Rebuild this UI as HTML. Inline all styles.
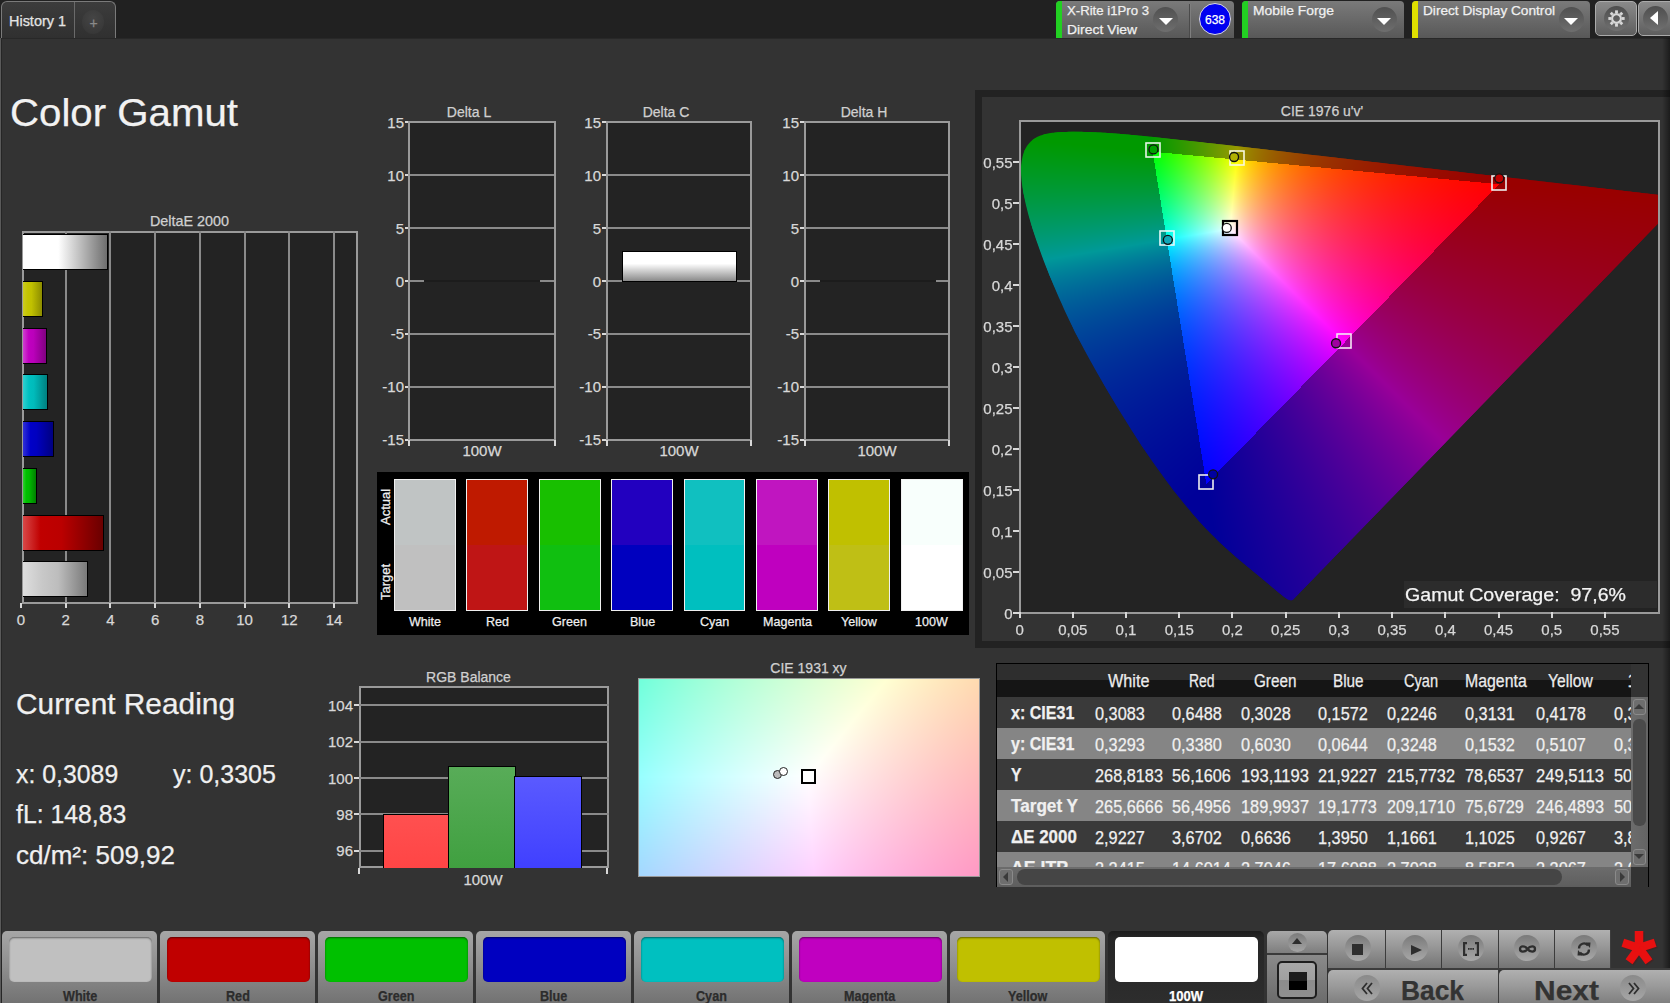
<!DOCTYPE html>
<html><head><meta charset="utf-8"><title>Color Gamut</title>
<style>
html,body{margin:0;padding:0;}
body{width:1670px;height:1003px;overflow:hidden;position:relative;background:#333;font-family:"Liberation Sans",sans-serif;}
.a{position:absolute;}
.fb rect{width:10px;height:10px;}
.t{position:absolute;white-space:nowrap;line-height:1;transform-origin:0 0;-webkit-text-stroke:0.25px currentColor;}
</style></head><body>
<div class="a" style="left:0px;top:0px;width:1670px;height:38px;background:#212121;"></div>
<div class="a" style="left:0px;top:38px;width:1670px;height:965px;background:#333;"></div>
<div class="a" style="left:0px;top:38px;width:1670px;height:1px;background:#282828;"></div>
<div class="a" style="left:0px;top:38px;width:1px;height:965px;background:#5a5a5a;"></div>
<div class="a" style="left:1px;top:38px;width:1px;height:965px;background:#262626;"></div>
<div class="a" style="left:1px;top:1px;width:115px;height:37px;border:1px solid #7a7a7a;border-bottom:none;border-radius:6px 6px 0 0;background:linear-gradient(#3c3c3c,#303030);box-sizing:border-box;"></div>
<div class="a" style="left:74px;top:2px;width:1px;height:36px;background:#6a6a6a;"></div>
<div class="a" style="left:82px;top:10px;width:22px;height:24px;border-radius:50%;background:radial-gradient(circle at 50% 35%,#454545,#343434);"></div>
<div class="t" style="left:89.41px;top:16.15px;font-size:14.00px;color:#8a8a8a;">+</div>
<div class="t" style="left:9.00px;top:14.15px;font-size:14.00px;color:#e4e4e4;transform:scaleX(1.0319);">History 1</div>
<div class="a" style="left:1056px;top:1px;width:178px;height:37px;border-radius:4px 4px 0 0;background:linear-gradient(#7a7a7a,#585858);"></div><div class="a" style="left:1056px;top:1px;width:6px;height:37px;border-radius:4px 0 0 0;background:#22d022;"></div>
<div class="a" style="left:1189px;top:4px;width:1px;height:34px;background:#4a4a4a;"></div>
<div class="a" style="left:1190px;top:4px;width:1px;height:34px;background:#7e7e7e;"></div>
<div class="a" style="left:1153px;top:7px;width:25px;height:25px;border-radius:50%;background:linear-gradient(#505050,#6e6e6e);"></div><div class="a" style="left:1158.5px;top:17.5px;width:0;height:0;border-left:7px solid transparent;border-right:7px solid transparent;border-top:7px solid #fff;"></div>
<div class="t" style="left:1067.00px;top:4.00px;font-size:13.00px;color:#f0f0f0;transform:scaleX(1.0133);">X-Rite i1Pro 3</div>
<div class="t" style="left:1067.00px;top:23.00px;font-size:13.00px;color:#f0f0f0;transform:scaleX(1.0686);">Direct View</div>
<div class="a" style="left:1199px;top:3px;width:32px;height:32px;border-radius:50%;background:#0000f0;box-sizing:border-box;border:1px solid #ddd;"></div>
<div class="t" style="left:1205.00px;top:13.84px;font-size:12.00px;color:#fff;">638</div>
<div class="a" style="left:1242px;top:1px;width:162px;height:37px;border-radius:4px 4px 0 0;background:linear-gradient(#7a7a7a,#585858);"></div><div class="a" style="left:1242px;top:1px;width:6px;height:37px;border-radius:4px 0 0 0;background:#22d022;"></div>
<div class="a" style="left:1371.5px;top:7px;width:25px;height:25px;border-radius:50%;background:linear-gradient(#505050,#6e6e6e);"></div><div class="a" style="left:1377px;top:17.5px;width:0;height:0;border-left:7px solid transparent;border-right:7px solid transparent;border-top:7px solid #fff;"></div>
<div class="t" style="left:1253.00px;top:4.00px;font-size:13.00px;color:#f0f0f0;transform:scaleX(1.0676);">Mobile Forge</div>
<div class="a" style="left:1412px;top:1px;width:178px;height:37px;border-radius:4px 4px 0 0;background:linear-gradient(#7a7a7a,#585858);"></div><div class="a" style="left:1412px;top:1px;width:6px;height:37px;border-radius:4px 0 0 0;background:#e0e000;"></div>
<div class="a" style="left:1558.5px;top:7px;width:25px;height:25px;border-radius:50%;background:linear-gradient(#505050,#6e6e6e);"></div><div class="a" style="left:1564px;top:17.5px;width:0;height:0;border-left:7px solid transparent;border-right:7px solid transparent;border-top:7px solid #fff;"></div>
<div class="t" style="left:1423.00px;top:4.00px;font-size:13.00px;color:#f0f0f0;transform:scaleX(1.0501);">Direct Display Control</div>
<div class="a" style="left:1595px;top:1px;width:42px;height:35px;border-radius:5px;border:1px solid #aaa;box-sizing:border-box;background:linear-gradient(#8a8a8a,#5e5e5e);"></div>
<div class="a" style="left:1604px;top:6px;width:25px;height:25px;border-radius:50%;background:linear-gradient(#4e4e4e,#707070);"></div>
<svg class="a" style="left:1605px;top:7px;" width="23" height="23" viewBox="-12 -12 24 24"><g fill="none" stroke="#d8d8d8" stroke-width="2.2"><circle r="4.6"/></g><g stroke="#d8d8d8" stroke-width="3"><line x1="0" y1="-5.5" x2="0" y2="-8.5" transform="rotate(0)"/><line x1="0" y1="-5.5" x2="0" y2="-8.5" transform="rotate(45)"/><line x1="0" y1="-5.5" x2="0" y2="-8.5" transform="rotate(90)"/><line x1="0" y1="-5.5" x2="0" y2="-8.5" transform="rotate(135)"/><line x1="0" y1="-5.5" x2="0" y2="-8.5" transform="rotate(180)"/><line x1="0" y1="-5.5" x2="0" y2="-8.5" transform="rotate(225)"/><line x1="0" y1="-5.5" x2="0" y2="-8.5" transform="rotate(270)"/><line x1="0" y1="-5.5" x2="0" y2="-8.5" transform="rotate(315)"/></g></svg>
<div class="a" style="left:1638px;top:1px;width:40px;height:35px;border-radius:5px;border:1px solid #aaa;box-sizing:border-box;background:linear-gradient(#8a8a8a,#5e5e5e);"></div>
<div class="a" style="left:1643px;top:6px;width:25px;height:25px;border-radius:50%;background:linear-gradient(#4e4e4e,#707070);"></div>
<div class="a" style="left:1650px;top:11px;width:0;height:0;border-top:7px solid transparent;border-bottom:7px solid transparent;border-right:8px solid #fff;"></div>
<div class="t" style="left:10.00px;top:92.56px;font-size:39.50px;color:#f2f2f2;transform:scaleX(1.0183);">Color Gamut</div>
<div class="t" style="left:149.50px;top:214.15px;font-size:14.00px;color:#d0d0d0;transform:scaleX(1.0252);">DeltaE 2000</div>
<div class="a" style="left:21.5px;top:231px;width:336px;height:372.5px;background:#232323;box-sizing:border-box;border:2px solid #9a9a9a;"></div>
<div class="a" style="left:65px;top:231px;width:2px;height:372.5px;background:#8a8a8a;"></div>
<div class="a" style="left:109px;top:231px;width:2px;height:372.5px;background:#8a8a8a;"></div>
<div class="a" style="left:154px;top:231px;width:2px;height:372.5px;background:#8a8a8a;"></div>
<div class="a" style="left:199px;top:231px;width:2px;height:372.5px;background:#8a8a8a;"></div>
<div class="a" style="left:244px;top:231px;width:2px;height:372.5px;background:#8a8a8a;"></div>
<div class="a" style="left:288px;top:231px;width:2px;height:372.5px;background:#8a8a8a;"></div>
<div class="a" style="left:333px;top:231px;width:2px;height:372.5px;background:#8a8a8a;"></div>
<div class="a" style="left:20px;top:603px;width:2px;height:5px;background:#d8d8d8;"></div>
<div class="t" style="left:16.63px;top:612.10px;font-size:15.00px;color:#d8d8d8;">0</div>
<div class="a" style="left:65px;top:603px;width:2px;height:5px;background:#d8d8d8;"></div>
<div class="t" style="left:61.39px;top:612.10px;font-size:15.00px;color:#d8d8d8;">2</div>
<div class="a" style="left:109px;top:603px;width:2px;height:5px;background:#d8d8d8;"></div>
<div class="t" style="left:106.15px;top:612.10px;font-size:15.00px;color:#d8d8d8;">4</div>
<div class="a" style="left:154px;top:603px;width:2px;height:5px;background:#d8d8d8;"></div>
<div class="t" style="left:150.91px;top:612.10px;font-size:15.00px;color:#d8d8d8;">6</div>
<div class="a" style="left:199px;top:603px;width:2px;height:5px;background:#d8d8d8;"></div>
<div class="t" style="left:195.67px;top:612.10px;font-size:15.00px;color:#d8d8d8;">8</div>
<div class="a" style="left:244px;top:603px;width:2px;height:5px;background:#d8d8d8;"></div>
<div class="t" style="left:236.26px;top:612.10px;font-size:15.00px;color:#d8d8d8;">10</div>
<div class="a" style="left:288px;top:603px;width:2px;height:5px;background:#d8d8d8;"></div>
<div class="t" style="left:281.02px;top:612.10px;font-size:15.00px;color:#d8d8d8;">12</div>
<div class="a" style="left:333px;top:603px;width:2px;height:5px;background:#d8d8d8;"></div>
<div class="t" style="left:325.78px;top:612.10px;font-size:15.00px;color:#d8d8d8;">14</div>
<div class="a" style="left:22.6px;top:234.3px;width:85.64px;height:36px;box-sizing:border-box;border:1.5px solid #000;border-left:none;background:linear-gradient(to right,#ffffff 0%,#ffffff 42%,#6e6e6e 100%);"></div>
<div class="a" style="left:22.6px;top:281px;width:20.44px;height:36px;box-sizing:border-box;border:1.5px solid #000;border-left:none;background:linear-gradient(to right,#cccc20 0%,#c4c400 25%,#c0c000 45%,#8c8c00 100%);"></div>
<div class="a" style="left:22.6px;top:327.7px;width:24.37px;height:36px;box-sizing:border-box;border:1.5px solid #000;border-left:none;background:linear-gradient(to right,#d040d0 0%,#c000c0 25%,#bb00bb 45%,#800080 100%);"></div>
<div class="a" style="left:22.6px;top:374.4px;width:25.8px;height:36px;box-sizing:border-box;border:1.5px solid #000;border-left:none;background:linear-gradient(to right,#30d0d0 0%,#00c0c0 25%,#00bbbb 45%,#008080 100%);"></div>
<div class="a" style="left:22.6px;top:421.1px;width:30.92px;height:36px;box-sizing:border-box;border:1.5px solid #000;border-left:none;background:linear-gradient(to right,#3030d8 0%,#0000c8 25%,#0000c0 45%,#000080 100%);"></div>
<div class="a" style="left:22.6px;top:467.8px;width:14.55px;height:36px;box-sizing:border-box;border:1.5px solid #000;border-left:none;background:linear-gradient(to right,#30d030 0%,#00c000 25%,#00bb00 45%,#008000 100%);"></div>
<div class="a" style="left:22.6px;top:514.5px;width:81.84px;height:36px;box-sizing:border-box;border:1.5px solid #000;border-left:none;background:linear-gradient(to right,#d84848 0%,#c00000 22%,#bb0000 48%,#6a0000 100%);"></div>
<div class="a" style="left:22.6px;top:561.2px;width:65.11px;height:36px;box-sizing:border-box;border:1.5px solid #000;border-left:none;background:linear-gradient(to right,#dedede 0%,#c8c8c8 30%,#bdbdbd 55%,#7a7a7a 100%);"></div>
<div class="t" style="left:446.82px;top:105.15px;font-size:14.00px;color:#d0d0d0;">Delta L</div><div class="a" style="left:409.5px;top:122.4px;width:145px;height:317.2px;background:#232323;"></div><div class="a" style="left:409.5px;top:121px;width:145px;height:2px;background:#9a9a9a;"></div><div class="a" style="left:404.5px;top:121px;width:5px;height:2px;background:#d8d8d8;"></div><div class="t" style="left:387.31px;top:115.00px;font-size:15.00px;color:#d8d8d8;">15</div><div class="a" style="left:409.5px;top:174px;width:145px;height:2px;background:#8a8a8a;"></div><div class="a" style="left:404.5px;top:174px;width:5px;height:2px;background:#d8d8d8;"></div><div class="t" style="left:387.31px;top:167.87px;font-size:15.00px;color:#d8d8d8;">10</div><div class="a" style="left:409.5px;top:227px;width:145px;height:2px;background:#8a8a8a;"></div><div class="a" style="left:404.5px;top:227px;width:5px;height:2px;background:#d8d8d8;"></div><div class="t" style="left:395.66px;top:220.74px;font-size:15.00px;color:#d8d8d8;">5</div><div class="a" style="left:409.5px;top:280px;width:145px;height:2px;background:#8a8a8a;"></div><div class="a" style="left:404.5px;top:280px;width:5px;height:2px;background:#d8d8d8;"></div><div class="t" style="left:395.66px;top:273.60px;font-size:15.00px;color:#d8d8d8;">0</div><div class="a" style="left:409.5px;top:333px;width:145px;height:2px;background:#8a8a8a;"></div><div class="a" style="left:404.5px;top:333px;width:5px;height:2px;background:#d8d8d8;"></div><div class="t" style="left:390.66px;top:326.47px;font-size:15.00px;color:#d8d8d8;">-5</div><div class="a" style="left:409.5px;top:386px;width:145px;height:2px;background:#8a8a8a;"></div><div class="a" style="left:404.5px;top:386px;width:5px;height:2px;background:#d8d8d8;"></div><div class="t" style="left:382.32px;top:379.34px;font-size:15.00px;color:#d8d8d8;">-10</div><div class="a" style="left:409.5px;top:439px;width:145px;height:2px;background:#9a9a9a;"></div><div class="a" style="left:404.5px;top:439px;width:5px;height:2px;background:#d8d8d8;"></div><div class="t" style="left:382.32px;top:432.20px;font-size:15.00px;color:#d8d8d8;">-15</div><div class="a" style="left:408px;top:121.4px;width:2px;height:319.2px;background:#9a9a9a;"></div><div class="a" style="left:554px;top:121.4px;width:2px;height:319.2px;background:#9a9a9a;"></div><div class="a" style="left:408px;top:439.6px;width:2px;height:6px;background:#d8d8d8;"></div><div class="a" style="left:554px;top:439.6px;width:2px;height:6px;background:#d8d8d8;"></div><div class="t" style="left:462.41px;top:442.80px;font-size:15.00px;color:#d8d8d8;">100W</div>
<div class="a" style="left:423.5px;top:280.3px;width:116px;height:2px;background:#1c1c1c;"></div>
<div class="t" style="left:642.66px;top:105.15px;font-size:14.00px;color:#d0d0d0;">Delta C</div><div class="a" style="left:606.5px;top:122.4px;width:145px;height:317.2px;background:#232323;"></div><div class="a" style="left:606.5px;top:121px;width:145px;height:2px;background:#9a9a9a;"></div><div class="a" style="left:601.5px;top:121px;width:5px;height:2px;background:#d8d8d8;"></div><div class="t" style="left:584.31px;top:115.00px;font-size:15.00px;color:#d8d8d8;">15</div><div class="a" style="left:606.5px;top:174px;width:145px;height:2px;background:#8a8a8a;"></div><div class="a" style="left:601.5px;top:174px;width:5px;height:2px;background:#d8d8d8;"></div><div class="t" style="left:584.31px;top:167.87px;font-size:15.00px;color:#d8d8d8;">10</div><div class="a" style="left:606.5px;top:227px;width:145px;height:2px;background:#8a8a8a;"></div><div class="a" style="left:601.5px;top:227px;width:5px;height:2px;background:#d8d8d8;"></div><div class="t" style="left:592.66px;top:220.74px;font-size:15.00px;color:#d8d8d8;">5</div><div class="a" style="left:606.5px;top:280px;width:145px;height:2px;background:#8a8a8a;"></div><div class="a" style="left:601.5px;top:280px;width:5px;height:2px;background:#d8d8d8;"></div><div class="t" style="left:592.66px;top:273.60px;font-size:15.00px;color:#d8d8d8;">0</div><div class="a" style="left:606.5px;top:333px;width:145px;height:2px;background:#8a8a8a;"></div><div class="a" style="left:601.5px;top:333px;width:5px;height:2px;background:#d8d8d8;"></div><div class="t" style="left:587.66px;top:326.47px;font-size:15.00px;color:#d8d8d8;">-5</div><div class="a" style="left:606.5px;top:386px;width:145px;height:2px;background:#8a8a8a;"></div><div class="a" style="left:601.5px;top:386px;width:5px;height:2px;background:#d8d8d8;"></div><div class="t" style="left:579.32px;top:379.34px;font-size:15.00px;color:#d8d8d8;">-10</div><div class="a" style="left:606.5px;top:439px;width:145px;height:2px;background:#9a9a9a;"></div><div class="a" style="left:601.5px;top:439px;width:5px;height:2px;background:#d8d8d8;"></div><div class="t" style="left:579.32px;top:432.20px;font-size:15.00px;color:#d8d8d8;">-15</div><div class="a" style="left:606px;top:121.4px;width:2px;height:319.2px;background:#9a9a9a;"></div><div class="a" style="left:750px;top:121.4px;width:2px;height:319.2px;background:#9a9a9a;"></div><div class="a" style="left:606px;top:439.6px;width:2px;height:6px;background:#d8d8d8;"></div><div class="a" style="left:750px;top:439.6px;width:2px;height:6px;background:#d8d8d8;"></div><div class="t" style="left:659.41px;top:442.80px;font-size:15.00px;color:#d8d8d8;">100W</div>
<div class="a" style="left:621.5px;top:250.5px;width:115px;height:31.5px;box-sizing:border-box;border:1.5px solid #000;background:linear-gradient(#ffffff 0%,#ffffff 40%,#8a8a8a 100%);"></div>
<div class="t" style="left:840.66px;top:105.15px;font-size:14.00px;color:#d0d0d0;">Delta H</div><div class="a" style="left:804.5px;top:122.4px;width:145px;height:317.2px;background:#232323;"></div><div class="a" style="left:804.5px;top:121px;width:145px;height:2px;background:#9a9a9a;"></div><div class="a" style="left:799.5px;top:121px;width:5px;height:2px;background:#d8d8d8;"></div><div class="t" style="left:782.31px;top:115.00px;font-size:15.00px;color:#d8d8d8;">15</div><div class="a" style="left:804.5px;top:174px;width:145px;height:2px;background:#8a8a8a;"></div><div class="a" style="left:799.5px;top:174px;width:5px;height:2px;background:#d8d8d8;"></div><div class="t" style="left:782.31px;top:167.87px;font-size:15.00px;color:#d8d8d8;">10</div><div class="a" style="left:804.5px;top:227px;width:145px;height:2px;background:#8a8a8a;"></div><div class="a" style="left:799.5px;top:227px;width:5px;height:2px;background:#d8d8d8;"></div><div class="t" style="left:790.66px;top:220.74px;font-size:15.00px;color:#d8d8d8;">5</div><div class="a" style="left:804.5px;top:280px;width:145px;height:2px;background:#8a8a8a;"></div><div class="a" style="left:799.5px;top:280px;width:5px;height:2px;background:#d8d8d8;"></div><div class="t" style="left:790.66px;top:273.60px;font-size:15.00px;color:#d8d8d8;">0</div><div class="a" style="left:804.5px;top:333px;width:145px;height:2px;background:#8a8a8a;"></div><div class="a" style="left:799.5px;top:333px;width:5px;height:2px;background:#d8d8d8;"></div><div class="t" style="left:785.66px;top:326.47px;font-size:15.00px;color:#d8d8d8;">-5</div><div class="a" style="left:804.5px;top:386px;width:145px;height:2px;background:#8a8a8a;"></div><div class="a" style="left:799.5px;top:386px;width:5px;height:2px;background:#d8d8d8;"></div><div class="t" style="left:777.32px;top:379.34px;font-size:15.00px;color:#d8d8d8;">-10</div><div class="a" style="left:804.5px;top:439px;width:145px;height:2px;background:#9a9a9a;"></div><div class="a" style="left:799.5px;top:439px;width:5px;height:2px;background:#d8d8d8;"></div><div class="t" style="left:777.32px;top:432.20px;font-size:15.00px;color:#d8d8d8;">-15</div><div class="a" style="left:804px;top:121.4px;width:2px;height:319.2px;background:#9a9a9a;"></div><div class="a" style="left:948px;top:121.4px;width:2px;height:319.2px;background:#9a9a9a;"></div><div class="a" style="left:804px;top:439.6px;width:2px;height:6px;background:#d8d8d8;"></div><div class="a" style="left:948px;top:439.6px;width:2px;height:6px;background:#d8d8d8;"></div><div class="t" style="left:857.41px;top:442.80px;font-size:15.00px;color:#d8d8d8;">100W</div>
<div class="a" style="left:819.5px;top:280.3px;width:116px;height:2px;background:#1c1c1c;"></div>
<div class="a" style="left:377px;top:471.5px;width:592px;height:163px;background:#000;"></div>
<div class="a" style="left:394px;top:479px;width:61.8px;height:132px;box-sizing:border-box;border:1.5px solid #f0f0f0;background:linear-gradient(#c0c4c4 0%,#c0c4c4 50%,#c0c0c0 50%,#c0c0c0 100%);"></div>
<div class="t" style="left:408.95px;top:614.57px;font-size:13.50px;color:#f0f0f0;transform:scaleX(0.9300);">White</div>
<div class="a" style="left:466.4px;top:479px;width:61.8px;height:132px;box-sizing:border-box;border:1.5px solid #f0f0f0;background:linear-gradient(#bf1a00 0%,#bf1a00 50%,#bf1515 50%,#bf1515 100%);"></div>
<div class="t" style="left:485.88px;top:614.57px;font-size:13.50px;color:#f0f0f0;transform:scaleX(0.9300);">Red</div>
<div class="a" style="left:538.8px;top:479px;width:61.8px;height:132px;box-sizing:border-box;border:1.5px solid #f0f0f0;background:linear-gradient(#18bf00 0%,#18bf00 50%,#10bf10 50%,#10bf10 100%);"></div>
<div class="t" style="left:552.35px;top:614.57px;font-size:13.50px;color:#f0f0f0;transform:scaleX(0.9300);">Green</div>
<div class="a" style="left:611.2px;top:479px;width:61.8px;height:132px;box-sizing:border-box;border:1.5px solid #f0f0f0;background:linear-gradient(#2200bf 0%,#2200bf 50%,#0000bf 50%,#0000bf 100%);"></div>
<div class="t" style="left:629.64px;top:614.57px;font-size:13.50px;color:#f0f0f0;transform:scaleX(0.9300);">Blue</div>
<div class="a" style="left:683.6px;top:479px;width:61.8px;height:132px;box-sizing:border-box;border:1.5px solid #f0f0f0;background:linear-gradient(#10c0c0 0%,#10c0c0 50%,#00bfbf 50%,#00bfbf 100%);"></div>
<div class="t" style="left:699.94px;top:614.57px;font-size:13.50px;color:#f0f0f0;transform:scaleX(0.9300);">Cyan</div>
<div class="a" style="left:756px;top:479px;width:61.8px;height:132px;box-sizing:border-box;border:1.5px solid #f0f0f0;background:linear-gradient(#c015c0 0%,#c015c0 50%,#bf00bf 50%,#bf00bf 100%);"></div>
<div class="t" style="left:762.57px;top:614.57px;font-size:13.50px;color:#f0f0f0;transform:scaleX(0.9300);">Magenta</div>
<div class="a" style="left:828.4px;top:479px;width:61.8px;height:132px;box-sizing:border-box;border:1.5px solid #f0f0f0;background:linear-gradient(#c0c000 0%,#c0c000 50%,#bfbf15 50%,#bfbf15 100%);"></div>
<div class="t" style="left:841.48px;top:614.57px;font-size:13.50px;color:#f0f0f0;transform:scaleX(0.9300);">Yellow</div>
<div class="a" style="left:900.8px;top:479px;width:61.8px;height:132px;box-sizing:border-box;border:1.5px solid #f0f0f0;background:linear-gradient(#f8fffc 0%,#f8fffc 50%,#ffffff 50%,#ffffff 100%);"></div>
<div class="t" style="left:915.40px;top:614.57px;font-size:13.50px;color:#f0f0f0;transform:scaleX(0.9300);">100W</div>
<div class="t" style="left:378.5px;top:525.0px;font-size:13px;color:#f0f0f0;transform:rotate(-90deg);transform-origin:0 0;">Actual</div>
<div class="t" style="left:378.5px;top:600.0px;font-size:13px;color:#f0f0f0;transform:rotate(-90deg);transform-origin:0 0;">Target</div>
<div class="a" style="left:975px;top:90px;width:695px;height:558px;background:#222;"></div>
<div class="a" style="left:982px;top:97px;width:688px;height:544px;background:#333;"></div>
<div class="t" style="left:1280.80px;top:104.15px;font-size:14.00px;color:#d0d0d0;">CIE 1976 u'v'</div>
<div class="a" style="left:1019px;top:120px;width:640.5px;height:493.5px;background:#232323;"></div>
<svg class="a fb" style="left:1019px;top:120px;" width="641" height="495"><defs><clipPath id="hs"><path d="M273.9 479.8 L273.5 480.0 L272.7 480.3 L271.5 480.3 L269.0 479.5 L266.3 477.7 L262.5 474.8 L257.2 470.5 L250.4 464.7 L241.8 457.5 L230.6 448.3 L217.0 436.9 L200.4 421.9 L180.4 401.5 L153.9 369.5 L122.7 325.7 L88.7 271.1 L56.1 212.1 L30.6 155.5 L13.3 107.8 L4.3 72.3 L2.1 47.6 L5.5 30.6 L13.7 19.9 L25.2 14.4 L38.9 12.3 L53.9 11.8 L69.1 12.0 L84.9 12.8 L102.0 14.0 L120.5 15.7 L140.9 17.7 L163.5 20.2 L188.5 23.0 L216.2 26.1 L246.6 29.6 L279.8 33.4 L315.6 37.5 L353.4 41.9 L392.3 46.4 L430.0 50.7 L466.7 55.0 L499.9 58.8 L529.3 62.2 L554.3 65.1 L575.2 67.4 L592.9 69.5 L608.2 71.3 L621.1 72.8 L631.6 73.9 L639.7 74.9 L650.8 76.2 L664.1 77.7Z"/></clipPath><clipPath id="tr"><path d="M480.3 64.2 L133.6 31.7 L187.3 363.8Z"/></clipPath></defs><g clip-path="url(#hs)" shape-rendering="crispEdges"><rect x="10" y="10" fill="#009900"/><rect x="20" y="10" fill="#009900"/><rect x="30" y="10" fill="#009900"/><rect x="40" y="10" fill="#009900"/><rect x="50" y="10" fill="#009900"/><rect x="60" y="10" fill="#009900"/><rect x="70" y="10" fill="#009900"/><rect x="80" y="10" fill="#009900"/><rect x="90" y="10" fill="#009900"/><rect x="100" y="10" fill="#009900"/><rect x="110" y="10" fill="#009900"/><rect x="120" y="10" fill="#009900"/><rect x="130" y="10" fill="#059900"/><rect x="140" y="10" fill="#139900"/><rect x="150" y="10" fill="#229900"/><rect x="160" y="10" fill="#319900"/><rect x="0" y="20" fill="#009905"/><rect x="10" y="20" fill="#009904"/><rect x="20" y="20" fill="#009903"/><rect x="30" y="20" fill="#009902"/><rect x="40" y="20" fill="#009901"/><rect x="50" y="20" fill="#009900"/><rect x="60" y="20" fill="#009900"/><rect x="70" y="20" fill="#009900"/><rect x="80" y="20" fill="#009900"/><rect x="90" y="20" fill="#009900"/><rect x="100" y="20" fill="#009900"/><rect x="110" y="20" fill="#009900"/><rect x="120" y="20" fill="#009900"/><rect x="130" y="20" fill="#039900"/><rect x="140" y="20" fill="#119900"/><rect x="150" y="20" fill="#209900"/><rect x="160" y="20" fill="#309900"/><rect x="170" y="20" fill="#419900"/><rect x="180" y="20" fill="#539900"/><rect x="190" y="20" fill="#669900"/><rect x="200" y="20" fill="#7a9900"/><rect x="210" y="20" fill="#8f9900"/><rect x="220" y="20" fill="#998c00"/><rect x="230" y="20" fill="#997a00"/><rect x="240" y="20" fill="#996b00"/><rect x="250" y="20" fill="#995f00"/><rect x="0" y="30" fill="#00990e"/><rect x="10" y="30" fill="#00990e"/><rect x="20" y="30" fill="#00990d"/><rect x="30" y="30" fill="#00990d"/><rect x="40" y="30" fill="#00990c"/><rect x="50" y="30" fill="#00990b"/><rect x="60" y="30" fill="#00990a"/><rect x="70" y="30" fill="#009909"/><rect x="80" y="30" fill="#009909"/><rect x="90" y="30" fill="#009908"/><rect x="100" y="30" fill="#009907"/><rect x="110" y="30" fill="#009906"/><rect x="120" y="30" fill="#009905"/><rect x="130" y="30" fill="#019904"/><rect x="140" y="30" fill="#0f9902"/><rect x="150" y="30" fill="#1f9901"/><rect x="160" y="30" fill="#2f9900"/><rect x="170" y="30" fill="#409900"/><rect x="180" y="30" fill="#539900"/><rect x="190" y="30" fill="#669900"/><rect x="200" y="30" fill="#7b9900"/><rect x="210" y="30" fill="#919900"/><rect x="220" y="30" fill="#998900"/><rect x="230" y="30" fill="#997700"/><rect x="240" y="30" fill="#996900"/><rect x="250" y="30" fill="#995c00"/><rect x="260" y="30" fill="#995200"/><rect x="270" y="30" fill="#994900"/><rect x="280" y="30" fill="#994100"/><rect x="290" y="30" fill="#993a00"/><rect x="300" y="30" fill="#993400"/><rect x="310" y="30" fill="#992f00"/><rect x="320" y="30" fill="#992a00"/><rect x="330" y="30" fill="#992600"/><rect x="0" y="40" fill="#009919"/><rect x="10" y="40" fill="#009918"/><rect x="20" y="40" fill="#009918"/><rect x="30" y="40" fill="#009917"/><rect x="40" y="40" fill="#009917"/><rect x="50" y="40" fill="#009916"/><rect x="60" y="40" fill="#009916"/><rect x="70" y="40" fill="#009915"/><rect x="80" y="40" fill="#009915"/><rect x="90" y="40" fill="#009914"/><rect x="100" y="40" fill="#009913"/><rect x="110" y="40" fill="#009913"/><rect x="120" y="40" fill="#009912"/><rect x="130" y="40" fill="#009911"/><rect x="140" y="40" fill="#0d9910"/><rect x="150" y="40" fill="#1d9910"/><rect x="160" y="40" fill="#2e990f"/><rect x="170" y="40" fill="#40990e"/><rect x="180" y="40" fill="#53990d"/><rect x="190" y="40" fill="#67990c"/><rect x="200" y="40" fill="#7c990b"/><rect x="210" y="40" fill="#939909"/><rect x="220" y="40" fill="#998707"/><rect x="230" y="40" fill="#997505"/><rect x="240" y="40" fill="#996603"/><rect x="250" y="40" fill="#995a02"/><rect x="260" y="40" fill="#995001"/><rect x="270" y="40" fill="#994700"/><rect x="280" y="40" fill="#993f00"/><rect x="290" y="40" fill="#993800"/><rect x="300" y="40" fill="#993200"/><rect x="310" y="40" fill="#992d00"/><rect x="320" y="40" fill="#992800"/><rect x="330" y="40" fill="#992400"/><rect x="340" y="40" fill="#992000"/><rect x="350" y="40" fill="#991d00"/><rect x="360" y="40" fill="#991900"/><rect x="370" y="40" fill="#991600"/><rect x="380" y="40" fill="#991400"/><rect x="390" y="40" fill="#991100"/><rect x="400" y="40" fill="#990f00"/><rect x="410" y="40" fill="#990d00"/><rect x="420" y="40" fill="#990b00"/><rect x="0" y="50" fill="#009923"/><rect x="10" y="50" fill="#009923"/><rect x="20" y="50" fill="#009923"/><rect x="30" y="50" fill="#009923"/><rect x="40" y="50" fill="#009923"/><rect x="50" y="50" fill="#009922"/><rect x="60" y="50" fill="#009922"/><rect x="70" y="50" fill="#009922"/><rect x="80" y="50" fill="#009921"/><rect x="90" y="50" fill="#009921"/><rect x="100" y="50" fill="#009921"/><rect x="110" y="50" fill="#009920"/><rect x="120" y="50" fill="#009920"/><rect x="130" y="50" fill="#009920"/><rect x="140" y="50" fill="#0b991f"/><rect x="150" y="50" fill="#1b991f"/><rect x="160" y="50" fill="#2d991e"/><rect x="170" y="50" fill="#3f991e"/><rect x="180" y="50" fill="#52991d"/><rect x="190" y="50" fill="#67991d"/><rect x="200" y="50" fill="#7e991c"/><rect x="210" y="50" fill="#95991c"/><rect x="220" y="50" fill="#998517"/><rect x="230" y="50" fill="#997314"/><rect x="240" y="50" fill="#996410"/><rect x="250" y="50" fill="#99570e"/><rect x="260" y="50" fill="#994d0c"/><rect x="270" y="50" fill="#99440a"/><rect x="280" y="50" fill="#993d08"/><rect x="290" y="50" fill="#993607"/><rect x="300" y="50" fill="#993006"/><rect x="310" y="50" fill="#992b05"/><rect x="320" y="50" fill="#992604"/><rect x="330" y="50" fill="#992203"/><rect x="340" y="50" fill="#991e02"/><rect x="350" y="50" fill="#991b01"/><rect x="360" y="50" fill="#991800"/><rect x="370" y="50" fill="#991500"/><rect x="380" y="50" fill="#991200"/><rect x="390" y="50" fill="#991000"/><rect x="400" y="50" fill="#990d00"/><rect x="410" y="50" fill="#990b00"/><rect x="420" y="50" fill="#990900"/><rect x="430" y="50" fill="#990800"/><rect x="440" y="50" fill="#990600"/><rect x="450" y="50" fill="#990400"/><rect x="460" y="50" fill="#990300"/><rect x="470" y="50" fill="#990100"/><rect x="480" y="50" fill="#990000"/><rect x="490" y="50" fill="#990000"/><rect x="500" y="50" fill="#990000"/><rect x="510" y="50" fill="#990000"/><rect x="0" y="60" fill="#00992f"/><rect x="10" y="60" fill="#00992f"/><rect x="20" y="60" fill="#00992f"/><rect x="30" y="60" fill="#00992f"/><rect x="40" y="60" fill="#00992f"/><rect x="50" y="60" fill="#00992f"/><rect x="60" y="60" fill="#00992f"/><rect x="70" y="60" fill="#00992f"/><rect x="80" y="60" fill="#00992f"/><rect x="90" y="60" fill="#00992f"/><rect x="100" y="60" fill="#00992f"/><rect x="110" y="60" fill="#00992f"/><rect x="120" y="60" fill="#00992f"/><rect x="130" y="60" fill="#00992f"/><rect x="140" y="60" fill="#09992f"/><rect x="150" y="60" fill="#1a992f"/><rect x="160" y="60" fill="#2b992f"/><rect x="170" y="60" fill="#3e992f"/><rect x="180" y="60" fill="#52992f"/><rect x="190" y="60" fill="#68992f"/><rect x="200" y="60" fill="#7f992f"/><rect x="210" y="60" fill="#98992f"/><rect x="220" y="60" fill="#998228"/><rect x="230" y="60" fill="#997023"/><rect x="240" y="60" fill="#99611e"/><rect x="250" y="60" fill="#99551a"/><rect x="260" y="60" fill="#994b17"/><rect x="270" y="60" fill="#994214"/><rect x="280" y="60" fill="#993a12"/><rect x="290" y="60" fill="#993410"/><rect x="300" y="60" fill="#992e0e"/><rect x="310" y="60" fill="#99290d"/><rect x="320" y="60" fill="#99240b"/><rect x="330" y="60" fill="#99200a"/><rect x="340" y="60" fill="#991c09"/><rect x="350" y="60" fill="#991908"/><rect x="360" y="60" fill="#991607"/><rect x="370" y="60" fill="#991306"/><rect x="380" y="60" fill="#991005"/><rect x="390" y="60" fill="#990e04"/><rect x="400" y="60" fill="#990c04"/><rect x="410" y="60" fill="#990a03"/><rect x="420" y="60" fill="#990802"/><rect x="430" y="60" fill="#990602"/><rect x="440" y="60" fill="#990501"/><rect x="450" y="60" fill="#990301"/><rect x="460" y="60" fill="#990100"/><rect x="470" y="60" fill="#990000"/><rect x="480" y="60" fill="#990000"/><rect x="490" y="60" fill="#990000"/><rect x="500" y="60" fill="#990000"/><rect x="510" y="60" fill="#990000"/><rect x="520" y="60" fill="#990000"/><rect x="530" y="60" fill="#990000"/><rect x="540" y="60" fill="#990000"/><rect x="550" y="60" fill="#990000"/><rect x="560" y="60" fill="#990000"/><rect x="570" y="60" fill="#990000"/><rect x="580" y="60" fill="#990000"/><rect x="590" y="60" fill="#990000"/><rect x="0" y="70" fill="#00993a"/><rect x="10" y="70" fill="#00993a"/><rect x="20" y="70" fill="#00993b"/><rect x="30" y="70" fill="#00993b"/><rect x="40" y="70" fill="#00993b"/><rect x="50" y="70" fill="#00993c"/><rect x="60" y="70" fill="#00993c"/><rect x="70" y="70" fill="#00993c"/><rect x="80" y="70" fill="#00993d"/><rect x="90" y="70" fill="#00993d"/><rect x="100" y="70" fill="#00993e"/><rect x="110" y="70" fill="#00993e"/><rect x="120" y="70" fill="#00993e"/><rect x="130" y="70" fill="#00993f"/><rect x="140" y="70" fill="#07993f"/><rect x="150" y="70" fill="#189940"/><rect x="160" y="70" fill="#2a9941"/><rect x="170" y="70" fill="#3d9941"/><rect x="180" y="70" fill="#529942"/><rect x="190" y="70" fill="#689943"/><rect x="200" y="70" fill="#809944"/><rect x="210" y="70" fill="#999744"/><rect x="220" y="70" fill="#99803a"/><rect x="230" y="70" fill="#996d32"/><rect x="240" y="70" fill="#995f2c"/><rect x="250" y="70" fill="#995227"/><rect x="260" y="70" fill="#994823"/><rect x="270" y="70" fill="#99401f"/><rect x="280" y="70" fill="#99381c"/><rect x="290" y="70" fill="#993219"/><rect x="300" y="70" fill="#992c17"/><rect x="310" y="70" fill="#992715"/><rect x="320" y="70" fill="#992213"/><rect x="330" y="70" fill="#991e11"/><rect x="340" y="70" fill="#991a10"/><rect x="350" y="70" fill="#99170e"/><rect x="360" y="70" fill="#99140d"/><rect x="370" y="70" fill="#99110c"/><rect x="380" y="70" fill="#990f0b"/><rect x="390" y="70" fill="#990c0a"/><rect x="400" y="70" fill="#990a09"/><rect x="410" y="70" fill="#990808"/><rect x="420" y="70" fill="#990607"/><rect x="430" y="70" fill="#990507"/><rect x="440" y="70" fill="#990306"/><rect x="450" y="70" fill="#990205"/><rect x="460" y="70" fill="#990005"/><rect x="470" y="70" fill="#990004"/><rect x="480" y="70" fill="#990004"/><rect x="490" y="70" fill="#990003"/><rect x="500" y="70" fill="#990003"/><rect x="510" y="70" fill="#990002"/><rect x="520" y="70" fill="#990002"/><rect x="530" y="70" fill="#990002"/><rect x="540" y="70" fill="#990001"/><rect x="550" y="70" fill="#990001"/><rect x="560" y="70" fill="#990000"/><rect x="570" y="70" fill="#990000"/><rect x="580" y="70" fill="#990000"/><rect x="590" y="70" fill="#990000"/><rect x="600" y="70" fill="#990000"/><rect x="610" y="70" fill="#990000"/><rect x="620" y="70" fill="#990000"/><rect x="630" y="70" fill="#990000"/><rect x="640" y="70" fill="#990000"/><rect x="0" y="80" fill="#009946"/><rect x="10" y="80" fill="#009947"/><rect x="20" y="80" fill="#009947"/><rect x="30" y="80" fill="#009948"/><rect x="40" y="80" fill="#009949"/><rect x="50" y="80" fill="#009949"/><rect x="60" y="80" fill="#00994a"/><rect x="70" y="80" fill="#00994b"/><rect x="80" y="80" fill="#00994b"/><rect x="90" y="80" fill="#00994c"/><rect x="100" y="80" fill="#00994d"/><rect x="110" y="80" fill="#00994e"/><rect x="120" y="80" fill="#00994f"/><rect x="130" y="80" fill="#009950"/><rect x="140" y="80" fill="#049951"/><rect x="150" y="80" fill="#169952"/><rect x="160" y="80" fill="#289954"/><rect x="170" y="80" fill="#3c9955"/><rect x="180" y="80" fill="#529956"/><rect x="190" y="80" fill="#699958"/><rect x="200" y="80" fill="#829959"/><rect x="210" y="80" fill="#999459"/><rect x="220" y="80" fill="#997d4c"/><rect x="230" y="80" fill="#996b43"/><rect x="240" y="80" fill="#995c3b"/><rect x="250" y="80" fill="#995034"/><rect x="260" y="80" fill="#99462f"/><rect x="270" y="80" fill="#993d2a"/><rect x="280" y="80" fill="#993626"/><rect x="290" y="80" fill="#992f23"/><rect x="300" y="80" fill="#992a20"/><rect x="310" y="80" fill="#99251d"/><rect x="320" y="80" fill="#99201b"/><rect x="330" y="80" fill="#991c19"/><rect x="340" y="80" fill="#991917"/><rect x="350" y="80" fill="#991515"/><rect x="360" y="80" fill="#991214"/><rect x="370" y="80" fill="#991012"/><rect x="380" y="80" fill="#990d11"/><rect x="390" y="80" fill="#990b10"/><rect x="400" y="80" fill="#99090f"/><rect x="410" y="80" fill="#99070e"/><rect x="420" y="80" fill="#99050d"/><rect x="430" y="80" fill="#99030c"/><rect x="440" y="80" fill="#99020b"/><rect x="450" y="80" fill="#99000a"/><rect x="460" y="80" fill="#990009"/><rect x="470" y="80" fill="#990009"/><rect x="480" y="80" fill="#990008"/><rect x="490" y="80" fill="#990007"/><rect x="500" y="80" fill="#990007"/><rect x="510" y="80" fill="#990006"/><rect x="520" y="80" fill="#990006"/><rect x="530" y="80" fill="#990005"/><rect x="540" y="80" fill="#990005"/><rect x="550" y="80" fill="#990004"/><rect x="560" y="80" fill="#990004"/><rect x="570" y="80" fill="#990003"/><rect x="580" y="80" fill="#990003"/><rect x="590" y="80" fill="#990003"/><rect x="600" y="80" fill="#990002"/><rect x="610" y="80" fill="#990002"/><rect x="620" y="80" fill="#990002"/><rect x="630" y="80" fill="#990001"/><rect x="640" y="80" fill="#990001"/><rect x="0" y="90" fill="#009953"/><rect x="10" y="90" fill="#009954"/><rect x="20" y="90" fill="#009955"/><rect x="30" y="90" fill="#009956"/><rect x="40" y="90" fill="#009956"/><rect x="50" y="90" fill="#009958"/><rect x="60" y="90" fill="#009959"/><rect x="70" y="90" fill="#00995a"/><rect x="80" y="90" fill="#00995b"/><rect x="90" y="90" fill="#00995c"/><rect x="100" y="90" fill="#00995e"/><rect x="110" y="90" fill="#00995f"/><rect x="120" y="90" fill="#009961"/><rect x="130" y="90" fill="#009962"/><rect x="140" y="90" fill="#019964"/><rect x="150" y="90" fill="#139966"/><rect x="160" y="90" fill="#279968"/><rect x="170" y="90" fill="#3b996a"/><rect x="180" y="90" fill="#52996c"/><rect x="190" y="90" fill="#6a996e"/><rect x="200" y="90" fill="#849971"/><rect x="210" y="90" fill="#99926f"/><rect x="220" y="90" fill="#997a5f"/><rect x="230" y="90" fill="#996853"/><rect x="240" y="90" fill="#99594a"/><rect x="250" y="90" fill="#994d42"/><rect x="260" y="90" fill="#99433b"/><rect x="270" y="90" fill="#993b36"/><rect x="280" y="90" fill="#993331"/><rect x="290" y="90" fill="#992d2d"/><rect x="300" y="90" fill="#992729"/><rect x="310" y="90" fill="#992226"/><rect x="320" y="90" fill="#991e23"/><rect x="330" y="90" fill="#991a20"/><rect x="340" y="90" fill="#99171e"/><rect x="350" y="90" fill="#99131c"/><rect x="360" y="90" fill="#99111a"/><rect x="370" y="90" fill="#990e18"/><rect x="380" y="90" fill="#990b17"/><rect x="390" y="90" fill="#990915"/><rect x="400" y="90" fill="#990714"/><rect x="410" y="90" fill="#990513"/><rect x="420" y="90" fill="#990312"/><rect x="430" y="90" fill="#990211"/><rect x="440" y="90" fill="#990010"/><rect x="450" y="90" fill="#99000f"/><rect x="460" y="90" fill="#99000e"/><rect x="470" y="90" fill="#99000d"/><rect x="480" y="90" fill="#99000c"/><rect x="490" y="90" fill="#99000b"/><rect x="500" y="90" fill="#99000b"/><rect x="510" y="90" fill="#99000a"/><rect x="520" y="90" fill="#990009"/><rect x="530" y="90" fill="#990009"/><rect x="540" y="90" fill="#990008"/><rect x="550" y="90" fill="#990008"/><rect x="560" y="90" fill="#990007"/><rect x="570" y="90" fill="#990007"/><rect x="580" y="90" fill="#990006"/><rect x="590" y="90" fill="#990006"/><rect x="600" y="90" fill="#990005"/><rect x="610" y="90" fill="#990005"/><rect x="620" y="90" fill="#990005"/><rect x="630" y="90" fill="#990004"/><rect x="640" y="90" fill="#990004"/><rect x="10" y="100" fill="#009961"/><rect x="20" y="100" fill="#009962"/><rect x="30" y="100" fill="#009964"/><rect x="40" y="100" fill="#009965"/><rect x="50" y="100" fill="#009967"/><rect x="60" y="100" fill="#009968"/><rect x="70" y="100" fill="#00996a"/><rect x="80" y="100" fill="#00996b"/><rect x="90" y="100" fill="#00996d"/><rect x="100" y="100" fill="#00996f"/><rect x="110" y="100" fill="#009971"/><rect x="120" y="100" fill="#009973"/><rect x="130" y="100" fill="#009975"/><rect x="140" y="100" fill="#009978"/><rect x="150" y="100" fill="#11997a"/><rect x="160" y="100" fill="#25997d"/><rect x="170" y="100" fill="#3a9980"/><rect x="180" y="100" fill="#529983"/><rect x="190" y="100" fill="#6a9987"/><rect x="200" y="100" fill="#86998b"/><rect x="210" y="100" fill="#998f86"/><rect x="220" y="100" fill="#997773"/><rect x="230" y="100" fill="#996565"/><rect x="240" y="100" fill="#995659"/><rect x="250" y="100" fill="#994a50"/><rect x="260" y="100" fill="#994048"/><rect x="270" y="100" fill="#993841"/><rect x="280" y="100" fill="#99313c"/><rect x="290" y="100" fill="#992a37"/><rect x="300" y="100" fill="#992532"/><rect x="310" y="100" fill="#99202f"/><rect x="320" y="100" fill="#991c2b"/><rect x="330" y="100" fill="#991828"/><rect x="340" y="100" fill="#991526"/><rect x="350" y="100" fill="#991223"/><rect x="360" y="100" fill="#990f21"/><rect x="370" y="100" fill="#990c1f"/><rect x="380" y="100" fill="#990a1d"/><rect x="390" y="100" fill="#99081b"/><rect x="400" y="100" fill="#99061a"/><rect x="410" y="100" fill="#990418"/><rect x="420" y="100" fill="#990217"/><rect x="430" y="100" fill="#990016"/><rect x="440" y="100" fill="#990014"/><rect x="450" y="100" fill="#990013"/><rect x="460" y="100" fill="#990012"/><rect x="470" y="100" fill="#990011"/><rect x="480" y="100" fill="#990010"/><rect x="490" y="100" fill="#990010"/><rect x="500" y="100" fill="#99000f"/><rect x="510" y="100" fill="#99000e"/><rect x="520" y="100" fill="#99000d"/><rect x="530" y="100" fill="#99000c"/><rect x="540" y="100" fill="#99000c"/><rect x="550" y="100" fill="#99000b"/><rect x="560" y="100" fill="#99000b"/><rect x="570" y="100" fill="#99000a"/><rect x="580" y="100" fill="#99000a"/><rect x="590" y="100" fill="#990009"/><rect x="600" y="100" fill="#990008"/><rect x="610" y="100" fill="#990008"/><rect x="620" y="100" fill="#990008"/><rect x="630" y="100" fill="#990007"/><rect x="640" y="100" fill="#990007"/><rect x="10" y="110" fill="#00996f"/><rect x="20" y="110" fill="#009971"/><rect x="30" y="110" fill="#009973"/><rect x="40" y="110" fill="#009974"/><rect x="50" y="110" fill="#009976"/><rect x="60" y="110" fill="#009978"/><rect x="70" y="110" fill="#00997a"/><rect x="80" y="110" fill="#00997d"/><rect x="90" y="110" fill="#00997f"/><rect x="100" y="110" fill="#009981"/><rect x="110" y="110" fill="#009984"/><rect x="120" y="110" fill="#009987"/><rect x="130" y="110" fill="#00998a"/><rect x="140" y="110" fill="#00998d"/><rect x="150" y="110" fill="#0f9991"/><rect x="160" y="110" fill="#239994"/><rect x="170" y="110" fill="#399998"/><rect x="180" y="110" fill="#4f9499"/><rect x="190" y="110" fill="#659099"/><rect x="200" y="110" fill="#7c8c99"/><rect x="210" y="110" fill="#938799"/><rect x="220" y="110" fill="#997488"/><rect x="230" y="110" fill="#996277"/><rect x="240" y="110" fill="#995369"/><rect x="250" y="110" fill="#99475e"/><rect x="260" y="110" fill="#993e55"/><rect x="270" y="110" fill="#99354d"/><rect x="280" y="110" fill="#992e47"/><rect x="290" y="110" fill="#992841"/><rect x="300" y="110" fill="#99233c"/><rect x="310" y="110" fill="#991e38"/><rect x="320" y="110" fill="#991a34"/><rect x="330" y="110" fill="#991630"/><rect x="340" y="110" fill="#99132d"/><rect x="350" y="110" fill="#99102a"/><rect x="360" y="110" fill="#990d28"/><rect x="370" y="110" fill="#990a25"/><rect x="380" y="110" fill="#990823"/><rect x="390" y="110" fill="#990621"/><rect x="400" y="110" fill="#99041f"/><rect x="410" y="110" fill="#99021e"/><rect x="420" y="110" fill="#99001c"/><rect x="430" y="110" fill="#99001b"/><rect x="440" y="110" fill="#990019"/><rect x="450" y="110" fill="#990018"/><rect x="460" y="110" fill="#990017"/><rect x="470" y="110" fill="#990016"/><rect x="480" y="110" fill="#990015"/><rect x="490" y="110" fill="#990014"/><rect x="500" y="110" fill="#990013"/><rect x="510" y="110" fill="#990012"/><rect x="520" y="110" fill="#990011"/><rect x="530" y="110" fill="#990010"/><rect x="540" y="110" fill="#99000f"/><rect x="550" y="110" fill="#99000f"/><rect x="560" y="110" fill="#99000e"/><rect x="570" y="110" fill="#99000d"/><rect x="580" y="110" fill="#99000d"/><rect x="590" y="110" fill="#99000c"/><rect x="600" y="110" fill="#99000c"/><rect x="610" y="110" fill="#99000b"/><rect x="620" y="110" fill="#99000b"/><rect x="630" y="110" fill="#99000a"/><rect x="10" y="120" fill="#00997e"/><rect x="20" y="120" fill="#009980"/><rect x="30" y="120" fill="#009982"/><rect x="40" y="120" fill="#009985"/><rect x="50" y="120" fill="#009987"/><rect x="60" y="120" fill="#009989"/><rect x="70" y="120" fill="#00998c"/><rect x="80" y="120" fill="#00998f"/><rect x="90" y="120" fill="#009992"/><rect x="100" y="120" fill="#009995"/><rect x="110" y="120" fill="#009998"/><rect x="120" y="120" fill="#009599"/><rect x="130" y="120" fill="#009199"/><rect x="140" y="120" fill="#008e99"/><rect x="150" y="120" fill="#0b8a99"/><rect x="160" y="120" fill="#1d8699"/><rect x="170" y="120" fill="#308299"/><rect x="180" y="120" fill="#437e99"/><rect x="190" y="120" fill="#577a99"/><rect x="200" y="120" fill="#6b7699"/><rect x="210" y="120" fill="#7f7299"/><rect x="220" y="120" fill="#946d99"/><rect x="230" y="120" fill="#995f89"/><rect x="240" y="120" fill="#99507a"/><rect x="250" y="120" fill="#99446d"/><rect x="260" y="120" fill="#993b62"/><rect x="270" y="120" fill="#99335a"/><rect x="280" y="120" fill="#992c52"/><rect x="290" y="120" fill="#99264b"/><rect x="300" y="120" fill="#992046"/><rect x="310" y="120" fill="#991c41"/><rect x="320" y="120" fill="#99183c"/><rect x="330" y="120" fill="#991438"/><rect x="340" y="120" fill="#991135"/><rect x="350" y="120" fill="#990e31"/><rect x="360" y="120" fill="#990b2f"/><rect x="370" y="120" fill="#99082c"/><rect x="380" y="120" fill="#990629"/><rect x="390" y="120" fill="#990427"/><rect x="400" y="120" fill="#990225"/><rect x="410" y="120" fill="#990023"/><rect x="420" y="120" fill="#990021"/><rect x="430" y="120" fill="#990020"/><rect x="440" y="120" fill="#99001e"/><rect x="450" y="120" fill="#99001d"/><rect x="460" y="120" fill="#99001b"/><rect x="470" y="120" fill="#99001a"/><rect x="480" y="120" fill="#990019"/><rect x="490" y="120" fill="#990018"/><rect x="500" y="120" fill="#990017"/><rect x="510" y="120" fill="#990016"/><rect x="520" y="120" fill="#990015"/><rect x="530" y="120" fill="#990014"/><rect x="540" y="120" fill="#990013"/><rect x="550" y="120" fill="#990012"/><rect x="560" y="120" fill="#990012"/><rect x="570" y="120" fill="#990011"/><rect x="580" y="120" fill="#990010"/><rect x="590" y="120" fill="#99000f"/><rect x="600" y="120" fill="#99000f"/><rect x="610" y="120" fill="#99000e"/><rect x="620" y="120" fill="#99000e"/><rect x="20" y="130" fill="#009990"/><rect x="30" y="130" fill="#009993"/><rect x="40" y="130" fill="#009996"/><rect x="50" y="130" fill="#009998"/><rect x="60" y="130" fill="#009599"/><rect x="70" y="130" fill="#009299"/><rect x="80" y="130" fill="#008f99"/><rect x="90" y="130" fill="#008c99"/><rect x="100" y="130" fill="#008999"/><rect x="110" y="130" fill="#008699"/><rect x="120" y="130" fill="#008299"/><rect x="130" y="130" fill="#007f99"/><rect x="140" y="130" fill="#007b99"/><rect x="150" y="130" fill="#077899"/><rect x="160" y="130" fill="#187499"/><rect x="170" y="130" fill="#287099"/><rect x="180" y="130" fill="#3a6d99"/><rect x="190" y="130" fill="#4b6999"/><rect x="200" y="130" fill="#5d6599"/><rect x="210" y="130" fill="#6f6199"/><rect x="220" y="130" fill="#815d99"/><rect x="230" y="130" fill="#945999"/><rect x="240" y="130" fill="#994d8b"/><rect x="250" y="130" fill="#99417c"/><rect x="260" y="130" fill="#993870"/><rect x="270" y="130" fill="#993066"/><rect x="280" y="130" fill="#99295d"/><rect x="290" y="130" fill="#992356"/><rect x="300" y="130" fill="#991e50"/><rect x="310" y="130" fill="#99194a"/><rect x="320" y="130" fill="#991545"/><rect x="330" y="130" fill="#991240"/><rect x="340" y="130" fill="#990f3c"/><rect x="350" y="130" fill="#990c39"/><rect x="360" y="130" fill="#990935"/><rect x="370" y="130" fill="#990732"/><rect x="380" y="130" fill="#990430"/><rect x="390" y="130" fill="#99022d"/><rect x="400" y="130" fill="#99012b"/><rect x="410" y="130" fill="#990029"/><rect x="420" y="130" fill="#990027"/><rect x="430" y="130" fill="#990025"/><rect x="440" y="130" fill="#990023"/><rect x="450" y="130" fill="#990022"/><rect x="460" y="130" fill="#990020"/><rect x="470" y="130" fill="#99001f"/><rect x="480" y="130" fill="#99001d"/><rect x="490" y="130" fill="#99001c"/><rect x="500" y="130" fill="#99001b"/><rect x="510" y="130" fill="#99001a"/><rect x="520" y="130" fill="#990019"/><rect x="530" y="130" fill="#990018"/><rect x="540" y="130" fill="#990017"/><rect x="550" y="130" fill="#990016"/><rect x="560" y="130" fill="#990015"/><rect x="570" y="130" fill="#990014"/><rect x="580" y="130" fill="#990013"/><rect x="590" y="130" fill="#990013"/><rect x="600" y="130" fill="#990012"/><rect x="610" y="130" fill="#990011"/><rect x="20" y="140" fill="#009099"/><rect x="30" y="140" fill="#008e99"/><rect x="40" y="140" fill="#008b99"/><rect x="50" y="140" fill="#008899"/><rect x="60" y="140" fill="#008599"/><rect x="70" y="140" fill="#008299"/><rect x="80" y="140" fill="#007f99"/><rect x="90" y="140" fill="#007c99"/><rect x="100" y="140" fill="#007999"/><rect x="110" y="140" fill="#007699"/><rect x="120" y="140" fill="#007399"/><rect x="130" y="140" fill="#006f99"/><rect x="140" y="140" fill="#006c99"/><rect x="150" y="140" fill="#046999"/><rect x="160" y="140" fill="#136599"/><rect x="170" y="140" fill="#226299"/><rect x="180" y="140" fill="#325e99"/><rect x="190" y="140" fill="#415b99"/><rect x="200" y="140" fill="#525799"/><rect x="210" y="140" fill="#625399"/><rect x="220" y="140" fill="#725099"/><rect x="230" y="140" fill="#834c99"/><rect x="240" y="140" fill="#954899"/><rect x="250" y="140" fill="#993e8c"/><rect x="260" y="140" fill="#99357e"/><rect x="270" y="140" fill="#992d73"/><rect x="280" y="140" fill="#992669"/><rect x="290" y="140" fill="#992061"/><rect x="300" y="140" fill="#991b5a"/><rect x="310" y="140" fill="#991753"/><rect x="320" y="140" fill="#99134e"/><rect x="330" y="140" fill="#991049"/><rect x="340" y="140" fill="#990c44"/><rect x="350" y="140" fill="#990a40"/><rect x="360" y="140" fill="#99073d"/><rect x="370" y="140" fill="#990539"/><rect x="380" y="140" fill="#990336"/><rect x="390" y="140" fill="#990133"/><rect x="400" y="140" fill="#990031"/><rect x="410" y="140" fill="#99002e"/><rect x="420" y="140" fill="#99002c"/><rect x="430" y="140" fill="#99002a"/><rect x="440" y="140" fill="#990028"/><rect x="450" y="140" fill="#990026"/><rect x="460" y="140" fill="#990025"/><rect x="470" y="140" fill="#990023"/><rect x="480" y="140" fill="#990022"/><rect x="490" y="140" fill="#990020"/><rect x="500" y="140" fill="#99001f"/><rect x="510" y="140" fill="#99001e"/><rect x="520" y="140" fill="#99001d"/><rect x="530" y="140" fill="#99001c"/><rect x="540" y="140" fill="#99001b"/><rect x="550" y="140" fill="#99001a"/><rect x="560" y="140" fill="#990019"/><rect x="570" y="140" fill="#990018"/><rect x="580" y="140" fill="#990017"/><rect x="590" y="140" fill="#990016"/><rect x="600" y="140" fill="#990015"/><rect x="20" y="150" fill="#008299"/><rect x="30" y="150" fill="#007f99"/><rect x="40" y="150" fill="#007d99"/><rect x="50" y="150" fill="#007a99"/><rect x="60" y="150" fill="#007799"/><rect x="70" y="150" fill="#007499"/><rect x="80" y="150" fill="#007199"/><rect x="90" y="150" fill="#006f99"/><rect x="100" y="150" fill="#006c99"/><rect x="110" y="150" fill="#006999"/><rect x="120" y="150" fill="#006699"/><rect x="130" y="150" fill="#006399"/><rect x="140" y="150" fill="#005f99"/><rect x="150" y="150" fill="#015c99"/><rect x="160" y="150" fill="#0f5999"/><rect x="170" y="150" fill="#1d5699"/><rect x="180" y="150" fill="#2b5299"/><rect x="190" y="150" fill="#3a4f99"/><rect x="200" y="150" fill="#484c99"/><rect x="210" y="150" fill="#574899"/><rect x="220" y="150" fill="#664599"/><rect x="230" y="150" fill="#754199"/><rect x="240" y="150" fill="#853d99"/><rect x="250" y="150" fill="#953a99"/><rect x="260" y="150" fill="#99328d"/><rect x="270" y="150" fill="#992a80"/><rect x="280" y="150" fill="#992375"/><rect x="290" y="150" fill="#991e6c"/><rect x="300" y="150" fill="#991964"/><rect x="310" y="150" fill="#99145d"/><rect x="320" y="150" fill="#991157"/><rect x="330" y="150" fill="#990d51"/><rect x="340" y="150" fill="#990a4c"/><rect x="350" y="150" fill="#990848"/><rect x="360" y="150" fill="#990544"/><rect x="370" y="150" fill="#990340"/><rect x="380" y="150" fill="#99013d"/><rect x="390" y="150" fill="#99003a"/><rect x="400" y="150" fill="#990037"/><rect x="410" y="150" fill="#990034"/><rect x="420" y="150" fill="#990032"/><rect x="430" y="150" fill="#99002f"/><rect x="440" y="150" fill="#99002d"/><rect x="450" y="150" fill="#99002b"/><rect x="460" y="150" fill="#99002a"/><rect x="470" y="150" fill="#990028"/><rect x="480" y="150" fill="#990026"/><rect x="490" y="150" fill="#990025"/><rect x="500" y="150" fill="#990023"/><rect x="510" y="150" fill="#990022"/><rect x="520" y="150" fill="#990021"/><rect x="530" y="150" fill="#99001f"/><rect x="540" y="150" fill="#99001e"/><rect x="550" y="150" fill="#99001d"/><rect x="560" y="150" fill="#99001c"/><rect x="570" y="150" fill="#99001b"/><rect x="580" y="150" fill="#99001a"/><rect x="590" y="150" fill="#990019"/><rect x="30" y="160" fill="#007399"/><rect x="40" y="160" fill="#007199"/><rect x="50" y="160" fill="#006e99"/><rect x="60" y="160" fill="#006b99"/><rect x="70" y="160" fill="#006999"/><rect x="80" y="160" fill="#006699"/><rect x="90" y="160" fill="#006399"/><rect x="100" y="160" fill="#006099"/><rect x="110" y="160" fill="#005d99"/><rect x="120" y="160" fill="#005b99"/><rect x="130" y="160" fill="#005899"/><rect x="140" y="160" fill="#005599"/><rect x="150" y="160" fill="#005299"/><rect x="160" y="160" fill="#0c4f99"/><rect x="170" y="160" fill="#194b99"/><rect x="180" y="160" fill="#264899"/><rect x="190" y="160" fill="#334599"/><rect x="200" y="160" fill="#404299"/><rect x="210" y="160" fill="#4e3f99"/><rect x="220" y="160" fill="#5c3b99"/><rect x="230" y="160" fill="#6a3899"/><rect x="240" y="160" fill="#783499"/><rect x="250" y="160" fill="#863199"/><rect x="260" y="160" fill="#952d99"/><rect x="270" y="160" fill="#99278e"/><rect x="280" y="160" fill="#992082"/><rect x="290" y="160" fill="#991b78"/><rect x="300" y="160" fill="#99166f"/><rect x="310" y="160" fill="#991267"/><rect x="320" y="160" fill="#990e60"/><rect x="330" y="160" fill="#990b5a"/><rect x="340" y="160" fill="#990854"/><rect x="350" y="160" fill="#990550"/><rect x="360" y="160" fill="#99034b"/><rect x="370" y="160" fill="#990147"/><rect x="380" y="160" fill="#990043"/><rect x="390" y="160" fill="#990040"/><rect x="400" y="160" fill="#99003d"/><rect x="410" y="160" fill="#99003a"/><rect x="420" y="160" fill="#990037"/><rect x="430" y="160" fill="#990035"/><rect x="440" y="160" fill="#990033"/><rect x="450" y="160" fill="#990030"/><rect x="460" y="160" fill="#99002e"/><rect x="470" y="160" fill="#99002c"/><rect x="480" y="160" fill="#99002b"/><rect x="490" y="160" fill="#990029"/><rect x="500" y="160" fill="#990027"/><rect x="510" y="160" fill="#990026"/><rect x="520" y="160" fill="#990025"/><rect x="530" y="160" fill="#990023"/><rect x="540" y="160" fill="#990022"/><rect x="550" y="160" fill="#990021"/><rect x="560" y="160" fill="#990020"/><rect x="570" y="160" fill="#99001f"/><rect x="580" y="160" fill="#99001e"/><rect x="30" y="170" fill="#006999"/><rect x="40" y="170" fill="#006699"/><rect x="50" y="170" fill="#006499"/><rect x="60" y="170" fill="#006199"/><rect x="70" y="170" fill="#005e99"/><rect x="80" y="170" fill="#005c99"/><rect x="90" y="170" fill="#005999"/><rect x="100" y="170" fill="#005699"/><rect x="110" y="170" fill="#005499"/><rect x="120" y="170" fill="#005199"/><rect x="130" y="170" fill="#004e99"/><rect x="140" y="170" fill="#004b99"/><rect x="150" y="170" fill="#004999"/><rect x="160" y="170" fill="#094699"/><rect x="170" y="170" fill="#154399"/><rect x="180" y="170" fill="#214099"/><rect x="190" y="170" fill="#2d3d99"/><rect x="200" y="170" fill="#3a3a99"/><rect x="210" y="170" fill="#463799"/><rect x="220" y="170" fill="#533399"/><rect x="230" y="170" fill="#603099"/><rect x="240" y="170" fill="#6d2d99"/><rect x="250" y="170" fill="#7a2a99"/><rect x="260" y="170" fill="#882699"/><rect x="270" y="170" fill="#952399"/><rect x="280" y="170" fill="#991d8f"/><rect x="290" y="170" fill="#991883"/><rect x="300" y="170" fill="#991379"/><rect x="310" y="170" fill="#990f71"/><rect x="320" y="170" fill="#990c69"/><rect x="330" y="170" fill="#990963"/><rect x="340" y="170" fill="#99065d"/><rect x="350" y="170" fill="#990357"/><rect x="360" y="170" fill="#990152"/><rect x="370" y="170" fill="#99004e"/><rect x="380" y="170" fill="#99004a"/><rect x="390" y="170" fill="#990046"/><rect x="400" y="170" fill="#990043"/><rect x="410" y="170" fill="#990040"/><rect x="420" y="170" fill="#99003d"/><rect x="430" y="170" fill="#99003a"/><rect x="440" y="170" fill="#990038"/><rect x="450" y="170" fill="#990035"/><rect x="460" y="170" fill="#990033"/><rect x="470" y="170" fill="#990031"/><rect x="480" y="170" fill="#99002f"/><rect x="490" y="170" fill="#99002d"/><rect x="500" y="170" fill="#99002c"/><rect x="510" y="170" fill="#99002a"/><rect x="520" y="170" fill="#990029"/><rect x="530" y="170" fill="#990027"/><rect x="540" y="170" fill="#990026"/><rect x="550" y="170" fill="#990025"/><rect x="560" y="170" fill="#990023"/><rect x="570" y="170" fill="#990022"/><rect x="40" y="180" fill="#005d99"/><rect x="50" y="180" fill="#005a99"/><rect x="60" y="180" fill="#005899"/><rect x="70" y="180" fill="#005599"/><rect x="80" y="180" fill="#005399"/><rect x="90" y="180" fill="#005099"/><rect x="100" y="180" fill="#004e99"/><rect x="110" y="180" fill="#004b99"/><rect x="120" y="180" fill="#004999"/><rect x="130" y="180" fill="#004699"/><rect x="140" y="180" fill="#004399"/><rect x="150" y="180" fill="#004199"/><rect x="160" y="180" fill="#073e99"/><rect x="170" y="180" fill="#123b99"/><rect x="180" y="180" fill="#1d3899"/><rect x="190" y="180" fill="#283599"/><rect x="200" y="180" fill="#343299"/><rect x="210" y="180" fill="#403099"/><rect x="220" y="180" fill="#4b2d99"/><rect x="230" y="180" fill="#572a99"/><rect x="240" y="180" fill="#632799"/><rect x="250" y="180" fill="#702399"/><rect x="260" y="180" fill="#7c2099"/><rect x="270" y="180" fill="#891d99"/><rect x="280" y="180" fill="#951a99"/><rect x="290" y="180" fill="#99158f"/><rect x="300" y="180" fill="#991184"/><rect x="310" y="180" fill="#990d7b"/><rect x="320" y="180" fill="#990973"/><rect x="330" y="180" fill="#99066c"/><rect x="340" y="180" fill="#990465"/><rect x="350" y="180" fill="#99015f"/><rect x="360" y="180" fill="#99005a"/><rect x="370" y="180" fill="#990055"/><rect x="380" y="180" fill="#990051"/><rect x="390" y="180" fill="#99004d"/><rect x="400" y="180" fill="#990049"/><rect x="410" y="180" fill="#990046"/><rect x="420" y="180" fill="#990043"/><rect x="430" y="180" fill="#990040"/><rect x="440" y="180" fill="#99003d"/><rect x="450" y="180" fill="#99003a"/><rect x="460" y="180" fill="#990038"/><rect x="470" y="180" fill="#990036"/><rect x="480" y="180" fill="#990034"/><rect x="490" y="180" fill="#990032"/><rect x="500" y="180" fill="#990030"/><rect x="510" y="180" fill="#99002e"/><rect x="520" y="180" fill="#99002d"/><rect x="530" y="180" fill="#99002b"/><rect x="540" y="180" fill="#99002a"/><rect x="550" y="180" fill="#990028"/><rect x="560" y="180" fill="#990027"/><rect x="40" y="190" fill="#005599"/><rect x="50" y="190" fill="#005299"/><rect x="60" y="190" fill="#005099"/><rect x="70" y="190" fill="#004e99"/><rect x="80" y="190" fill="#004b99"/><rect x="90" y="190" fill="#004999"/><rect x="100" y="190" fill="#004699"/><rect x="110" y="190" fill="#004499"/><rect x="120" y="190" fill="#004199"/><rect x="130" y="190" fill="#003f99"/><rect x="140" y="190" fill="#003c99"/><rect x="150" y="190" fill="#003a99"/><rect x="160" y="190" fill="#053799"/><rect x="170" y="190" fill="#0f3499"/><rect x="180" y="190" fill="#193299"/><rect x="190" y="190" fill="#242f99"/><rect x="200" y="190" fill="#2f2c99"/><rect x="210" y="190" fill="#3a2999"/><rect x="220" y="190" fill="#452799"/><rect x="230" y="190" fill="#502499"/><rect x="240" y="190" fill="#5b2199"/><rect x="250" y="190" fill="#671e99"/><rect x="260" y="190" fill="#721b99"/><rect x="270" y="190" fill="#7e1899"/><rect x="280" y="190" fill="#8a1599"/><rect x="290" y="190" fill="#961299"/><rect x="300" y="190" fill="#990e90"/><rect x="310" y="190" fill="#990a86"/><rect x="320" y="190" fill="#99077d"/><rect x="330" y="190" fill="#990475"/><rect x="340" y="190" fill="#99016e"/><rect x="350" y="190" fill="#990067"/><rect x="360" y="190" fill="#990062"/><rect x="370" y="190" fill="#99005c"/><rect x="380" y="190" fill="#990058"/><rect x="390" y="190" fill="#990053"/><rect x="400" y="190" fill="#99004f"/><rect x="410" y="190" fill="#99004c"/><rect x="420" y="190" fill="#990048"/><rect x="430" y="190" fill="#990045"/><rect x="440" y="190" fill="#990042"/><rect x="450" y="190" fill="#990040"/><rect x="460" y="190" fill="#99003d"/><rect x="470" y="190" fill="#99003b"/><rect x="480" y="190" fill="#990038"/><rect x="490" y="190" fill="#990036"/><rect x="500" y="190" fill="#990034"/><rect x="510" y="190" fill="#990033"/><rect x="520" y="190" fill="#990031"/><rect x="530" y="190" fill="#99002f"/><rect x="540" y="190" fill="#99002e"/><rect x="550" y="190" fill="#99002c"/><rect x="50" y="200" fill="#004b99"/><rect x="60" y="200" fill="#004999"/><rect x="70" y="200" fill="#004799"/><rect x="80" y="200" fill="#004499"/><rect x="90" y="200" fill="#004299"/><rect x="100" y="200" fill="#004099"/><rect x="110" y="200" fill="#003d99"/><rect x="120" y="200" fill="#003b99"/><rect x="130" y="200" fill="#003999"/><rect x="140" y="200" fill="#003699"/><rect x="150" y="200" fill="#003499"/><rect x="160" y="200" fill="#033199"/><rect x="170" y="200" fill="#0c2f99"/><rect x="180" y="200" fill="#162c99"/><rect x="190" y="200" fill="#202999"/><rect x="200" y="200" fill="#2a2799"/><rect x="210" y="200" fill="#352499"/><rect x="220" y="200" fill="#3f2199"/><rect x="230" y="200" fill="#491f99"/><rect x="240" y="200" fill="#541c99"/><rect x="250" y="200" fill="#5f1999"/><rect x="260" y="200" fill="#691699"/><rect x="270" y="200" fill="#741499"/><rect x="280" y="200" fill="#7f1199"/><rect x="290" y="200" fill="#8a0e99"/><rect x="300" y="200" fill="#960b99"/><rect x="310" y="200" fill="#990790"/><rect x="320" y="200" fill="#990487"/><rect x="330" y="200" fill="#99017e"/><rect x="340" y="200" fill="#990076"/><rect x="350" y="200" fill="#990070"/><rect x="360" y="200" fill="#990069"/><rect x="370" y="200" fill="#990064"/><rect x="380" y="200" fill="#99005f"/><rect x="390" y="200" fill="#99005a"/><rect x="400" y="200" fill="#990056"/><rect x="410" y="200" fill="#990052"/><rect x="420" y="200" fill="#99004e"/><rect x="430" y="200" fill="#99004b"/><rect x="440" y="200" fill="#990048"/><rect x="450" y="200" fill="#990045"/><rect x="460" y="200" fill="#990042"/><rect x="470" y="200" fill="#990040"/><rect x="480" y="200" fill="#99003d"/><rect x="490" y="200" fill="#99003b"/><rect x="500" y="200" fill="#990039"/><rect x="510" y="200" fill="#990037"/><rect x="520" y="200" fill="#990035"/><rect x="530" y="200" fill="#990033"/><rect x="540" y="200" fill="#990031"/><rect x="50" y="210" fill="#004599"/><rect x="60" y="210" fill="#004399"/><rect x="70" y="210" fill="#004099"/><rect x="80" y="210" fill="#003e99"/><rect x="90" y="210" fill="#003c99"/><rect x="100" y="210" fill="#003a99"/><rect x="110" y="210" fill="#003799"/><rect x="120" y="210" fill="#003599"/><rect x="130" y="210" fill="#003399"/><rect x="140" y="210" fill="#003199"/><rect x="150" y="210" fill="#002e99"/><rect x="160" y="210" fill="#012c99"/><rect x="170" y="210" fill="#0a2999"/><rect x="180" y="210" fill="#142799"/><rect x="190" y="210" fill="#1d2499"/><rect x="200" y="210" fill="#262299"/><rect x="210" y="210" fill="#301f99"/><rect x="220" y="210" fill="#3a1d99"/><rect x="230" y="210" fill="#441a99"/><rect x="240" y="210" fill="#4d1899"/><rect x="250" y="210" fill="#571599"/><rect x="260" y="210" fill="#621299"/><rect x="270" y="210" fill="#6c1099"/><rect x="280" y="210" fill="#760d99"/><rect x="290" y="210" fill="#810a99"/><rect x="300" y="210" fill="#8b0799"/><rect x="310" y="210" fill="#960599"/><rect x="320" y="210" fill="#990291"/><rect x="330" y="210" fill="#990088"/><rect x="340" y="210" fill="#99007f"/><rect x="350" y="210" fill="#990078"/><rect x="360" y="210" fill="#990071"/><rect x="370" y="210" fill="#99006b"/><rect x="380" y="210" fill="#990066"/><rect x="390" y="210" fill="#990061"/><rect x="400" y="210" fill="#99005c"/><rect x="410" y="210" fill="#990058"/><rect x="420" y="210" fill="#990054"/><rect x="430" y="210" fill="#990051"/><rect x="440" y="210" fill="#99004d"/><rect x="450" y="210" fill="#99004a"/><rect x="460" y="210" fill="#990047"/><rect x="470" y="210" fill="#990044"/><rect x="480" y="210" fill="#990042"/><rect x="490" y="210" fill="#99003f"/><rect x="500" y="210" fill="#99003d"/><rect x="510" y="210" fill="#99003b"/><rect x="520" y="210" fill="#990039"/><rect x="530" y="210" fill="#990037"/><rect x="60" y="220" fill="#003d99"/><rect x="70" y="220" fill="#003b99"/><rect x="80" y="220" fill="#003999"/><rect x="90" y="220" fill="#003799"/><rect x="100" y="220" fill="#003499"/><rect x="110" y="220" fill="#003299"/><rect x="120" y="220" fill="#003099"/><rect x="130" y="220" fill="#002e99"/><rect x="140" y="220" fill="#002c99"/><rect x="150" y="220" fill="#002999"/><rect x="160" y="220" fill="#002799"/><rect x="170" y="220" fill="#082599"/><rect x="180" y="220" fill="#112299"/><rect x="190" y="220" fill="#1a2099"/><rect x="200" y="220" fill="#231e99"/><rect x="210" y="220" fill="#2c1b99"/><rect x="220" y="220" fill="#351999"/><rect x="230" y="220" fill="#3e1699"/><rect x="240" y="220" fill="#481499"/><rect x="250" y="220" fill="#511199"/><rect x="260" y="220" fill="#5b0f99"/><rect x="270" y="220" fill="#640c99"/><rect x="280" y="220" fill="#6e0a99"/><rect x="290" y="220" fill="#780799"/><rect x="300" y="220" fill="#820499"/><rect x="310" y="220" fill="#8c0299"/><rect x="320" y="220" fill="#960099"/><rect x="330" y="220" fill="#990091"/><rect x="340" y="220" fill="#990088"/><rect x="350" y="220" fill="#990080"/><rect x="360" y="220" fill="#990079"/><rect x="370" y="220" fill="#990073"/><rect x="380" y="220" fill="#99006d"/><rect x="390" y="220" fill="#990068"/><rect x="400" y="220" fill="#990063"/><rect x="410" y="220" fill="#99005e"/><rect x="420" y="220" fill="#99005a"/><rect x="430" y="220" fill="#990056"/><rect x="440" y="220" fill="#990053"/><rect x="450" y="220" fill="#99004f"/><rect x="460" y="220" fill="#99004c"/><rect x="470" y="220" fill="#990049"/><rect x="480" y="220" fill="#990047"/><rect x="490" y="220" fill="#990044"/><rect x="500" y="220" fill="#990042"/><rect x="510" y="220" fill="#99003f"/><rect x="520" y="220" fill="#99003d"/><rect x="60" y="230" fill="#003899"/><rect x="70" y="230" fill="#003699"/><rect x="80" y="230" fill="#003499"/><rect x="90" y="230" fill="#003299"/><rect x="100" y="230" fill="#003099"/><rect x="110" y="230" fill="#002d99"/><rect x="120" y="230" fill="#002b99"/><rect x="130" y="230" fill="#002999"/><rect x="140" y="230" fill="#002799"/><rect x="150" y="230" fill="#002599"/><rect x="160" y="230" fill="#002399"/><rect x="170" y="230" fill="#072099"/><rect x="180" y="230" fill="#0f1e99"/><rect x="190" y="230" fill="#171c99"/><rect x="200" y="230" fill="#201a99"/><rect x="210" y="230" fill="#281799"/><rect x="220" y="230" fill="#311599"/><rect x="230" y="230" fill="#3a1399"/><rect x="240" y="230" fill="#431099"/><rect x="250" y="230" fill="#4b0e99"/><rect x="260" y="230" fill="#540c99"/><rect x="270" y="230" fill="#5e0999"/><rect x="280" y="230" fill="#670799"/><rect x="290" y="230" fill="#700499"/><rect x="300" y="230" fill="#790299"/><rect x="310" y="230" fill="#830099"/><rect x="320" y="230" fill="#8c0099"/><rect x="330" y="230" fill="#960099"/><rect x="340" y="230" fill="#990092"/><rect x="350" y="230" fill="#990089"/><rect x="360" y="230" fill="#990081"/><rect x="370" y="230" fill="#99007b"/><rect x="380" y="230" fill="#990074"/><rect x="390" y="230" fill="#99006f"/><rect x="400" y="230" fill="#990069"/><rect x="410" y="230" fill="#990065"/><rect x="420" y="230" fill="#990060"/><rect x="430" y="230" fill="#99005c"/><rect x="440" y="230" fill="#990058"/><rect x="450" y="230" fill="#990055"/><rect x="460" y="230" fill="#990051"/><rect x="470" y="230" fill="#99004e"/><rect x="480" y="230" fill="#99004b"/><rect x="490" y="230" fill="#990049"/><rect x="500" y="230" fill="#990046"/><rect x="510" y="230" fill="#990044"/><rect x="70" y="240" fill="#003199"/><rect x="80" y="240" fill="#002f99"/><rect x="90" y="240" fill="#002d99"/><rect x="100" y="240" fill="#002b99"/><rect x="110" y="240" fill="#002999"/><rect x="120" y="240" fill="#002799"/><rect x="130" y="240" fill="#002599"/><rect x="140" y="240" fill="#002399"/><rect x="150" y="240" fill="#002199"/><rect x="160" y="240" fill="#001f99"/><rect x="170" y="240" fill="#051d99"/><rect x="180" y="240" fill="#0d1b99"/><rect x="190" y="240" fill="#151899"/><rect x="200" y="240" fill="#1d1699"/><rect x="210" y="240" fill="#251499"/><rect x="220" y="240" fill="#2d1299"/><rect x="230" y="240" fill="#360f99"/><rect x="240" y="240" fill="#3e0d99"/><rect x="250" y="240" fill="#460b99"/><rect x="260" y="240" fill="#4f0999"/><rect x="270" y="240" fill="#580699"/><rect x="280" y="240" fill="#600499"/><rect x="290" y="240" fill="#690299"/><rect x="300" y="240" fill="#720099"/><rect x="310" y="240" fill="#7b0099"/><rect x="320" y="240" fill="#840099"/><rect x="330" y="240" fill="#8d0099"/><rect x="340" y="240" fill="#960099"/><rect x="350" y="240" fill="#990092"/><rect x="360" y="240" fill="#99008a"/><rect x="370" y="240" fill="#990082"/><rect x="380" y="240" fill="#99007c"/><rect x="390" y="240" fill="#990076"/><rect x="400" y="240" fill="#990070"/><rect x="410" y="240" fill="#99006b"/><rect x="420" y="240" fill="#990066"/><rect x="430" y="240" fill="#990062"/><rect x="440" y="240" fill="#99005e"/><rect x="450" y="240" fill="#99005a"/><rect x="460" y="240" fill="#990057"/><rect x="470" y="240" fill="#990053"/><rect x="480" y="240" fill="#990050"/><rect x="490" y="240" fill="#99004d"/><rect x="500" y="240" fill="#99004b"/><rect x="70" y="250" fill="#002d99"/><rect x="80" y="250" fill="#002b99"/><rect x="90" y="250" fill="#002999"/><rect x="100" y="250" fill="#002799"/><rect x="110" y="250" fill="#002599"/><rect x="120" y="250" fill="#002399"/><rect x="130" y="250" fill="#002199"/><rect x="140" y="250" fill="#001f99"/><rect x="150" y="250" fill="#001d99"/><rect x="160" y="250" fill="#001b99"/><rect x="170" y="250" fill="#031999"/><rect x="180" y="250" fill="#0b1799"/><rect x="190" y="250" fill="#131599"/><rect x="200" y="250" fill="#1a1399"/><rect x="210" y="250" fill="#221199"/><rect x="220" y="250" fill="#2a0f99"/><rect x="230" y="250" fill="#320d99"/><rect x="240" y="250" fill="#3a0a99"/><rect x="250" y="250" fill="#420899"/><rect x="260" y="250" fill="#4a0699"/><rect x="270" y="250" fill="#520499"/><rect x="280" y="250" fill="#5a0199"/><rect x="290" y="250" fill="#630099"/><rect x="300" y="250" fill="#6b0099"/><rect x="310" y="250" fill="#740099"/><rect x="320" y="250" fill="#7c0099"/><rect x="330" y="250" fill="#850099"/><rect x="340" y="250" fill="#8d0099"/><rect x="350" y="250" fill="#960099"/><rect x="360" y="250" fill="#990092"/><rect x="370" y="250" fill="#99008a"/><rect x="380" y="250" fill="#990083"/><rect x="390" y="250" fill="#99007d"/><rect x="400" y="250" fill="#990077"/><rect x="410" y="250" fill="#990072"/><rect x="420" y="250" fill="#99006d"/><rect x="430" y="250" fill="#990068"/><rect x="440" y="250" fill="#990064"/><rect x="450" y="250" fill="#990060"/><rect x="460" y="250" fill="#99005c"/><rect x="470" y="250" fill="#990059"/><rect x="480" y="250" fill="#990055"/><rect x="490" y="250" fill="#990052"/><rect x="80" y="260" fill="#002799"/><rect x="90" y="260" fill="#002599"/><rect x="100" y="260" fill="#002499"/><rect x="110" y="260" fill="#002299"/><rect x="120" y="260" fill="#002099"/><rect x="130" y="260" fill="#001e99"/><rect x="140" y="260" fill="#001c99"/><rect x="150" y="260" fill="#001a99"/><rect x="160" y="260" fill="#001899"/><rect x="170" y="260" fill="#021699"/><rect x="180" y="260" fill="#091499"/><rect x="190" y="260" fill="#111299"/><rect x="200" y="260" fill="#181099"/><rect x="210" y="260" fill="#1f0e99"/><rect x="220" y="260" fill="#270c99"/><rect x="230" y="260" fill="#2e0a99"/><rect x="240" y="260" fill="#360899"/><rect x="250" y="260" fill="#3e0699"/><rect x="260" y="260" fill="#450499"/><rect x="270" y="260" fill="#4d0199"/><rect x="280" y="260" fill="#550099"/><rect x="290" y="260" fill="#5d0099"/><rect x="300" y="260" fill="#650099"/><rect x="310" y="260" fill="#6d0099"/><rect x="320" y="260" fill="#750099"/><rect x="330" y="260" fill="#7d0099"/><rect x="340" y="260" fill="#860099"/><rect x="350" y="260" fill="#8e0099"/><rect x="360" y="260" fill="#960099"/><rect x="370" y="260" fill="#990092"/><rect x="380" y="260" fill="#99008b"/><rect x="390" y="260" fill="#990084"/><rect x="400" y="260" fill="#99007e"/><rect x="410" y="260" fill="#990078"/><rect x="420" y="260" fill="#990073"/><rect x="430" y="260" fill="#99006e"/><rect x="440" y="260" fill="#990069"/><rect x="450" y="260" fill="#990065"/><rect x="460" y="260" fill="#990061"/><rect x="470" y="260" fill="#99005e"/><rect x="480" y="260" fill="#99005a"/><rect x="80" y="270" fill="#002499"/><rect x="90" y="270" fill="#002299"/><rect x="100" y="270" fill="#002099"/><rect x="110" y="270" fill="#001e99"/><rect x="120" y="270" fill="#001d99"/><rect x="130" y="270" fill="#001b99"/><rect x="140" y="270" fill="#001999"/><rect x="150" y="270" fill="#001799"/><rect x="160" y="270" fill="#001599"/><rect x="170" y="270" fill="#011399"/><rect x="180" y="270" fill="#081199"/><rect x="190" y="270" fill="#0f0f99"/><rect x="200" y="270" fill="#160d99"/><rect x="210" y="270" fill="#1d0b99"/><rect x="220" y="270" fill="#240999"/><rect x="230" y="270" fill="#2b0799"/><rect x="240" y="270" fill="#320599"/><rect x="250" y="270" fill="#3a0399"/><rect x="260" y="270" fill="#410199"/><rect x="270" y="270" fill="#490099"/><rect x="280" y="270" fill="#500099"/><rect x="290" y="270" fill="#580099"/><rect x="300" y="270" fill="#5f0099"/><rect x="310" y="270" fill="#670099"/><rect x="320" y="270" fill="#6f0099"/><rect x="330" y="270" fill="#760099"/><rect x="340" y="270" fill="#7e0099"/><rect x="350" y="270" fill="#860099"/><rect x="360" y="270" fill="#8e0099"/><rect x="370" y="270" fill="#960099"/><rect x="380" y="270" fill="#990093"/><rect x="390" y="270" fill="#99008b"/><rect x="400" y="270" fill="#990085"/><rect x="410" y="270" fill="#99007f"/><rect x="420" y="270" fill="#990079"/><rect x="430" y="270" fill="#990074"/><rect x="440" y="270" fill="#99006f"/><rect x="450" y="270" fill="#99006b"/><rect x="460" y="270" fill="#990067"/><rect x="470" y="270" fill="#990063"/><rect x="90" y="280" fill="#001f99"/><rect x="100" y="280" fill="#001d99"/><rect x="110" y="280" fill="#001b99"/><rect x="120" y="280" fill="#001a99"/><rect x="130" y="280" fill="#001899"/><rect x="140" y="280" fill="#001699"/><rect x="150" y="280" fill="#001499"/><rect x="160" y="280" fill="#001299"/><rect x="170" y="280" fill="#001199"/><rect x="180" y="280" fill="#060f99"/><rect x="190" y="280" fill="#0d0d99"/><rect x="200" y="280" fill="#140b99"/><rect x="210" y="280" fill="#1b0999"/><rect x="220" y="280" fill="#210799"/><rect x="230" y="280" fill="#280599"/><rect x="240" y="280" fill="#2f0399"/><rect x="250" y="280" fill="#360199"/><rect x="260" y="280" fill="#3d0099"/><rect x="270" y="280" fill="#440099"/><rect x="280" y="280" fill="#4c0099"/><rect x="290" y="280" fill="#530099"/><rect x="300" y="280" fill="#5a0099"/><rect x="310" y="280" fill="#610099"/><rect x="320" y="280" fill="#690099"/><rect x="330" y="280" fill="#700099"/><rect x="340" y="280" fill="#780099"/><rect x="350" y="280" fill="#7f0099"/><rect x="360" y="280" fill="#870099"/><rect x="370" y="280" fill="#8f0099"/><rect x="380" y="280" fill="#960099"/><rect x="390" y="280" fill="#990093"/><rect x="400" y="280" fill="#99008c"/><rect x="410" y="280" fill="#990086"/><rect x="420" y="280" fill="#990080"/><rect x="430" y="280" fill="#99007a"/><rect x="440" y="280" fill="#990075"/><rect x="450" y="280" fill="#990071"/><rect x="460" y="280" fill="#99006c"/><rect x="100" y="290" fill="#001a99"/><rect x="110" y="290" fill="#001999"/><rect x="120" y="290" fill="#001799"/><rect x="130" y="290" fill="#001599"/><rect x="140" y="290" fill="#001399"/><rect x="150" y="290" fill="#001299"/><rect x="160" y="290" fill="#001099"/><rect x="170" y="290" fill="#000e99"/><rect x="180" y="290" fill="#050c99"/><rect x="190" y="290" fill="#0c0b99"/><rect x="200" y="290" fill="#120999"/><rect x="210" y="290" fill="#190799"/><rect x="220" y="290" fill="#1f0599"/><rect x="230" y="290" fill="#260399"/><rect x="240" y="290" fill="#2c0199"/><rect x="250" y="290" fill="#330099"/><rect x="260" y="290" fill="#3a0099"/><rect x="270" y="290" fill="#410099"/><rect x="280" y="290" fill="#470099"/><rect x="290" y="290" fill="#4e0099"/><rect x="300" y="290" fill="#550099"/><rect x="310" y="290" fill="#5c0099"/><rect x="320" y="290" fill="#630099"/><rect x="330" y="290" fill="#6b0099"/><rect x="340" y="290" fill="#720099"/><rect x="350" y="290" fill="#790099"/><rect x="360" y="290" fill="#800099"/><rect x="370" y="290" fill="#880099"/><rect x="380" y="290" fill="#8f0099"/><rect x="390" y="290" fill="#960099"/><rect x="400" y="290" fill="#990093"/><rect x="410" y="290" fill="#99008c"/><rect x="420" y="290" fill="#990086"/><rect x="430" y="290" fill="#990081"/><rect x="440" y="290" fill="#99007b"/><rect x="450" y="290" fill="#990076"/><rect x="100" y="300" fill="#001899"/><rect x="110" y="300" fill="#001699"/><rect x="120" y="300" fill="#001499"/><rect x="130" y="300" fill="#001399"/><rect x="140" y="300" fill="#001199"/><rect x="150" y="300" fill="#000f99"/><rect x="160" y="300" fill="#000e99"/><rect x="170" y="300" fill="#000c99"/><rect x="180" y="300" fill="#040a99"/><rect x="190" y="300" fill="#0a0899"/><rect x="200" y="300" fill="#100799"/><rect x="210" y="300" fill="#170599"/><rect x="220" y="300" fill="#1d0399"/><rect x="230" y="300" fill="#230199"/><rect x="240" y="300" fill="#2a0099"/><rect x="250" y="300" fill="#300099"/><rect x="260" y="300" fill="#370099"/><rect x="270" y="300" fill="#3d0099"/><rect x="280" y="300" fill="#440099"/><rect x="290" y="300" fill="#4a0099"/><rect x="300" y="300" fill="#510099"/><rect x="310" y="300" fill="#580099"/><rect x="320" y="300" fill="#5e0099"/><rect x="330" y="300" fill="#650099"/><rect x="340" y="300" fill="#6c0099"/><rect x="350" y="300" fill="#730099"/><rect x="360" y="300" fill="#7a0099"/><rect x="370" y="300" fill="#810099"/><rect x="380" y="300" fill="#880099"/><rect x="390" y="300" fill="#8f0099"/><rect x="400" y="300" fill="#970099"/><rect x="410" y="300" fill="#990093"/><rect x="420" y="300" fill="#99008d"/><rect x="430" y="300" fill="#990087"/><rect x="440" y="300" fill="#990081"/><rect x="110" y="310" fill="#001499"/><rect x="120" y="310" fill="#001299"/><rect x="130" y="310" fill="#001099"/><rect x="140" y="310" fill="#000f99"/><rect x="150" y="310" fill="#000d99"/><rect x="160" y="310" fill="#000b99"/><rect x="170" y="310" fill="#000a99"/><rect x="180" y="310" fill="#030899"/><rect x="190" y="310" fill="#090699"/><rect x="200" y="310" fill="#0f0599"/><rect x="210" y="310" fill="#150399"/><rect x="220" y="310" fill="#1b0199"/><rect x="230" y="310" fill="#210099"/><rect x="240" y="310" fill="#270099"/><rect x="250" y="310" fill="#2d0099"/><rect x="260" y="310" fill="#340099"/><rect x="270" y="310" fill="#3a0099"/><rect x="280" y="310" fill="#400099"/><rect x="290" y="310" fill="#470099"/><rect x="300" y="310" fill="#4d0099"/><rect x="310" y="310" fill="#530099"/><rect x="320" y="310" fill="#5a0099"/><rect x="330" y="310" fill="#600099"/><rect x="340" y="310" fill="#670099"/><rect x="350" y="310" fill="#6e0099"/><rect x="360" y="310" fill="#740099"/><rect x="370" y="310" fill="#7b0099"/><rect x="380" y="310" fill="#820099"/><rect x="390" y="310" fill="#890099"/><rect x="400" y="310" fill="#900099"/><rect x="410" y="310" fill="#970099"/><rect x="420" y="310" fill="#990094"/><rect x="430" y="310" fill="#99008d"/><rect x="110" y="320" fill="#001199"/><rect x="120" y="320" fill="#001099"/><rect x="130" y="320" fill="#000e99"/><rect x="140" y="320" fill="#000d99"/><rect x="150" y="320" fill="#000b99"/><rect x="160" y="320" fill="#000999"/><rect x="170" y="320" fill="#000899"/><rect x="180" y="320" fill="#020699"/><rect x="190" y="320" fill="#070599"/><rect x="200" y="320" fill="#0d0399"/><rect x="210" y="320" fill="#130199"/><rect x="220" y="320" fill="#190099"/><rect x="230" y="320" fill="#1f0099"/><rect x="240" y="320" fill="#250099"/><rect x="250" y="320" fill="#2b0099"/><rect x="260" y="320" fill="#310099"/><rect x="270" y="320" fill="#370099"/><rect x="280" y="320" fill="#3d0099"/><rect x="290" y="320" fill="#430099"/><rect x="300" y="320" fill="#490099"/><rect x="310" y="320" fill="#4f0099"/><rect x="320" y="320" fill="#560099"/><rect x="330" y="320" fill="#5c0099"/><rect x="340" y="320" fill="#620099"/><rect x="350" y="320" fill="#690099"/><rect x="360" y="320" fill="#6f0099"/><rect x="370" y="320" fill="#760099"/><rect x="380" y="320" fill="#7c0099"/><rect x="390" y="320" fill="#830099"/><rect x="400" y="320" fill="#890099"/><rect x="410" y="320" fill="#900099"/><rect x="420" y="320" fill="#970099"/><rect x="120" y="330" fill="#000e99"/><rect x="130" y="330" fill="#000c99"/><rect x="140" y="330" fill="#000b99"/><rect x="150" y="330" fill="#000999"/><rect x="160" y="330" fill="#000799"/><rect x="170" y="330" fill="#000699"/><rect x="180" y="330" fill="#010499"/><rect x="190" y="330" fill="#060399"/><rect x="200" y="330" fill="#0c0199"/><rect x="210" y="330" fill="#120099"/><rect x="220" y="330" fill="#170099"/><rect x="230" y="330" fill="#1d0099"/><rect x="240" y="330" fill="#230099"/><rect x="250" y="330" fill="#280099"/><rect x="260" y="330" fill="#2e0099"/><rect x="270" y="330" fill="#340099"/><rect x="280" y="330" fill="#3a0099"/><rect x="290" y="330" fill="#400099"/><rect x="300" y="330" fill="#460099"/><rect x="310" y="330" fill="#4c0099"/><rect x="320" y="330" fill="#520099"/><rect x="330" y="330" fill="#580099"/><rect x="340" y="330" fill="#5e0099"/><rect x="350" y="330" fill="#640099"/><rect x="360" y="330" fill="#6a0099"/><rect x="370" y="330" fill="#700099"/><rect x="380" y="330" fill="#770099"/><rect x="390" y="330" fill="#7d0099"/><rect x="400" y="330" fill="#830099"/><rect x="410" y="330" fill="#8a0099"/><rect x="130" y="340" fill="#000a99"/><rect x="140" y="340" fill="#000999"/><rect x="150" y="340" fill="#000799"/><rect x="160" y="340" fill="#000699"/><rect x="170" y="340" fill="#000499"/><rect x="180" y="340" fill="#000399"/><rect x="190" y="340" fill="#050199"/><rect x="200" y="340" fill="#0b0099"/><rect x="210" y="340" fill="#100099"/><rect x="220" y="340" fill="#160099"/><rect x="230" y="340" fill="#1b0099"/><rect x="240" y="340" fill="#210099"/><rect x="250" y="340" fill="#260099"/><rect x="260" y="340" fill="#2c0099"/><rect x="270" y="340" fill="#310099"/><rect x="280" y="340" fill="#370099"/><rect x="290" y="340" fill="#3d0099"/><rect x="300" y="340" fill="#420099"/><rect x="310" y="340" fill="#480099"/><rect x="320" y="340" fill="#4e0099"/><rect x="330" y="340" fill="#540099"/><rect x="340" y="340" fill="#5a0099"/><rect x="350" y="340" fill="#600099"/><rect x="360" y="340" fill="#660099"/><rect x="370" y="340" fill="#6c0099"/><rect x="380" y="340" fill="#720099"/><rect x="390" y="340" fill="#780099"/><rect x="400" y="340" fill="#7e0099"/><rect x="140" y="350" fill="#000799"/><rect x="150" y="350" fill="#000699"/><rect x="160" y="350" fill="#000499"/><rect x="170" y="350" fill="#000399"/><rect x="180" y="350" fill="#000199"/><rect x="190" y="350" fill="#040099"/><rect x="200" y="350" fill="#090099"/><rect x="210" y="350" fill="#0f0099"/><rect x="220" y="350" fill="#140099"/><rect x="230" y="350" fill="#190099"/><rect x="240" y="350" fill="#1f0099"/><rect x="250" y="350" fill="#240099"/><rect x="260" y="350" fill="#290099"/><rect x="270" y="350" fill="#2f0099"/><rect x="280" y="350" fill="#340099"/><rect x="290" y="350" fill="#3a0099"/><rect x="300" y="350" fill="#3f0099"/><rect x="310" y="350" fill="#450099"/><rect x="320" y="350" fill="#4b0099"/><rect x="330" y="350" fill="#500099"/><rect x="340" y="350" fill="#560099"/><rect x="350" y="350" fill="#5c0099"/><rect x="360" y="350" fill="#610099"/><rect x="370" y="350" fill="#670099"/><rect x="380" y="350" fill="#6d0099"/><rect x="390" y="350" fill="#730099"/><rect x="140" y="360" fill="#000599"/><rect x="150" y="360" fill="#000499"/><rect x="160" y="360" fill="#000399"/><rect x="170" y="360" fill="#000199"/><rect x="180" y="360" fill="#000099"/><rect x="190" y="360" fill="#030099"/><rect x="200" y="360" fill="#080099"/><rect x="210" y="360" fill="#0d0099"/><rect x="220" y="360" fill="#130099"/><rect x="230" y="360" fill="#180099"/><rect x="240" y="360" fill="#1d0099"/><rect x="250" y="360" fill="#220099"/><rect x="260" y="360" fill="#270099"/><rect x="270" y="360" fill="#2d0099"/><rect x="280" y="360" fill="#320099"/><rect x="290" y="360" fill="#370099"/><rect x="300" y="360" fill="#3d0099"/><rect x="310" y="360" fill="#420099"/><rect x="320" y="360" fill="#470099"/><rect x="330" y="360" fill="#4d0099"/><rect x="340" y="360" fill="#520099"/><rect x="350" y="360" fill="#580099"/><rect x="360" y="360" fill="#5d0099"/><rect x="370" y="360" fill="#630099"/><rect x="380" y="360" fill="#690099"/><rect x="390" y="360" fill="#6e0099"/><rect x="150" y="370" fill="#000299"/><rect x="160" y="370" fill="#000199"/><rect x="170" y="370" fill="#000099"/><rect x="180" y="370" fill="#000099"/><rect x="190" y="370" fill="#020099"/><rect x="200" y="370" fill="#070099"/><rect x="210" y="370" fill="#0c0099"/><rect x="220" y="370" fill="#110099"/><rect x="230" y="370" fill="#160099"/><rect x="240" y="370" fill="#1b0099"/><rect x="250" y="370" fill="#200099"/><rect x="260" y="370" fill="#250099"/><rect x="270" y="370" fill="#2a0099"/><rect x="280" y="370" fill="#2f0099"/><rect x="290" y="370" fill="#350099"/><rect x="300" y="370" fill="#3a0099"/><rect x="310" y="370" fill="#3f0099"/><rect x="320" y="370" fill="#440099"/><rect x="330" y="370" fill="#4a0099"/><rect x="340" y="370" fill="#4f0099"/><rect x="350" y="370" fill="#540099"/><rect x="360" y="370" fill="#5a0099"/><rect x="370" y="370" fill="#5f0099"/><rect x="380" y="370" fill="#640099"/><rect x="160" y="380" fill="#000099"/><rect x="170" y="380" fill="#000099"/><rect x="180" y="380" fill="#000099"/><rect x="190" y="380" fill="#020099"/><rect x="200" y="380" fill="#060099"/><rect x="210" y="380" fill="#0b0099"/><rect x="220" y="380" fill="#100099"/><rect x="230" y="380" fill="#150099"/><rect x="240" y="380" fill="#1a0099"/><rect x="250" y="380" fill="#1e0099"/><rect x="260" y="380" fill="#230099"/><rect x="270" y="380" fill="#280099"/><rect x="280" y="380" fill="#2d0099"/><rect x="290" y="380" fill="#320099"/><rect x="300" y="380" fill="#370099"/><rect x="310" y="380" fill="#3c0099"/><rect x="320" y="380" fill="#410099"/><rect x="330" y="380" fill="#470099"/><rect x="340" y="380" fill="#4c0099"/><rect x="350" y="380" fill="#510099"/><rect x="360" y="380" fill="#560099"/><rect x="370" y="380" fill="#5b0099"/><rect x="170" y="390" fill="#000099"/><rect x="180" y="390" fill="#000099"/><rect x="190" y="390" fill="#010099"/><rect x="200" y="390" fill="#050099"/><rect x="210" y="390" fill="#0a0099"/><rect x="220" y="390" fill="#0f0099"/><rect x="230" y="390" fill="#130099"/><rect x="240" y="390" fill="#180099"/><rect x="250" y="390" fill="#1d0099"/><rect x="260" y="390" fill="#220099"/><rect x="270" y="390" fill="#260099"/><rect x="280" y="390" fill="#2b0099"/><rect x="290" y="390" fill="#300099"/><rect x="300" y="390" fill="#350099"/><rect x="310" y="390" fill="#3a0099"/><rect x="320" y="390" fill="#3f0099"/><rect x="330" y="390" fill="#440099"/><rect x="340" y="390" fill="#490099"/><rect x="350" y="390" fill="#4e0099"/><rect x="360" y="390" fill="#530099"/><rect x="170" y="400" fill="#000099"/><rect x="180" y="400" fill="#000099"/><rect x="190" y="400" fill="#000099"/><rect x="200" y="400" fill="#040099"/><rect x="210" y="400" fill="#090099"/><rect x="220" y="400" fill="#0e0099"/><rect x="230" y="400" fill="#120099"/><rect x="240" y="400" fill="#170099"/><rect x="250" y="400" fill="#1b0099"/><rect x="260" y="400" fill="#200099"/><rect x="270" y="400" fill="#250099"/><rect x="280" y="400" fill="#290099"/><rect x="290" y="400" fill="#2e0099"/><rect x="300" y="400" fill="#330099"/><rect x="310" y="400" fill="#370099"/><rect x="320" y="400" fill="#3c0099"/><rect x="330" y="400" fill="#410099"/><rect x="340" y="400" fill="#460099"/><rect x="350" y="400" fill="#4b0099"/><rect x="180" y="410" fill="#000099"/><rect x="190" y="410" fill="#000099"/><rect x="200" y="410" fill="#040099"/><rect x="210" y="410" fill="#080099"/><rect x="220" y="410" fill="#0c0099"/><rect x="230" y="410" fill="#110099"/><rect x="240" y="410" fill="#150099"/><rect x="250" y="410" fill="#1a0099"/><rect x="260" y="410" fill="#1e0099"/><rect x="270" y="410" fill="#230099"/><rect x="280" y="410" fill="#270099"/><rect x="290" y="410" fill="#2c0099"/><rect x="300" y="410" fill="#310099"/><rect x="310" y="410" fill="#350099"/><rect x="320" y="410" fill="#3a0099"/><rect x="330" y="410" fill="#3f0099"/><rect x="340" y="410" fill="#430099"/><rect x="190" y="420" fill="#000099"/><rect x="200" y="420" fill="#030099"/><rect x="210" y="420" fill="#070099"/><rect x="220" y="420" fill="#0b0099"/><rect x="230" y="420" fill="#100099"/><rect x="240" y="420" fill="#140099"/><rect x="250" y="420" fill="#180099"/><rect x="260" y="420" fill="#1d0099"/><rect x="270" y="420" fill="#210099"/><rect x="280" y="420" fill="#260099"/><rect x="290" y="420" fill="#2a0099"/><rect x="300" y="420" fill="#2f0099"/><rect x="310" y="420" fill="#330099"/><rect x="320" y="420" fill="#380099"/><rect x="330" y="420" fill="#3c0099"/><rect x="200" y="430" fill="#020099"/><rect x="210" y="430" fill="#060099"/><rect x="220" y="430" fill="#0a0099"/><rect x="230" y="430" fill="#0f0099"/><rect x="240" y="430" fill="#130099"/><rect x="250" y="430" fill="#170099"/><rect x="260" y="430" fill="#1b0099"/><rect x="270" y="430" fill="#200099"/><rect x="280" y="430" fill="#240099"/><rect x="290" y="430" fill="#280099"/><rect x="300" y="430" fill="#2d0099"/><rect x="310" y="430" fill="#310099"/><rect x="320" y="430" fill="#350099"/><rect x="220" y="440" fill="#090099"/><rect x="230" y="440" fill="#0e0099"/><rect x="240" y="440" fill="#120099"/><rect x="250" y="440" fill="#160099"/><rect x="260" y="440" fill="#1a0099"/><rect x="270" y="440" fill="#1e0099"/><rect x="280" y="440" fill="#220099"/><rect x="290" y="440" fill="#270099"/><rect x="300" y="440" fill="#2b0099"/><rect x="310" y="440" fill="#2f0099"/><rect x="230" y="450" fill="#0d0099"/><rect x="240" y="450" fill="#110099"/><rect x="250" y="450" fill="#150099"/><rect x="260" y="450" fill="#190099"/><rect x="270" y="450" fill="#1d0099"/><rect x="280" y="450" fill="#210099"/><rect x="290" y="450" fill="#250099"/><rect x="300" y="450" fill="#290099"/><rect x="240" y="460" fill="#100099"/><rect x="250" y="460" fill="#140099"/><rect x="260" y="460" fill="#170099"/><rect x="270" y="460" fill="#1b0099"/><rect x="280" y="460" fill="#1f0099"/><rect x="290" y="460" fill="#230099"/><rect x="250" y="470" fill="#120099"/><rect x="260" y="470" fill="#160099"/><rect x="270" y="470" fill="#1a0099"/><rect x="280" y="470" fill="#1e0099"/></g><g clip-path="url(#tr)" shape-rendering="crispEdges"><rect x="130" y="30" fill="#01ff06"/><rect x="140" y="30" fill="#1aff04"/><rect x="150" y="30" fill="#34ff02"/><rect x="160" y="30" fill="#4fff00"/><rect x="170" y="30" fill="#6cff00"/><rect x="180" y="30" fill="#8aff00"/><rect x="190" y="30" fill="#abff00"/><rect x="200" y="30" fill="#cdff00"/><rect x="210" y="30" fill="#f3ff00"/><rect x="220" y="30" fill="#ffe500"/><rect x="130" y="40" fill="#00ff1d"/><rect x="140" y="40" fill="#17ff1c"/><rect x="150" y="40" fill="#31ff1a"/><rect x="160" y="40" fill="#4dff19"/><rect x="170" y="40" fill="#6aff17"/><rect x="180" y="40" fill="#8aff16"/><rect x="190" y="40" fill="#acff14"/><rect x="200" y="40" fill="#cfff12"/><rect x="210" y="40" fill="#f6ff10"/><rect x="220" y="40" fill="#ffe20c"/><rect x="230" y="40" fill="#ffc308"/><rect x="240" y="40" fill="#ffab06"/><rect x="250" y="40" fill="#ff9603"/><rect x="260" y="40" fill="#ff8501"/><rect x="270" y="40" fill="#ff7600"/><rect x="280" y="40" fill="#ff6900"/><rect x="290" y="40" fill="#ff5e00"/><rect x="300" y="40" fill="#ff5400"/><rect x="310" y="40" fill="#ff4b00"/><rect x="320" y="40" fill="#ff4300"/><rect x="130" y="50" fill="#00ff35"/><rect x="140" y="50" fill="#13ff34"/><rect x="150" y="50" fill="#2eff34"/><rect x="160" y="50" fill="#4bff33"/><rect x="170" y="50" fill="#69ff32"/><rect x="180" y="50" fill="#8aff31"/><rect x="190" y="50" fill="#acff30"/><rect x="200" y="50" fill="#d2ff2f"/><rect x="210" y="50" fill="#f9ff2e"/><rect x="220" y="50" fill="#ffde27"/><rect x="230" y="50" fill="#ffbf21"/><rect x="240" y="50" fill="#ffa71c"/><rect x="250" y="50" fill="#ff9217"/><rect x="260" y="50" fill="#ff8114"/><rect x="270" y="50" fill="#ff7211"/><rect x="280" y="50" fill="#ff650e"/><rect x="290" y="50" fill="#ff5a0c"/><rect x="300" y="50" fill="#ff500a"/><rect x="310" y="50" fill="#ff4808"/><rect x="320" y="50" fill="#ff4006"/><rect x="330" y="50" fill="#ff3905"/><rect x="340" y="50" fill="#ff3303"/><rect x="350" y="50" fill="#ff2d02"/><rect x="360" y="50" fill="#ff2801"/><rect x="370" y="50" fill="#ff2300"/><rect x="380" y="50" fill="#ff1f00"/><rect x="390" y="50" fill="#ff1a00"/><rect x="400" y="50" fill="#ff1700"/><rect x="410" y="50" fill="#ff1300"/><rect x="420" y="50" fill="#ff1000"/><rect x="430" y="50" fill="#ff0d00"/><rect x="130" y="60" fill="#00ff4e"/><rect x="140" y="60" fill="#0fff4e"/><rect x="150" y="60" fill="#2bff4f"/><rect x="160" y="60" fill="#48ff4f"/><rect x="170" y="60" fill="#68ff4f"/><rect x="180" y="60" fill="#89ff4f"/><rect x="190" y="60" fill="#adff4f"/><rect x="200" y="60" fill="#d4ff4f"/><rect x="210" y="60" fill="#fdff4f"/><rect x="220" y="60" fill="#ffd944"/><rect x="230" y="60" fill="#ffbb3a"/><rect x="240" y="60" fill="#ffa233"/><rect x="250" y="60" fill="#ff8e2c"/><rect x="260" y="60" fill="#ff7d27"/><rect x="270" y="60" fill="#ff6e22"/><rect x="280" y="60" fill="#ff621e"/><rect x="290" y="60" fill="#ff571b"/><rect x="300" y="60" fill="#ff4d18"/><rect x="310" y="60" fill="#ff4415"/><rect x="320" y="60" fill="#ff3d13"/><rect x="330" y="60" fill="#ff3611"/><rect x="340" y="60" fill="#ff300f"/><rect x="350" y="60" fill="#ff2a0d"/><rect x="360" y="60" fill="#ff250c"/><rect x="370" y="60" fill="#ff200a"/><rect x="380" y="60" fill="#ff1c09"/><rect x="390" y="60" fill="#ff1808"/><rect x="400" y="60" fill="#ff1406"/><rect x="410" y="60" fill="#ff1105"/><rect x="420" y="60" fill="#ff0e04"/><rect x="430" y="60" fill="#ff0b04"/><rect x="440" y="60" fill="#ff0803"/><rect x="450" y="60" fill="#ff0502"/><rect x="460" y="60" fill="#ff0301"/><rect x="470" y="60" fill="#ff0100"/><rect x="130" y="70" fill="#00ff69"/><rect x="140" y="70" fill="#0bff6a"/><rect x="150" y="70" fill="#28ff6b"/><rect x="160" y="70" fill="#46ff6c"/><rect x="170" y="70" fill="#67ff6d"/><rect x="180" y="70" fill="#89ff6e"/><rect x="190" y="70" fill="#aeff70"/><rect x="200" y="70" fill="#d6ff71"/><rect x="210" y="70" fill="#fffc71"/><rect x="220" y="70" fill="#ffd561"/><rect x="230" y="70" fill="#ffb754"/><rect x="240" y="70" fill="#ff9e4a"/><rect x="250" y="70" fill="#ff8a42"/><rect x="260" y="70" fill="#ff793a"/><rect x="270" y="70" fill="#ff6a34"/><rect x="280" y="70" fill="#ff5e2f"/><rect x="290" y="70" fill="#ff532b"/><rect x="300" y="70" fill="#ff4927"/><rect x="310" y="70" fill="#ff4123"/><rect x="320" y="70" fill="#ff3920"/><rect x="330" y="70" fill="#ff331d"/><rect x="340" y="70" fill="#ff2c1b"/><rect x="350" y="70" fill="#ff2718"/><rect x="360" y="70" fill="#ff2216"/><rect x="370" y="70" fill="#ff1d14"/><rect x="380" y="70" fill="#ff1913"/><rect x="390" y="70" fill="#ff1511"/><rect x="400" y="70" fill="#ff120f"/><rect x="410" y="70" fill="#ff0e0e"/><rect x="420" y="70" fill="#ff0b0d"/><rect x="430" y="70" fill="#ff080c"/><rect x="440" y="70" fill="#ff060a"/><rect x="450" y="70" fill="#ff0309"/><rect x="460" y="70" fill="#ff0108"/><rect x="470" y="70" fill="#ff0007"/><rect x="140" y="80" fill="#07ff88"/><rect x="150" y="80" fill="#24ff89"/><rect x="160" y="80" fill="#44ff8c"/><rect x="170" y="80" fill="#65ff8e"/><rect x="180" y="80" fill="#89ff90"/><rect x="190" y="80" fill="#afff93"/><rect x="200" y="80" fill="#d9ff95"/><rect x="210" y="80" fill="#fff794"/><rect x="220" y="80" fill="#ffd07f"/><rect x="230" y="80" fill="#ffb26f"/><rect x="240" y="80" fill="#ff9962"/><rect x="250" y="80" fill="#ff8557"/><rect x="260" y="80" fill="#ff744f"/><rect x="270" y="80" fill="#ff6647"/><rect x="280" y="80" fill="#ff5a40"/><rect x="290" y="80" fill="#ff4f3b"/><rect x="300" y="80" fill="#ff4636"/><rect x="310" y="80" fill="#ff3d31"/><rect x="320" y="80" fill="#ff362d"/><rect x="330" y="80" fill="#ff2f2a"/><rect x="340" y="80" fill="#ff2927"/><rect x="350" y="80" fill="#ff2424"/><rect x="360" y="80" fill="#ff1f21"/><rect x="370" y="80" fill="#ff1a1f"/><rect x="380" y="80" fill="#ff161c"/><rect x="390" y="80" fill="#ff121a"/><rect x="400" y="80" fill="#ff0f19"/><rect x="410" y="80" fill="#ff0c17"/><rect x="420" y="80" fill="#ff0915"/><rect x="430" y="80" fill="#ff0614"/><rect x="440" y="80" fill="#ff0312"/><rect x="450" y="80" fill="#ff0111"/><rect x="460" y="80" fill="#ff0010"/><rect x="140" y="90" fill="#03ffa7"/><rect x="150" y="90" fill="#21ffaa"/><rect x="160" y="90" fill="#41ffad"/><rect x="170" y="90" fill="#63ffb1"/><rect x="180" y="90" fill="#89ffb4"/><rect x="190" y="90" fill="#b1ffb8"/><rect x="200" y="90" fill="#dcffbd"/><rect x="210" y="90" fill="#fff3b9"/><rect x="220" y="90" fill="#ffcc9f"/><rect x="230" y="90" fill="#ffad8b"/><rect x="240" y="90" fill="#ff957b"/><rect x="250" y="90" fill="#ff816e"/><rect x="260" y="90" fill="#ff7063"/><rect x="270" y="90" fill="#ff625a"/><rect x="280" y="90" fill="#ff5652"/><rect x="290" y="90" fill="#ff4b4b"/><rect x="300" y="90" fill="#ff4245"/><rect x="310" y="90" fill="#ff3a40"/><rect x="320" y="90" fill="#ff323b"/><rect x="330" y="90" fill="#ff2c36"/><rect x="340" y="90" fill="#ff2633"/><rect x="350" y="90" fill="#ff212f"/><rect x="360" y="90" fill="#ff1c2c"/><rect x="370" y="90" fill="#ff1729"/><rect x="380" y="90" fill="#ff1326"/><rect x="390" y="90" fill="#ff1024"/><rect x="400" y="90" fill="#ff0c22"/><rect x="410" y="90" fill="#ff0920"/><rect x="420" y="90" fill="#ff061e"/><rect x="430" y="90" fill="#ff031c"/><rect x="440" y="90" fill="#ff011a"/><rect x="450" y="90" fill="#ff0019"/><rect x="140" y="100" fill="#00ffc8"/><rect x="150" y="100" fill="#1dffcc"/><rect x="160" y="100" fill="#3effd1"/><rect x="170" y="100" fill="#62ffd6"/><rect x="180" y="100" fill="#88ffdb"/><rect x="190" y="100" fill="#b2ffe1"/><rect x="200" y="100" fill="#dfffe8"/><rect x="210" y="100" fill="#ffeedf"/><rect x="220" y="100" fill="#ffc7c0"/><rect x="230" y="100" fill="#ffa8a8"/><rect x="240" y="100" fill="#ff9095"/><rect x="250" y="100" fill="#ff7c85"/><rect x="260" y="100" fill="#ff6c78"/><rect x="270" y="100" fill="#ff5e6d"/><rect x="280" y="100" fill="#ff5264"/><rect x="290" y="100" fill="#ff475c"/><rect x="300" y="100" fill="#ff3e54"/><rect x="310" y="100" fill="#ff364e"/><rect x="320" y="100" fill="#ff2f48"/><rect x="330" y="100" fill="#ff2843"/><rect x="340" y="100" fill="#ff233f"/><rect x="350" y="100" fill="#ff1e3b"/><rect x="360" y="100" fill="#ff1937"/><rect x="370" y="100" fill="#ff1534"/><rect x="380" y="100" fill="#ff1131"/><rect x="390" y="100" fill="#ff0d2e"/><rect x="400" y="100" fill="#ff0a2b"/><rect x="410" y="100" fill="#ff0629"/><rect x="420" y="100" fill="#ff0426"/><rect x="430" y="100" fill="#ff0124"/><rect x="440" y="100" fill="#ff0022"/><rect x="140" y="110" fill="#00ffec"/><rect x="150" y="110" fill="#19fff1"/><rect x="160" y="110" fill="#3bfff8"/><rect x="170" y="110" fill="#60fffe"/><rect x="180" y="110" fill="#84f8ff"/><rect x="190" y="110" fill="#a9f0ff"/><rect x="200" y="110" fill="#cfe9ff"/><rect x="210" y="110" fill="#f6e1ff"/><rect x="220" y="110" fill="#ffc2e3"/><rect x="230" y="110" fill="#ffa3c6"/><rect x="240" y="110" fill="#ff8bb0"/><rect x="250" y="110" fill="#ff779d"/><rect x="260" y="110" fill="#ff678e"/><rect x="270" y="110" fill="#ff5981"/><rect x="280" y="110" fill="#ff4d76"/><rect x="290" y="110" fill="#ff436d"/><rect x="300" y="110" fill="#ff3a64"/><rect x="310" y="110" fill="#ff325d"/><rect x="320" y="110" fill="#ff2b56"/><rect x="330" y="110" fill="#ff2551"/><rect x="340" y="110" fill="#ff1f4b"/><rect x="350" y="110" fill="#ff1a47"/><rect x="360" y="110" fill="#ff1642"/><rect x="370" y="110" fill="#ff113f"/><rect x="380" y="110" fill="#ff0e3b"/><rect x="390" y="110" fill="#ff0a38"/><rect x="400" y="110" fill="#ff0735"/><rect x="410" y="110" fill="#ff0432"/><rect x="420" y="110" fill="#ff012f"/><rect x="430" y="110" fill="#ff002d"/><rect x="140" y="120" fill="#00edff"/><rect x="150" y="120" fill="#12e6ff"/><rect x="160" y="120" fill="#31e0ff"/><rect x="170" y="120" fill="#50d9ff"/><rect x="180" y="120" fill="#70d3ff"/><rect x="190" y="120" fill="#91ccff"/><rect x="200" y="120" fill="#b2c5ff"/><rect x="210" y="120" fill="#d4beff"/><rect x="220" y="120" fill="#f7b7ff"/><rect x="230" y="120" fill="#ff9ee5"/><rect x="240" y="120" fill="#ff86cb"/><rect x="250" y="120" fill="#ff72b6"/><rect x="260" y="120" fill="#ff62a4"/><rect x="270" y="120" fill="#ff5596"/><rect x="280" y="120" fill="#ff4989"/><rect x="290" y="120" fill="#ff3f7e"/><rect x="300" y="120" fill="#ff3674"/><rect x="310" y="120" fill="#ff2e6c"/><rect x="320" y="120" fill="#ff2865"/><rect x="330" y="120" fill="#ff215e"/><rect x="340" y="120" fill="#ff1c58"/><rect x="350" y="120" fill="#ff1753"/><rect x="360" y="120" fill="#ff134e"/><rect x="370" y="120" fill="#ff0e49"/><rect x="380" y="120" fill="#ff0b45"/><rect x="390" y="120" fill="#ff0742"/><rect x="400" y="120" fill="#ff043e"/><rect x="410" y="120" fill="#ff013b"/><rect x="420" y="120" fill="#ff0038"/><rect x="140" y="130" fill="#00ceff"/><rect x="150" y="130" fill="#0cc8ff"/><rect x="160" y="130" fill="#28c2ff"/><rect x="170" y="130" fill="#44bcff"/><rect x="180" y="130" fill="#60b5ff"/><rect x="190" y="130" fill="#7dafff"/><rect x="200" y="130" fill="#9ba9ff"/><rect x="210" y="130" fill="#b9a2ff"/><rect x="220" y="130" fill="#d89bff"/><rect x="230" y="130" fill="#f794ff"/><rect x="240" y="130" fill="#ff81e8"/><rect x="250" y="130" fill="#ff6dcf"/><rect x="260" y="130" fill="#ff5dbb"/><rect x="270" y="130" fill="#ff50aa"/><rect x="280" y="130" fill="#ff449c"/><rect x="290" y="130" fill="#ff3b90"/><rect x="300" y="130" fill="#ff3285"/><rect x="310" y="130" fill="#ff2a7c"/><rect x="320" y="130" fill="#ff2473"/><rect x="330" y="130" fill="#ff1e6c"/><rect x="340" y="130" fill="#ff1965"/><rect x="350" y="130" fill="#ff145f"/><rect x="360" y="130" fill="#ff0f59"/><rect x="370" y="130" fill="#ff0b54"/><rect x="380" y="130" fill="#ff0850"/><rect x="390" y="130" fill="#ff044c"/><rect x="400" y="130" fill="#ff0148"/><rect x="410" y="130" fill="#ff0044"/><rect x="150" y="140" fill="#07afff"/><rect x="160" y="140" fill="#20a9ff"/><rect x="170" y="140" fill="#39a3ff"/><rect x="180" y="140" fill="#539eff"/><rect x="190" y="140" fill="#6d98ff"/><rect x="200" y="140" fill="#8891ff"/><rect x="210" y="140" fill="#a38bff"/><rect x="220" y="140" fill="#bf85ff"/><rect x="230" y="140" fill="#db7fff"/><rect x="240" y="140" fill="#f878ff"/><rect x="250" y="140" fill="#ff68ea"/><rect x="260" y="140" fill="#ff58d3"/><rect x="270" y="140" fill="#ff4bc0"/><rect x="280" y="140" fill="#ff40b0"/><rect x="290" y="140" fill="#ff36a2"/><rect x="300" y="140" fill="#ff2e96"/><rect x="310" y="140" fill="#ff268b"/><rect x="320" y="140" fill="#ff2082"/><rect x="330" y="140" fill="#ff1a7a"/><rect x="340" y="140" fill="#ff1572"/><rect x="350" y="140" fill="#ff106b"/><rect x="360" y="140" fill="#ff0c65"/><rect x="370" y="140" fill="#ff0860"/><rect x="380" y="140" fill="#ff055b"/><rect x="390" y="140" fill="#ff0156"/><rect x="400" y="140" fill="#ff0052"/><rect x="150" y="150" fill="#039aff"/><rect x="160" y="150" fill="#1a95ff"/><rect x="170" y="150" fill="#318fff"/><rect x="180" y="150" fill="#488aff"/><rect x="190" y="150" fill="#6084ff"/><rect x="200" y="150" fill="#797eff"/><rect x="210" y="150" fill="#9178ff"/><rect x="220" y="150" fill="#ab73ff"/><rect x="230" y="150" fill="#c46dff"/><rect x="240" y="150" fill="#de66ff"/><rect x="250" y="150" fill="#f860ff"/><rect x="260" y="150" fill="#ff53eb"/><rect x="270" y="150" fill="#ff46d6"/><rect x="280" y="150" fill="#ff3bc4"/><rect x="290" y="150" fill="#ff32b5"/><rect x="300" y="150" fill="#ff2aa7"/><rect x="310" y="150" fill="#ff229b"/><rect x="320" y="150" fill="#ff1c91"/><rect x="330" y="150" fill="#ff1688"/><rect x="340" y="150" fill="#ff117f"/><rect x="350" y="150" fill="#ff0d78"/><rect x="360" y="150" fill="#ff0971"/><rect x="370" y="150" fill="#ff056b"/><rect x="380" y="150" fill="#ff0266"/><rect x="390" y="150" fill="#ff0060"/><rect x="150" y="160" fill="#0088ff"/><rect x="160" y="160" fill="#1483ff"/><rect x="170" y="160" fill="#2a7eff"/><rect x="180" y="160" fill="#3f79ff"/><rect x="190" y="160" fill="#5574ff"/><rect x="200" y="160" fill="#6c6eff"/><rect x="210" y="160" fill="#8269ff"/><rect x="220" y="160" fill="#9963ff"/><rect x="230" y="160" fill="#b15dff"/><rect x="240" y="160" fill="#c858ff"/><rect x="250" y="160" fill="#e052ff"/><rect x="260" y="160" fill="#f94cff"/><rect x="270" y="160" fill="#ff41ed"/><rect x="280" y="160" fill="#ff36d9"/><rect x="290" y="160" fill="#ff2dc8"/><rect x="300" y="160" fill="#ff25b9"/><rect x="310" y="160" fill="#ff1eac"/><rect x="320" y="160" fill="#ff18a0"/><rect x="330" y="160" fill="#ff1396"/><rect x="340" y="160" fill="#ff0e8d"/><rect x="350" y="160" fill="#ff0985"/><rect x="360" y="160" fill="#ff057d"/><rect x="370" y="160" fill="#ff0277"/><rect x="380" y="160" fill="#ff0071"/><rect x="150" y="170" fill="#0079ff"/><rect x="160" y="170" fill="#1074ff"/><rect x="170" y="170" fill="#236fff"/><rect x="180" y="170" fill="#376bff"/><rect x="190" y="170" fill="#4c65ff"/><rect x="200" y="170" fill="#6060ff"/><rect x="210" y="170" fill="#755bff"/><rect x="220" y="170" fill="#8b56ff"/><rect x="230" y="170" fill="#a051ff"/><rect x="240" y="170" fill="#b64bff"/><rect x="250" y="170" fill="#cc46ff"/><rect x="260" y="170" fill="#e240ff"/><rect x="270" y="170" fill="#f93bff"/><rect x="280" y="170" fill="#ff31ee"/><rect x="290" y="170" fill="#ff29db"/><rect x="300" y="170" fill="#ff21cb"/><rect x="310" y="170" fill="#ff1abc"/><rect x="320" y="170" fill="#ff14b0"/><rect x="330" y="170" fill="#ff0fa5"/><rect x="340" y="170" fill="#ff0a9b"/><rect x="350" y="170" fill="#ff0692"/><rect x="360" y="170" fill="#ff028a"/><rect x="370" y="170" fill="#ff0082"/><rect x="150" y="180" fill="#006cff"/><rect x="160" y="180" fill="#0c67ff"/><rect x="170" y="180" fill="#1e63ff"/><rect x="180" y="180" fill="#315eff"/><rect x="190" y="180" fill="#4459ff"/><rect x="200" y="180" fill="#5754ff"/><rect x="210" y="180" fill="#6a50ff"/><rect x="220" y="180" fill="#7e4bff"/><rect x="230" y="180" fill="#9246ff"/><rect x="240" y="180" fill="#a641ff"/><rect x="250" y="180" fill="#ba3bff"/><rect x="260" y="180" fill="#cf36ff"/><rect x="270" y="180" fill="#e431ff"/><rect x="280" y="180" fill="#f92cff"/><rect x="290" y="180" fill="#ff24ef"/><rect x="300" y="180" fill="#ff1cdd"/><rect x="310" y="180" fill="#ff16ce"/><rect x="320" y="180" fill="#ff10c0"/><rect x="330" y="180" fill="#ff0bb4"/><rect x="340" y="180" fill="#ff06a9"/><rect x="350" y="180" fill="#ff029f"/><rect x="360" y="180" fill="#ff0096"/><rect x="150" y="190" fill="#0060ff"/><rect x="160" y="190" fill="#085cff"/><rect x="170" y="190" fill="#1958ff"/><rect x="180" y="190" fill="#2b53ff"/><rect x="190" y="190" fill="#3c4fff"/><rect x="200" y="190" fill="#4e4aff"/><rect x="210" y="190" fill="#6045ff"/><rect x="220" y="190" fill="#7341ff"/><rect x="230" y="190" fill="#853cff"/><rect x="240" y="190" fill="#9837ff"/><rect x="250" y="190" fill="#ab32ff"/><rect x="260" y="190" fill="#be2dff"/><rect x="270" y="190" fill="#d228ff"/><rect x="280" y="190" fill="#e623ff"/><rect x="290" y="190" fill="#fa1eff"/><rect x="300" y="190" fill="#ff18f0"/><rect x="310" y="190" fill="#ff11df"/><rect x="320" y="190" fill="#ff0cd0"/><rect x="330" y="190" fill="#ff07c3"/><rect x="340" y="190" fill="#ff02b7"/><rect x="350" y="190" fill="#ff00ad"/><rect x="160" y="200" fill="#0552ff"/><rect x="170" y="200" fill="#154eff"/><rect x="180" y="200" fill="#264aff"/><rect x="190" y="200" fill="#3645ff"/><rect x="200" y="200" fill="#4741ff"/><rect x="210" y="200" fill="#583dff"/><rect x="220" y="200" fill="#6938ff"/><rect x="230" y="200" fill="#7a34ff"/><rect x="240" y="200" fill="#8c2fff"/><rect x="250" y="200" fill="#9e2aff"/><rect x="260" y="200" fill="#b026ff"/><rect x="270" y="200" fill="#c221ff"/><rect x="280" y="200" fill="#d41cff"/><rect x="290" y="200" fill="#e717ff"/><rect x="300" y="200" fill="#fa12ff"/><rect x="310" y="200" fill="#ff0df1"/><rect x="320" y="200" fill="#ff07e1"/><rect x="330" y="200" fill="#ff03d2"/><rect x="340" y="200" fill="#ff00c6"/><rect x="160" y="210" fill="#0249ff"/><rect x="170" y="210" fill="#1145ff"/><rect x="180" y="210" fill="#2141ff"/><rect x="190" y="210" fill="#313dff"/><rect x="200" y="210" fill="#4039ff"/><rect x="210" y="210" fill="#5035ff"/><rect x="220" y="210" fill="#6130ff"/><rect x="230" y="210" fill="#712cff"/><rect x="240" y="210" fill="#8128ff"/><rect x="250" y="210" fill="#9223ff"/><rect x="260" y="210" fill="#a31fff"/><rect x="270" y="210" fill="#b41aff"/><rect x="280" y="210" fill="#c516ff"/><rect x="290" y="210" fill="#d711ff"/><rect x="300" y="210" fill="#e80dff"/><rect x="310" y="210" fill="#fa08ff"/><rect x="320" y="210" fill="#ff03f2"/><rect x="330" y="210" fill="#ff00e2"/><rect x="160" y="220" fill="#0041ff"/><rect x="170" y="220" fill="#0e3dff"/><rect x="180" y="220" fill="#1d3aff"/><rect x="190" y="220" fill="#2c36ff"/><rect x="200" y="220" fill="#3b32ff"/><rect x="210" y="220" fill="#4a2eff"/><rect x="220" y="220" fill="#592aff"/><rect x="230" y="220" fill="#6825ff"/><rect x="240" y="220" fill="#7821ff"/><rect x="250" y="220" fill="#881dff"/><rect x="260" y="220" fill="#9719ff"/><rect x="270" y="220" fill="#a715ff"/><rect x="280" y="220" fill="#b810ff"/><rect x="290" y="220" fill="#c80cff"/><rect x="300" y="220" fill="#d908ff"/><rect x="310" y="220" fill="#e903ff"/><rect x="320" y="220" fill="#fa00ff"/><rect x="160" y="230" fill="#003aff"/><rect x="170" y="230" fill="#0b36ff"/><rect x="180" y="230" fill="#1933ff"/><rect x="190" y="230" fill="#272fff"/><rect x="200" y="230" fill="#352bff"/><rect x="210" y="230" fill="#4427ff"/><rect x="220" y="230" fill="#5223ff"/><rect x="230" y="230" fill="#6120ff"/><rect x="240" y="230" fill="#6f1cff"/><rect x="250" y="230" fill="#7e18ff"/><rect x="260" y="230" fill="#8d14ff"/><rect x="270" y="230" fill="#9c0fff"/><rect x="280" y="230" fill="#ac0bff"/><rect x="290" y="230" fill="#bb07ff"/><rect x="300" y="230" fill="#cb03ff"/><rect x="310" y="230" fill="#da00ff"/><rect x="160" y="240" fill="#0034ff"/><rect x="170" y="240" fill="#0930ff"/><rect x="180" y="240" fill="#162dff"/><rect x="190" y="240" fill="#2329ff"/><rect x="200" y="240" fill="#3125ff"/><rect x="210" y="240" fill="#3e22ff"/><rect x="220" y="240" fill="#4c1eff"/><rect x="230" y="240" fill="#5a1aff"/><rect x="240" y="240" fill="#6816ff"/><rect x="250" y="240" fill="#7613ff"/><rect x="260" y="240" fill="#840fff"/><rect x="270" y="240" fill="#920bff"/><rect x="280" y="240" fill="#a107ff"/><rect x="290" y="240" fill="#af03ff"/><rect x="300" y="240" fill="#be00ff"/><rect x="160" y="250" fill="#002eff"/><rect x="170" y="250" fill="#062aff"/><rect x="180" y="250" fill="#1327ff"/><rect x="190" y="250" fill="#1f23ff"/><rect x="200" y="250" fill="#2c20ff"/><rect x="210" y="250" fill="#391cff"/><rect x="220" y="250" fill="#4619ff"/><rect x="230" y="250" fill="#5315ff"/><rect x="240" y="250" fill="#6112ff"/><rect x="250" y="250" fill="#6e0eff"/><rect x="260" y="250" fill="#7c0aff"/><rect x="270" y="250" fill="#8907ff"/><rect x="280" y="250" fill="#9703ff"/><rect x="290" y="250" fill="#a500ff"/><rect x="170" y="260" fill="#0425ff"/><rect x="180" y="260" fill="#1022ff"/><rect x="190" y="260" fill="#1c1eff"/><rect x="200" y="260" fill="#281bff"/><rect x="210" y="260" fill="#3518ff"/><rect x="220" y="260" fill="#4114ff"/><rect x="230" y="260" fill="#4e11ff"/><rect x="240" y="260" fill="#5a0dff"/><rect x="250" y="260" fill="#670aff"/><rect x="260" y="260" fill="#7406ff"/><rect x="270" y="260" fill="#8103ff"/><rect x="280" y="260" fill="#8e00ff"/><rect x="170" y="270" fill="#0220ff"/><rect x="180" y="270" fill="#0d1dff"/><rect x="190" y="270" fill="#191aff"/><rect x="200" y="270" fill="#2517ff"/><rect x="210" y="270" fill="#3013ff"/><rect x="220" y="270" fill="#3c10ff"/><rect x="230" y="270" fill="#480dff"/><rect x="240" y="270" fill="#5409ff"/><rect x="250" y="270" fill="#6106ff"/><rect x="260" y="270" fill="#6d03ff"/><rect x="270" y="270" fill="#7900ff"/><rect x="170" y="280" fill="#001cff"/><rect x="180" y="280" fill="#0b19ff"/><rect x="190" y="280" fill="#1616ff"/><rect x="200" y="280" fill="#2113ff"/><rect x="210" y="280" fill="#2d0fff"/><rect x="220" y="280" fill="#380cff"/><rect x="230" y="280" fill="#4409ff"/><rect x="240" y="280" fill="#4f06ff"/><rect x="250" y="280" fill="#5b03ff"/><rect x="260" y="280" fill="#6700ff"/><rect x="170" y="290" fill="#0018ff"/><rect x="180" y="290" fill="#0915ff"/><rect x="190" y="290" fill="#1412ff"/><rect x="200" y="290" fill="#1e0fff"/><rect x="210" y="290" fill="#290cff"/><rect x="220" y="290" fill="#3409ff"/><rect x="230" y="290" fill="#3f06ff"/><rect x="240" y="290" fill="#4a03ff"/><rect x="250" y="290" fill="#5500ff"/><rect x="170" y="300" fill="#0014ff"/><rect x="180" y="300" fill="#0711ff"/><rect x="190" y="300" fill="#110eff"/><rect x="200" y="300" fill="#1b0bff"/><rect x="210" y="300" fill="#2608ff"/><rect x="220" y="300" fill="#3005ff"/><rect x="230" y="300" fill="#3b02ff"/><rect x="240" y="300" fill="#4600ff"/><rect x="170" y="310" fill="#0011ff"/><rect x="180" y="310" fill="#050eff"/><rect x="190" y="310" fill="#0f0bff"/><rect x="200" y="310" fill="#1908ff"/><rect x="210" y="310" fill="#2305ff"/><rect x="220" y="310" fill="#2d02ff"/><rect x="230" y="310" fill="#3700ff"/><rect x="180" y="320" fill="#030bff"/><rect x="190" y="320" fill="#0d08ff"/><rect x="200" y="320" fill="#1605ff"/><rect x="210" y="320" fill="#2002ff"/><rect x="220" y="320" fill="#2a00ff"/><rect x="230" y="320" fill="#3400ff"/><rect x="180" y="330" fill="#0208ff"/><rect x="190" y="330" fill="#0b05ff"/><rect x="200" y="330" fill="#1402ff"/><rect x="210" y="330" fill="#1e00ff"/><rect x="220" y="330" fill="#2700ff"/><rect x="180" y="340" fill="#0005ff"/><rect x="190" y="340" fill="#0902ff"/><rect x="200" y="340" fill="#1200ff"/><rect x="210" y="340" fill="#1b00ff"/><rect x="180" y="350" fill="#0002ff"/><rect x="190" y="350" fill="#0700ff"/><rect x="200" y="350" fill="#1000ff"/><rect x="180" y="360" fill="#0000ff"/><rect x="190" y="360" fill="#0600ff"/></g></svg>
<canvas id="cie" class="a" style="left:1019px;top:120px;" width="641" height="495"></canvas>
<svg class="a" style="left:1019px;top:120px;" width="641" height="495"><rect x="204" y="101" width="14" height="14" fill="none" stroke="#000" stroke-width="2.2"/><rect x="473" y="56" width="14" height="14" fill="none" stroke="#eee" stroke-width="1.6"/><rect x="127" y="23" width="14" height="14" fill="none" stroke="#e8f4e8" stroke-width="1.6"/><rect x="180" y="355" width="14" height="14" fill="none" stroke="#eee" stroke-width="1.6"/><rect x="141" y="111" width="14" height="14" fill="none" stroke="#e8f8f8" stroke-width="1.6"/><rect x="318" y="214" width="14" height="14" fill="none" stroke="#f4e8f4" stroke-width="1.6"/><rect x="211" y="31" width="14" height="14" fill="none" stroke="#f8f8e0" stroke-width="1.6"/><circle cx="207.78" cy="107.93" r="4.5" fill="#fff" stroke="#111" stroke-width="1.3"/><circle cx="480.26" cy="58.32" r="4.5" fill="#c00000" stroke="#111" stroke-width="1.3"/><circle cx="134.46" cy="29.38" r="4.5" fill="#00a000" stroke="#111" stroke-width="1.3"/><circle cx="194.11" cy="354.35" r="4.5" fill="#0000a0" stroke="#111" stroke-width="1.3"/><circle cx="148.88" cy="119.84" r="4.5" fill="#10a8b8" stroke="#111" stroke-width="1.3"/><circle cx="317.04" cy="223.24" r="4.5" fill="#a000a0" stroke="#111" stroke-width="1.3"/><circle cx="215.08" cy="37.00" r="4.5" fill="#b0b000" stroke="#111" stroke-width="1.3"/></svg>
<div class="a" style="left:1019px;top:120px;width:641px;height:494px;box-sizing:border-box;border:2px solid #9a9a9a;"></div>
<div class="a" style="left:1019px;top:612px;width:2px;height:6px;background:#d8d8d8;"></div>
<div class="t" style="left:1015.43px;top:621.80px;font-size:15.00px;color:#d8d8d8;">0</div>
<div class="a" style="left:1072px;top:612px;width:2px;height:6px;background:#d8d8d8;"></div>
<div class="t" style="left:1058.22px;top:621.80px;font-size:15.00px;color:#d8d8d8;">0,05</div>
<div class="a" style="left:1125px;top:612px;width:2px;height:6px;background:#d8d8d8;"></div>
<div class="t" style="left:1115.60px;top:621.80px;font-size:15.00px;color:#d8d8d8;">0,1</div>
<div class="a" style="left:1178px;top:612px;width:2px;height:6px;background:#d8d8d8;"></div>
<div class="t" style="left:1164.65px;top:621.80px;font-size:15.00px;color:#d8d8d8;">0,15</div>
<div class="a" style="left:1231px;top:612px;width:2px;height:6px;background:#d8d8d8;"></div>
<div class="t" style="left:1222.03px;top:621.80px;font-size:15.00px;color:#d8d8d8;">0,2</div>
<div class="a" style="left:1285px;top:612px;width:2px;height:6px;background:#d8d8d8;"></div>
<div class="t" style="left:1271.08px;top:621.80px;font-size:15.00px;color:#d8d8d8;">0,25</div>
<div class="a" style="left:1338px;top:612px;width:2px;height:6px;background:#d8d8d8;"></div>
<div class="t" style="left:1328.46px;top:621.80px;font-size:15.00px;color:#d8d8d8;">0,3</div>
<div class="a" style="left:1391px;top:612px;width:2px;height:6px;background:#d8d8d8;"></div>
<div class="t" style="left:1377.51px;top:621.80px;font-size:15.00px;color:#d8d8d8;">0,35</div>
<div class="a" style="left:1444px;top:612px;width:2px;height:6px;background:#d8d8d8;"></div>
<div class="t" style="left:1434.89px;top:621.80px;font-size:15.00px;color:#d8d8d8;">0,4</div>
<div class="a" style="left:1498px;top:612px;width:2px;height:6px;background:#d8d8d8;"></div>
<div class="t" style="left:1483.94px;top:621.80px;font-size:15.00px;color:#d8d8d8;">0,45</div>
<div class="a" style="left:1551px;top:612px;width:2px;height:6px;background:#d8d8d8;"></div>
<div class="t" style="left:1541.32px;top:621.80px;font-size:15.00px;color:#d8d8d8;">0,5</div>
<div class="a" style="left:1604px;top:612px;width:2px;height:6px;background:#d8d8d8;"></div>
<div class="t" style="left:1590.37px;top:621.80px;font-size:15.00px;color:#d8d8d8;">0,55</div>
<div class="a" style="left:1013px;top:612px;width:6px;height:2px;background:#d8d8d8;"></div>
<div class="t" style="left:1004.16px;top:606.00px;font-size:15.00px;color:#d8d8d8;">0</div>
<div class="a" style="left:1013px;top:571px;width:6px;height:2px;background:#d8d8d8;"></div>
<div class="t" style="left:983.31px;top:564.96px;font-size:15.00px;color:#d8d8d8;">0,05</div>
<div class="a" style="left:1013px;top:530px;width:6px;height:2px;background:#d8d8d8;"></div>
<div class="t" style="left:991.65px;top:523.93px;font-size:15.00px;color:#d8d8d8;">0,1</div>
<div class="a" style="left:1013px;top:489px;width:6px;height:2px;background:#d8d8d8;"></div>
<div class="t" style="left:983.31px;top:482.89px;font-size:15.00px;color:#d8d8d8;">0,15</div>
<div class="a" style="left:1013px;top:448px;width:6px;height:2px;background:#d8d8d8;"></div>
<div class="t" style="left:991.65px;top:441.85px;font-size:15.00px;color:#d8d8d8;">0,2</div>
<div class="a" style="left:1013px;top:407px;width:6px;height:2px;background:#d8d8d8;"></div>
<div class="t" style="left:983.31px;top:400.81px;font-size:15.00px;color:#d8d8d8;">0,25</div>
<div class="a" style="left:1013px;top:366px;width:6px;height:2px;background:#d8d8d8;"></div>
<div class="t" style="left:991.65px;top:359.78px;font-size:15.00px;color:#d8d8d8;">0,3</div>
<div class="a" style="left:1013px;top:325px;width:6px;height:2px;background:#d8d8d8;"></div>
<div class="t" style="left:983.31px;top:318.74px;font-size:15.00px;color:#d8d8d8;">0,35</div>
<div class="a" style="left:1013px;top:284px;width:6px;height:2px;background:#d8d8d8;"></div>
<div class="t" style="left:991.65px;top:277.70px;font-size:15.00px;color:#d8d8d8;">0,4</div>
<div class="a" style="left:1013px;top:243px;width:6px;height:2px;background:#d8d8d8;"></div>
<div class="t" style="left:983.31px;top:236.66px;font-size:15.00px;color:#d8d8d8;">0,45</div>
<div class="a" style="left:1013px;top:202px;width:6px;height:2px;background:#d8d8d8;"></div>
<div class="t" style="left:991.65px;top:195.63px;font-size:15.00px;color:#d8d8d8;">0,5</div>
<div class="a" style="left:1013px;top:161px;width:6px;height:2px;background:#d8d8d8;"></div>
<div class="t" style="left:983.31px;top:154.59px;font-size:15.00px;color:#d8d8d8;">0,55</div>
<div class="a" style="left:1403.5px;top:580.5px;width:253px;height:27px;background:#2c2c2c;"></div>
<div class="t" style="left:1405.00px;top:584.92px;font-size:19.00px;color:#f4f4f4;transform:scaleX(1.0308);">Gamut Coverage:&nbsp; 97,6%</div>
<div class="t" style="left:16.00px;top:688.53px;font-size:29.50px;color:#f0f0f0;transform:scaleX(1.0117);">Current Reading</div>
<div class="t" style="left:16.20px;top:762.41px;font-size:25.50px;color:#f0f0f0;transform:scaleX(0.9741);">x: 0,3089</div>
<div class="t" style="left:172.50px;top:762.41px;font-size:25.50px;color:#f0f0f0;transform:scaleX(0.9808);">y: 0,3305</div>
<div class="t" style="left:16.20px;top:802.41px;font-size:25.50px;color:#f0f0f0;transform:scaleX(0.9715);">fL: 148,83</div>
<div class="t" style="left:16.20px;top:842.91px;font-size:25.50px;color:#f0f0f0;transform:scaleX(1.0198);">cd/m&sup2;: 509,92</div>
<div class="t" style="left:426.09px;top:670.15px;font-size:14.00px;color:#d0d0d0;">RGB Balance</div>
<div class="a" style="left:358.5px;top:685.5px;width:250px;height:182px;background:#232323;box-sizing:border-box;border:2px solid #9a9a9a;"></div>
<div class="a" style="left:358.5px;top:704px;width:250px;height:2px;background:#8a8a8a;"></div>
<div class="a" style="left:353.5px;top:704px;width:5px;height:2px;background:#d8d8d8;"></div>
<div class="t" style="left:327.97px;top:697.90px;font-size:15.00px;color:#d8d8d8;">104</div>
<div class="a" style="left:358.5px;top:741px;width:250px;height:2px;background:#8a8a8a;"></div>
<div class="a" style="left:353.5px;top:741px;width:5px;height:2px;background:#d8d8d8;"></div>
<div class="t" style="left:327.97px;top:734.20px;font-size:15.00px;color:#d8d8d8;">102</div>
<div class="a" style="left:358.5px;top:777px;width:250px;height:2px;background:#8a8a8a;"></div>
<div class="a" style="left:353.5px;top:777px;width:5px;height:2px;background:#d8d8d8;"></div>
<div class="t" style="left:327.97px;top:770.50px;font-size:15.00px;color:#d8d8d8;">100</div>
<div class="a" style="left:358.5px;top:813px;width:250px;height:2px;background:#8a8a8a;"></div>
<div class="a" style="left:353.5px;top:813px;width:5px;height:2px;background:#d8d8d8;"></div>
<div class="t" style="left:336.31px;top:806.80px;font-size:15.00px;color:#d8d8d8;">98</div>
<div class="a" style="left:358.5px;top:850px;width:250px;height:2px;background:#8a8a8a;"></div>
<div class="a" style="left:353.5px;top:850px;width:5px;height:2px;background:#d8d8d8;"></div>
<div class="t" style="left:336.31px;top:843.10px;font-size:15.00px;color:#d8d8d8;">96</div>
<div class="a" style="left:358px;top:867.5px;width:2px;height:6px;background:#d8d8d8;"></div>
<div class="a" style="left:606px;top:867.5px;width:2px;height:6px;background:#d8d8d8;"></div>
<div class="t" style="left:463.41px;top:871.80px;font-size:15.00px;color:#d8d8d8;">100W</div>
<div class="a" style="left:382.5px;top:813.5px;width:67px;height:54px;box-sizing:border-box;border:1.5px solid #000;border-bottom:none;background:linear-gradient(#ff5050,#ff4545);"></div>
<div class="a" style="left:448px;top:766px;width:67.5px;height:101.5px;box-sizing:border-box;border:1.5px solid #000;border-bottom:none;background:linear-gradient(#58ac58,#40a040);"></div>
<div class="a" style="left:514px;top:775.5px;width:68px;height:92px;box-sizing:border-box;border:1.5px solid #000;border-bottom:none;background:linear-gradient(#5a5aff,#4040ff);"></div>
<div class="t" style="left:770.37px;top:661.15px;font-size:14.00px;color:#d0d0d0;">CIE 1931 xy</div>
<div class="a" style="left:638px;top:678px;width:342px;height:199px;background:#999;"></div>
<svg class="a fb" style="left:639px;top:679px;" width="340" height="197" shape-rendering="crispEdges"><rect x="0" y="0" fill="#75ffdb"/><rect x="10" y="0" fill="#7dffdb"/><rect x="20" y="0" fill="#85ffdb"/><rect x="30" y="0" fill="#8cffda"/><rect x="40" y="0" fill="#93ffda"/><rect x="50" y="0" fill="#99ffda"/><rect x="60" y="0" fill="#a0ffda"/><rect x="70" y="0" fill="#a6ffd9"/><rect x="80" y="0" fill="#acffd9"/><rect x="90" y="0" fill="#b2ffd9"/><rect x="100" y="0" fill="#b7ffd8"/><rect x="110" y="0" fill="#bdffd8"/><rect x="120" y="0" fill="#c2ffd8"/><rect x="130" y="0" fill="#c8ffd7"/><rect x="140" y="0" fill="#cdffd7"/><rect x="150" y="0" fill="#d2ffd7"/><rect x="160" y="0" fill="#d7ffd6"/><rect x="170" y="0" fill="#ddffd6"/><rect x="180" y="0" fill="#e2ffd6"/><rect x="190" y="0" fill="#e7ffd5"/><rect x="200" y="0" fill="#ebffd5"/><rect x="210" y="0" fill="#f0ffd4"/><rect x="220" y="0" fill="#f5ffd4"/><rect x="230" y="0" fill="#faffd4"/><rect x="240" y="0" fill="#fffed3"/><rect x="250" y="0" fill="#fff9cf"/><rect x="260" y="0" fill="#fff5cb"/><rect x="270" y="0" fill="#fff1c7"/><rect x="280" y="0" fill="#ffedc3"/><rect x="290" y="0" fill="#ffe9bf"/><rect x="300" y="0" fill="#ffe5bb"/><rect x="310" y="0" fill="#ffe1b8"/><rect x="320" y="0" fill="#ffddb5"/><rect x="330" y="0" fill="#ffdab1"/><rect x="0" y="10" fill="#79ffdf"/><rect x="10" y="10" fill="#81ffdf"/><rect x="20" y="10" fill="#89ffde"/><rect x="30" y="10" fill="#90ffde"/><rect x="40" y="10" fill="#96ffde"/><rect x="50" y="10" fill="#9dffde"/><rect x="60" y="10" fill="#a3ffdd"/><rect x="70" y="10" fill="#a9ffdd"/><rect x="80" y="10" fill="#afffdd"/><rect x="90" y="10" fill="#b5ffdc"/><rect x="100" y="10" fill="#bbffdc"/><rect x="110" y="10" fill="#c0ffdc"/><rect x="120" y="10" fill="#c6ffdc"/><rect x="130" y="10" fill="#cbffdb"/><rect x="140" y="10" fill="#d1ffdb"/><rect x="150" y="10" fill="#d6ffdb"/><rect x="160" y="10" fill="#dbffda"/><rect x="170" y="10" fill="#e0ffda"/><rect x="180" y="10" fill="#e5ffda"/><rect x="190" y="10" fill="#eaffd9"/><rect x="200" y="10" fill="#efffd9"/><rect x="210" y="10" fill="#f4ffd9"/><rect x="220" y="10" fill="#f9ffd8"/><rect x="230" y="10" fill="#feffd8"/><rect x="240" y="10" fill="#fffad4"/><rect x="250" y="10" fill="#fff6d0"/><rect x="260" y="10" fill="#fff1cc"/><rect x="270" y="10" fill="#ffedc8"/><rect x="280" y="10" fill="#ffe9c4"/><rect x="290" y="10" fill="#ffe5c0"/><rect x="300" y="10" fill="#ffe1bd"/><rect x="310" y="10" fill="#ffdeb9"/><rect x="320" y="10" fill="#ffdab6"/><rect x="330" y="10" fill="#ffd7b3"/><rect x="0" y="20" fill="#7dffe2"/><rect x="10" y="20" fill="#85ffe2"/><rect x="20" y="20" fill="#8cffe2"/><rect x="30" y="20" fill="#93ffe2"/><rect x="40" y="20" fill="#9affe1"/><rect x="50" y="20" fill="#a1ffe1"/><rect x="60" y="20" fill="#a7ffe1"/><rect x="70" y="20" fill="#adffe1"/><rect x="80" y="20" fill="#b3ffe1"/><rect x="90" y="20" fill="#b9ffe0"/><rect x="100" y="20" fill="#beffe0"/><rect x="110" y="20" fill="#c4ffe0"/><rect x="120" y="20" fill="#caffdf"/><rect x="130" y="20" fill="#cfffdf"/><rect x="140" y="20" fill="#d4ffdf"/><rect x="150" y="20" fill="#daffdf"/><rect x="160" y="20" fill="#dfffde"/><rect x="170" y="20" fill="#e4ffde"/><rect x="180" y="20" fill="#e9ffde"/><rect x="190" y="20" fill="#eeffdd"/><rect x="200" y="20" fill="#f3ffdd"/><rect x="210" y="20" fill="#f8ffdd"/><rect x="220" y="20" fill="#fdffdd"/><rect x="230" y="20" fill="#fffbd9"/><rect x="240" y="20" fill="#fff6d5"/><rect x="250" y="20" fill="#fff2d1"/><rect x="260" y="20" fill="#ffeecd"/><rect x="270" y="20" fill="#ffe9c9"/><rect x="280" y="20" fill="#ffe5c5"/><rect x="290" y="20" fill="#ffe2c1"/><rect x="300" y="20" fill="#ffdebe"/><rect x="310" y="20" fill="#ffdaba"/><rect x="320" y="20" fill="#ffd7b7"/><rect x="330" y="20" fill="#ffd3b4"/><rect x="0" y="30" fill="#81ffe6"/><rect x="10" y="30" fill="#89ffe6"/><rect x="20" y="30" fill="#90ffe6"/><rect x="30" y="30" fill="#97ffe5"/><rect x="40" y="30" fill="#9effe5"/><rect x="50" y="30" fill="#a4ffe5"/><rect x="60" y="30" fill="#aaffe5"/><rect x="70" y="30" fill="#b1ffe5"/><rect x="80" y="30" fill="#b7ffe4"/><rect x="90" y="30" fill="#bcffe4"/><rect x="100" y="30" fill="#c2ffe4"/><rect x="110" y="30" fill="#c8ffe4"/><rect x="120" y="30" fill="#cdffe3"/><rect x="130" y="30" fill="#d3ffe3"/><rect x="140" y="30" fill="#d8ffe3"/><rect x="150" y="30" fill="#ddffe3"/><rect x="160" y="30" fill="#e3ffe3"/><rect x="170" y="30" fill="#e8ffe2"/><rect x="180" y="30" fill="#edffe2"/><rect x="190" y="30" fill="#f2ffe2"/><rect x="200" y="30" fill="#f7ffe1"/><rect x="210" y="30" fill="#fcffe1"/><rect x="220" y="30" fill="#fffcdf"/><rect x="230" y="30" fill="#fff7da"/><rect x="240" y="30" fill="#fff3d6"/><rect x="250" y="30" fill="#ffeed2"/><rect x="260" y="30" fill="#ffeace"/><rect x="270" y="30" fill="#ffe6ca"/><rect x="280" y="30" fill="#ffe2c6"/><rect x="290" y="30" fill="#ffdec2"/><rect x="300" y="30" fill="#ffdabf"/><rect x="310" y="30" fill="#ffd7bb"/><rect x="320" y="30" fill="#ffd3b8"/><rect x="330" y="30" fill="#ffd0b5"/><rect x="0" y="40" fill="#85ffea"/><rect x="10" y="40" fill="#8dffea"/><rect x="20" y="40" fill="#94ffe9"/><rect x="30" y="40" fill="#9bffe9"/><rect x="40" y="40" fill="#a1ffe9"/><rect x="50" y="40" fill="#a8ffe9"/><rect x="60" y="40" fill="#aeffe9"/><rect x="70" y="40" fill="#b4ffe9"/><rect x="80" y="40" fill="#baffe8"/><rect x="90" y="40" fill="#c0ffe8"/><rect x="100" y="40" fill="#c6ffe8"/><rect x="110" y="40" fill="#cbffe8"/><rect x="120" y="40" fill="#d1ffe8"/><rect x="130" y="40" fill="#d6ffe7"/><rect x="140" y="40" fill="#dcffe7"/><rect x="150" y="40" fill="#e1ffe7"/><rect x="160" y="40" fill="#e6ffe7"/><rect x="170" y="40" fill="#ecffe7"/><rect x="180" y="40" fill="#f1ffe6"/><rect x="190" y="40" fill="#f6ffe6"/><rect x="200" y="40" fill="#fbffe6"/><rect x="210" y="40" fill="#fffde4"/><rect x="220" y="40" fill="#fff8df"/><rect x="230" y="40" fill="#fff3db"/><rect x="240" y="40" fill="#ffefd7"/><rect x="250" y="40" fill="#ffead3"/><rect x="260" y="40" fill="#ffe6cf"/><rect x="270" y="40" fill="#ffe2cb"/><rect x="280" y="40" fill="#ffdec7"/><rect x="290" y="40" fill="#ffdbc3"/><rect x="300" y="40" fill="#ffd7c0"/><rect x="310" y="40" fill="#ffd3bd"/><rect x="320" y="40" fill="#ffd0b9"/><rect x="330" y="40" fill="#ffcdb6"/><rect x="0" y="50" fill="#89ffed"/><rect x="10" y="50" fill="#90ffed"/><rect x="20" y="50" fill="#98ffed"/><rect x="30" y="50" fill="#9effed"/><rect x="40" y="50" fill="#a5ffed"/><rect x="50" y="50" fill="#acffed"/><rect x="60" y="50" fill="#b2ffed"/><rect x="70" y="50" fill="#b8ffec"/><rect x="80" y="50" fill="#beffec"/><rect x="90" y="50" fill="#c4ffec"/><rect x="100" y="50" fill="#caffec"/><rect x="110" y="50" fill="#cfffec"/><rect x="120" y="50" fill="#d5ffec"/><rect x="130" y="50" fill="#daffec"/><rect x="140" y="50" fill="#e0ffeb"/><rect x="150" y="50" fill="#e5ffeb"/><rect x="160" y="50" fill="#eaffeb"/><rect x="170" y="50" fill="#f0ffeb"/><rect x="180" y="50" fill="#f5ffeb"/><rect x="190" y="50" fill="#faffea"/><rect x="200" y="50" fill="#fffeea"/><rect x="210" y="50" fill="#fff9e5"/><rect x="220" y="50" fill="#fff4e0"/><rect x="230" y="50" fill="#ffefdc"/><rect x="240" y="50" fill="#ffebd8"/><rect x="250" y="50" fill="#ffe7d3"/><rect x="260" y="50" fill="#ffe3d0"/><rect x="270" y="50" fill="#ffdfcc"/><rect x="280" y="50" fill="#ffdbc8"/><rect x="290" y="50" fill="#ffd7c4"/><rect x="300" y="50" fill="#ffd4c1"/><rect x="310" y="50" fill="#ffd0be"/><rect x="320" y="50" fill="#ffcdba"/><rect x="330" y="50" fill="#ffcab7"/><rect x="0" y="60" fill="#8dfff1"/><rect x="10" y="60" fill="#94fff1"/><rect x="20" y="60" fill="#9bfff1"/><rect x="30" y="60" fill="#a2fff1"/><rect x="40" y="60" fill="#a9fff1"/><rect x="50" y="60" fill="#affff1"/><rect x="60" y="60" fill="#b6fff1"/><rect x="70" y="60" fill="#bcfff1"/><rect x="80" y="60" fill="#c2fff0"/><rect x="90" y="60" fill="#c8fff0"/><rect x="100" y="60" fill="#cdfff0"/><rect x="110" y="60" fill="#d3fff0"/><rect x="120" y="60" fill="#d9fff0"/><rect x="130" y="60" fill="#defff0"/><rect x="140" y="60" fill="#e4fff0"/><rect x="150" y="60" fill="#e9fff0"/><rect x="160" y="60" fill="#eeffef"/><rect x="170" y="60" fill="#f4ffef"/><rect x="180" y="60" fill="#f9ffef"/><rect x="190" y="60" fill="#feffef"/><rect x="200" y="60" fill="#fffaea"/><rect x="210" y="60" fill="#fff5e5"/><rect x="220" y="60" fill="#fff0e1"/><rect x="230" y="60" fill="#ffebdd"/><rect x="240" y="60" fill="#ffe7d8"/><rect x="250" y="60" fill="#ffe3d4"/><rect x="260" y="60" fill="#ffdfd0"/><rect x="270" y="60" fill="#ffdbcd"/><rect x="280" y="60" fill="#ffd7c9"/><rect x="290" y="60" fill="#ffd4c5"/><rect x="300" y="60" fill="#ffd0c2"/><rect x="310" y="60" fill="#ffcdbf"/><rect x="320" y="60" fill="#ffc9bc"/><rect x="330" y="60" fill="#ffc6b8"/><rect x="0" y="70" fill="#91fff5"/><rect x="10" y="70" fill="#98fff5"/><rect x="20" y="70" fill="#9ffff5"/><rect x="30" y="70" fill="#a6fff5"/><rect x="40" y="70" fill="#adfff5"/><rect x="50" y="70" fill="#b3fff5"/><rect x="60" y="70" fill="#b9fff5"/><rect x="70" y="70" fill="#c0fff5"/><rect x="80" y="70" fill="#c6fff5"/><rect x="90" y="70" fill="#cbfff5"/><rect x="100" y="70" fill="#d1fff4"/><rect x="110" y="70" fill="#d7fff4"/><rect x="120" y="70" fill="#ddfff4"/><rect x="130" y="70" fill="#e2fff4"/><rect x="140" y="70" fill="#e8fff4"/><rect x="150" y="70" fill="#edfff4"/><rect x="160" y="70" fill="#f3fff4"/><rect x="170" y="70" fill="#f8fff4"/><rect x="180" y="70" fill="#fdfff4"/><rect x="190" y="70" fill="#fffaf0"/><rect x="200" y="70" fill="#fff5eb"/><rect x="210" y="70" fill="#fff1e6"/><rect x="220" y="70" fill="#ffece2"/><rect x="230" y="70" fill="#ffe8dd"/><rect x="240" y="70" fill="#ffe3d9"/><rect x="250" y="70" fill="#ffdfd5"/><rect x="260" y="70" fill="#ffdbd1"/><rect x="270" y="70" fill="#ffd7ce"/><rect x="280" y="70" fill="#ffd4ca"/><rect x="290" y="70" fill="#ffd0c6"/><rect x="300" y="70" fill="#ffcdc3"/><rect x="310" y="70" fill="#ffc9c0"/><rect x="320" y="70" fill="#ffc6bd"/><rect x="330" y="70" fill="#ffc3b9"/><rect x="0" y="80" fill="#95fff9"/><rect x="10" y="80" fill="#9cfff9"/><rect x="20" y="80" fill="#a3fff9"/><rect x="30" y="80" fill="#aafff9"/><rect x="40" y="80" fill="#b1fff9"/><rect x="50" y="80" fill="#b7fff9"/><rect x="60" y="80" fill="#bdfff9"/><rect x="70" y="80" fill="#c3fff9"/><rect x="80" y="80" fill="#c9fff9"/><rect x="90" y="80" fill="#cffff9"/><rect x="100" y="80" fill="#d5fff9"/><rect x="110" y="80" fill="#dbfff9"/><rect x="120" y="80" fill="#e1fff9"/><rect x="130" y="80" fill="#e6fff9"/><rect x="140" y="80" fill="#ecfff9"/><rect x="150" y="80" fill="#f1fff9"/><rect x="160" y="80" fill="#f7fff9"/><rect x="170" y="80" fill="#fcfff9"/><rect x="180" y="80" fill="#fffbf5"/><rect x="190" y="80" fill="#fff6f0"/><rect x="200" y="80" fill="#fff1eb"/><rect x="210" y="80" fill="#ffede7"/><rect x="220" y="80" fill="#ffe8e2"/><rect x="230" y="80" fill="#ffe4de"/><rect x="240" y="80" fill="#ffe0da"/><rect x="250" y="80" fill="#ffdbd6"/><rect x="260" y="80" fill="#ffd8d2"/><rect x="270" y="80" fill="#ffd4ce"/><rect x="280" y="80" fill="#ffd0cb"/><rect x="290" y="80" fill="#ffcdc7"/><rect x="300" y="80" fill="#ffc9c4"/><rect x="310" y="80" fill="#ffc6c1"/><rect x="320" y="80" fill="#ffc3be"/><rect x="330" y="80" fill="#ffc0bb"/><rect x="0" y="90" fill="#99fffd"/><rect x="10" y="90" fill="#a0fffd"/><rect x="20" y="90" fill="#a7fffd"/><rect x="30" y="90" fill="#aefffd"/><rect x="40" y="90" fill="#b4fffd"/><rect x="50" y="90" fill="#bbfffd"/><rect x="60" y="90" fill="#c1fffd"/><rect x="70" y="90" fill="#c7fffd"/><rect x="80" y="90" fill="#cdfffd"/><rect x="90" y="90" fill="#d3fffd"/><rect x="100" y="90" fill="#d9fffd"/><rect x="110" y="90" fill="#dffffd"/><rect x="120" y="90" fill="#e5fffd"/><rect x="130" y="90" fill="#ebfffd"/><rect x="140" y="90" fill="#f0fffd"/><rect x="150" y="90" fill="#f6fffd"/><rect x="160" y="90" fill="#fbfffd"/><rect x="170" y="90" fill="#fffcfb"/><rect x="180" y="90" fill="#fff7f6"/><rect x="190" y="90" fill="#fff2f1"/><rect x="200" y="90" fill="#ffedec"/><rect x="210" y="90" fill="#ffe9e7"/><rect x="220" y="90" fill="#ffe4e3"/><rect x="230" y="90" fill="#ffe0df"/><rect x="240" y="90" fill="#ffdcdb"/><rect x="250" y="90" fill="#ffd8d7"/><rect x="260" y="90" fill="#ffd4d3"/><rect x="270" y="90" fill="#ffd0cf"/><rect x="280" y="90" fill="#ffcdcc"/><rect x="290" y="90" fill="#ffc9c8"/><rect x="300" y="90" fill="#ffc6c5"/><rect x="310" y="90" fill="#ffc3c2"/><rect x="320" y="90" fill="#ffc0bf"/><rect x="330" y="90" fill="#ffbcbc"/><rect x="0" y="100" fill="#9bfbff"/><rect x="10" y="100" fill="#a2fbff"/><rect x="20" y="100" fill="#a9fbff"/><rect x="30" y="100" fill="#b0fbff"/><rect x="40" y="100" fill="#b6fbff"/><rect x="50" y="100" fill="#bdfbff"/><rect x="60" y="100" fill="#c3fbff"/><rect x="70" y="100" fill="#c9fbff"/><rect x="80" y="100" fill="#cffbff"/><rect x="90" y="100" fill="#d5fbff"/><rect x="100" y="100" fill="#dbfbff"/><rect x="110" y="100" fill="#e0fbff"/><rect x="120" y="100" fill="#e6fbff"/><rect x="130" y="100" fill="#ecfbff"/><rect x="140" y="100" fill="#f1fbff"/><rect x="150" y="100" fill="#f7fbff"/><rect x="160" y="100" fill="#fcfbff"/><rect x="170" y="100" fill="#fff8fb"/><rect x="180" y="100" fill="#fff3f6"/><rect x="190" y="100" fill="#ffeef1"/><rect x="200" y="100" fill="#ffe9ed"/><rect x="210" y="100" fill="#ffe5e8"/><rect x="220" y="100" fill="#ffe0e4"/><rect x="230" y="100" fill="#ffdce0"/><rect x="240" y="100" fill="#ffd8db"/><rect x="250" y="100" fill="#ffd4d8"/><rect x="260" y="100" fill="#ffd0d4"/><rect x="270" y="100" fill="#ffcdd0"/><rect x="280" y="100" fill="#ffc9cd"/><rect x="290" y="100" fill="#ffc6c9"/><rect x="300" y="100" fill="#ffc3c6"/><rect x="310" y="100" fill="#ffbfc3"/><rect x="320" y="100" fill="#ffbcc0"/><rect x="330" y="100" fill="#ffb9bd"/><rect x="0" y="110" fill="#9cf7ff"/><rect x="10" y="110" fill="#a3f7ff"/><rect x="20" y="110" fill="#aaf7ff"/><rect x="30" y="110" fill="#b1f7ff"/><rect x="40" y="110" fill="#b7f7ff"/><rect x="50" y="110" fill="#bdf7ff"/><rect x="60" y="110" fill="#c3f7ff"/><rect x="70" y="110" fill="#c9f7ff"/><rect x="80" y="110" fill="#cff7ff"/><rect x="90" y="110" fill="#d5f7ff"/><rect x="100" y="110" fill="#dbf7ff"/><rect x="110" y="110" fill="#e0f7ff"/><rect x="120" y="110" fill="#e6f6ff"/><rect x="130" y="110" fill="#ecf6ff"/><rect x="140" y="110" fill="#f1f6ff"/><rect x="150" y="110" fill="#f6f6ff"/><rect x="160" y="110" fill="#fcf6ff"/><rect x="170" y="110" fill="#fff3fc"/><rect x="180" y="110" fill="#ffeef7"/><rect x="190" y="110" fill="#ffeaf2"/><rect x="200" y="110" fill="#ffe5ed"/><rect x="210" y="110" fill="#ffe1e9"/><rect x="220" y="110" fill="#ffdce4"/><rect x="230" y="110" fill="#ffd8e0"/><rect x="240" y="110" fill="#ffd4dc"/><rect x="250" y="110" fill="#ffd0d8"/><rect x="260" y="110" fill="#ffcdd5"/><rect x="270" y="110" fill="#ffc9d1"/><rect x="280" y="110" fill="#ffc6ce"/><rect x="290" y="110" fill="#ffc2ca"/><rect x="300" y="110" fill="#ffbfc7"/><rect x="310" y="110" fill="#ffbcc4"/><rect x="320" y="110" fill="#ffb9c1"/><rect x="330" y="110" fill="#ffb6be"/><rect x="0" y="120" fill="#9ef3ff"/><rect x="10" y="120" fill="#a5f3ff"/><rect x="20" y="120" fill="#abf3ff"/><rect x="30" y="120" fill="#b2f3ff"/><rect x="40" y="120" fill="#b8f3ff"/><rect x="50" y="120" fill="#bef3ff"/><rect x="60" y="120" fill="#c4f3ff"/><rect x="70" y="120" fill="#caf3ff"/><rect x="80" y="120" fill="#d0f2ff"/><rect x="90" y="120" fill="#d5f2ff"/><rect x="100" y="120" fill="#dbf2ff"/><rect x="110" y="120" fill="#e1f2ff"/><rect x="120" y="120" fill="#e6f2ff"/><rect x="130" y="120" fill="#ecf2ff"/><rect x="140" y="120" fill="#f1f2ff"/><rect x="150" y="120" fill="#f6f1ff"/><rect x="160" y="120" fill="#fcf1ff"/><rect x="170" y="120" fill="#ffeffc"/><rect x="180" y="120" fill="#ffeaf7"/><rect x="190" y="120" fill="#ffe5f2"/><rect x="200" y="120" fill="#ffe1ee"/><rect x="210" y="120" fill="#ffdde9"/><rect x="220" y="120" fill="#ffd8e5"/><rect x="230" y="120" fill="#ffd4e1"/><rect x="240" y="120" fill="#ffd0dd"/><rect x="250" y="120" fill="#ffcdd9"/><rect x="260" y="120" fill="#ffc9d5"/><rect x="270" y="120" fill="#ffc6d2"/><rect x="280" y="120" fill="#ffc2ce"/><rect x="290" y="120" fill="#ffbfcb"/><rect x="300" y="120" fill="#ffbcc8"/><rect x="310" y="120" fill="#ffb9c5"/><rect x="320" y="120" fill="#ffb5c2"/><rect x="330" y="120" fill="#ffb3bf"/><rect x="0" y="130" fill="#9fefff"/><rect x="10" y="130" fill="#a6efff"/><rect x="20" y="130" fill="#acefff"/><rect x="30" y="130" fill="#b3efff"/><rect x="40" y="130" fill="#b9efff"/><rect x="50" y="130" fill="#bfefff"/><rect x="60" y="130" fill="#c5eeff"/><rect x="70" y="130" fill="#caeeff"/><rect x="80" y="130" fill="#d0eeff"/><rect x="90" y="130" fill="#d6eeff"/><rect x="100" y="130" fill="#dbeeff"/><rect x="110" y="130" fill="#e1eeff"/><rect x="120" y="130" fill="#e6edff"/><rect x="130" y="130" fill="#ebedff"/><rect x="140" y="130" fill="#f1edff"/><rect x="150" y="130" fill="#f6edff"/><rect x="160" y="130" fill="#fbedff"/><rect x="170" y="130" fill="#ffebfd"/><rect x="180" y="130" fill="#ffe6f8"/><rect x="190" y="130" fill="#ffe1f3"/><rect x="200" y="130" fill="#ffddee"/><rect x="210" y="130" fill="#ffd9ea"/><rect x="220" y="130" fill="#ffd4e6"/><rect x="230" y="130" fill="#ffd0e2"/><rect x="240" y="130" fill="#ffcdde"/><rect x="250" y="130" fill="#ffc9da"/><rect x="260" y="130" fill="#ffc5d6"/><rect x="270" y="130" fill="#ffc2d3"/><rect x="280" y="130" fill="#ffbfcf"/><rect x="290" y="130" fill="#ffbbcc"/><rect x="300" y="130" fill="#ffb8c9"/><rect x="310" y="130" fill="#ffb5c5"/><rect x="320" y="130" fill="#ffb2c2"/><rect x="330" y="130" fill="#ffafbf"/><rect x="0" y="140" fill="#a0ebff"/><rect x="10" y="140" fill="#a7ebff"/><rect x="20" y="140" fill="#adebff"/><rect x="30" y="140" fill="#b4ebff"/><rect x="40" y="140" fill="#baeaff"/><rect x="50" y="140" fill="#bfeaff"/><rect x="60" y="140" fill="#c5eaff"/><rect x="70" y="140" fill="#cbeaff"/><rect x="80" y="140" fill="#d1eaff"/><rect x="90" y="140" fill="#d6eaff"/><rect x="100" y="140" fill="#dbe9ff"/><rect x="110" y="140" fill="#e1e9ff"/><rect x="120" y="140" fill="#e6e9ff"/><rect x="130" y="140" fill="#ebe9ff"/><rect x="140" y="140" fill="#f1e8ff"/><rect x="150" y="140" fill="#f6e8ff"/><rect x="160" y="140" fill="#fbe8ff"/><rect x="170" y="140" fill="#ffe6fd"/><rect x="180" y="140" fill="#ffe2f8"/><rect x="190" y="140" fill="#ffddf3"/><rect x="200" y="140" fill="#ffd9ef"/><rect x="210" y="140" fill="#ffd5ea"/><rect x="220" y="140" fill="#ffd1e6"/><rect x="230" y="140" fill="#ffcde2"/><rect x="240" y="140" fill="#ffc9de"/><rect x="250" y="140" fill="#ffc5db"/><rect x="260" y="140" fill="#ffc2d7"/><rect x="270" y="140" fill="#ffbed3"/><rect x="280" y="140" fill="#ffbbd0"/><rect x="290" y="140" fill="#ffb8cd"/><rect x="300" y="140" fill="#ffb5c9"/><rect x="310" y="140" fill="#ffb2c6"/><rect x="320" y="140" fill="#ffafc3"/><rect x="330" y="140" fill="#ffacc0"/><rect x="0" y="150" fill="#a2e7ff"/><rect x="10" y="150" fill="#a8e7ff"/><rect x="20" y="150" fill="#aee7ff"/><rect x="30" y="150" fill="#b4e7ff"/><rect x="40" y="150" fill="#bae6ff"/><rect x="50" y="150" fill="#c0e6ff"/><rect x="60" y="150" fill="#c6e6ff"/><rect x="70" y="150" fill="#cbe6ff"/><rect x="80" y="150" fill="#d1e5ff"/><rect x="90" y="150" fill="#d6e5ff"/><rect x="100" y="150" fill="#dce5ff"/><rect x="110" y="150" fill="#e1e5ff"/><rect x="120" y="150" fill="#e6e4ff"/><rect x="130" y="150" fill="#ebe4ff"/><rect x="140" y="150" fill="#f1e4ff"/><rect x="150" y="150" fill="#f6e4ff"/><rect x="160" y="150" fill="#fbe3ff"/><rect x="170" y="150" fill="#ffe2fd"/><rect x="180" y="150" fill="#ffddf8"/><rect x="190" y="150" fill="#ffd9f4"/><rect x="200" y="150" fill="#ffd5ef"/><rect x="210" y="150" fill="#ffd1eb"/><rect x="220" y="150" fill="#ffcde7"/><rect x="230" y="150" fill="#ffc9e3"/><rect x="240" y="150" fill="#ffc5df"/><rect x="250" y="150" fill="#ffc2db"/><rect x="260" y="150" fill="#ffbed8"/><rect x="270" y="150" fill="#ffbbd4"/><rect x="280" y="150" fill="#ffb7d1"/><rect x="290" y="150" fill="#ffb4cd"/><rect x="300" y="150" fill="#ffb1ca"/><rect x="310" y="150" fill="#ffaec7"/><rect x="320" y="150" fill="#ffabc4"/><rect x="330" y="150" fill="#ffa8c1"/><rect x="0" y="160" fill="#a3e3ff"/><rect x="10" y="160" fill="#a9e3ff"/><rect x="20" y="160" fill="#afe3ff"/><rect x="30" y="160" fill="#b5e3ff"/><rect x="40" y="160" fill="#bbe2ff"/><rect x="50" y="160" fill="#c1e2ff"/><rect x="60" y="160" fill="#c6e2ff"/><rect x="70" y="160" fill="#cce1ff"/><rect x="80" y="160" fill="#d1e1ff"/><rect x="90" y="160" fill="#d7e1ff"/><rect x="100" y="160" fill="#dce1ff"/><rect x="110" y="160" fill="#e1e0ff"/><rect x="120" y="160" fill="#e6e0ff"/><rect x="130" y="160" fill="#ebe0ff"/><rect x="140" y="160" fill="#f0dfff"/><rect x="150" y="160" fill="#f5dfff"/><rect x="160" y="160" fill="#fadfff"/><rect x="170" y="160" fill="#ffdefe"/><rect x="180" y="160" fill="#ffd9f9"/><rect x="190" y="160" fill="#ffd5f4"/><rect x="200" y="160" fill="#ffd1f0"/><rect x="210" y="160" fill="#ffcdeb"/><rect x="220" y="160" fill="#ffc9e7"/><rect x="230" y="160" fill="#ffc5e3"/><rect x="240" y="160" fill="#ffc1e0"/><rect x="250" y="160" fill="#ffbedc"/><rect x="260" y="160" fill="#ffbad8"/><rect x="270" y="160" fill="#ffb7d5"/><rect x="280" y="160" fill="#ffb4d2"/><rect x="290" y="160" fill="#ffb1ce"/><rect x="300" y="160" fill="#ffaecb"/><rect x="310" y="160" fill="#ffabc8"/><rect x="320" y="160" fill="#ffa8c5"/><rect x="330" y="160" fill="#ffa5c2"/><rect x="0" y="170" fill="#a4dfff"/><rect x="10" y="170" fill="#aadfff"/><rect x="20" y="170" fill="#b0dfff"/><rect x="30" y="170" fill="#b6deff"/><rect x="40" y="170" fill="#bcdeff"/><rect x="50" y="170" fill="#c1deff"/><rect x="60" y="170" fill="#c7deff"/><rect x="70" y="170" fill="#ccddff"/><rect x="80" y="170" fill="#d2ddff"/><rect x="90" y="170" fill="#d7ddff"/><rect x="100" y="170" fill="#dcdcff"/><rect x="110" y="170" fill="#e1dcff"/><rect x="120" y="170" fill="#e6dcff"/><rect x="130" y="170" fill="#ebdbff"/><rect x="140" y="170" fill="#f0dbff"/><rect x="150" y="170" fill="#f5dbff"/><rect x="160" y="170" fill="#fadaff"/><rect x="170" y="170" fill="#ffd9fe"/><rect x="180" y="170" fill="#ffd5f9"/><rect x="190" y="170" fill="#ffd1f5"/><rect x="200" y="170" fill="#ffcdf0"/><rect x="210" y="170" fill="#ffc9ec"/><rect x="220" y="170" fill="#ffc5e8"/><rect x="230" y="170" fill="#ffc1e4"/><rect x="240" y="170" fill="#ffbee0"/><rect x="250" y="170" fill="#ffbadd"/><rect x="260" y="170" fill="#ffb7d9"/><rect x="270" y="170" fill="#ffb3d6"/><rect x="280" y="170" fill="#ffb0d2"/><rect x="290" y="170" fill="#ffadcf"/><rect x="300" y="170" fill="#ffaacc"/><rect x="310" y="170" fill="#ffa7c9"/><rect x="320" y="170" fill="#ffa4c6"/><rect x="330" y="170" fill="#ffa2c3"/><rect x="0" y="180" fill="#a5dbff"/><rect x="10" y="180" fill="#abdbff"/><rect x="20" y="180" fill="#b1dbff"/><rect x="30" y="180" fill="#b7daff"/><rect x="40" y="180" fill="#bcdaff"/><rect x="50" y="180" fill="#c2daff"/><rect x="60" y="180" fill="#c7d9ff"/><rect x="70" y="180" fill="#cdd9ff"/><rect x="80" y="180" fill="#d2d9ff"/><rect x="90" y="180" fill="#d7d8ff"/><rect x="100" y="180" fill="#dcd8ff"/><rect x="110" y="180" fill="#e1d8ff"/><rect x="120" y="180" fill="#e6d7ff"/><rect x="130" y="180" fill="#ebd7ff"/><rect x="140" y="180" fill="#f0d7ff"/><rect x="150" y="180" fill="#f5d6ff"/><rect x="160" y="180" fill="#fad6ff"/><rect x="170" y="180" fill="#ffd5fe"/><rect x="180" y="180" fill="#ffd1fa"/><rect x="190" y="180" fill="#ffcdf5"/><rect x="200" y="180" fill="#ffc9f1"/><rect x="210" y="180" fill="#ffc5ec"/><rect x="220" y="180" fill="#ffc1e8"/><rect x="230" y="180" fill="#ffbde5"/><rect x="240" y="180" fill="#ffbae1"/><rect x="250" y="180" fill="#ffb6dd"/><rect x="260" y="180" fill="#ffb3da"/><rect x="270" y="180" fill="#ffb0d6"/><rect x="280" y="180" fill="#ffadd3"/><rect x="290" y="180" fill="#ffaad0"/><rect x="300" y="180" fill="#ffa7cd"/><rect x="310" y="180" fill="#ffa4ca"/><rect x="320" y="180" fill="#ffa1c7"/><rect x="330" y="180" fill="#ff9ec4"/><rect x="0" y="190" fill="#a6d7ff"/><rect x="10" y="190" fill="#acd7ff"/><rect x="20" y="190" fill="#b2d7ff"/><rect x="30" y="190" fill="#b8d6ff"/><rect x="40" y="190" fill="#bdd6ff"/><rect x="50" y="190" fill="#c3d6ff"/><rect x="60" y="190" fill="#c8d5ff"/><rect x="70" y="190" fill="#cdd5ff"/><rect x="80" y="190" fill="#d2d5ff"/><rect x="90" y="190" fill="#d7d4ff"/><rect x="100" y="190" fill="#dcd4ff"/><rect x="110" y="190" fill="#e1d3ff"/><rect x="120" y="190" fill="#e6d3ff"/><rect x="130" y="190" fill="#ebd3ff"/><rect x="140" y="190" fill="#f0d2ff"/><rect x="150" y="190" fill="#f5d2ff"/><rect x="160" y="190" fill="#fad1ff"/><rect x="170" y="190" fill="#fed1ff"/><rect x="180" y="190" fill="#ffcdfa"/><rect x="190" y="190" fill="#ffc8f5"/><rect x="200" y="190" fill="#ffc4f1"/><rect x="210" y="190" fill="#ffc1ed"/><rect x="220" y="190" fill="#ffbde9"/><rect x="230" y="190" fill="#ffb9e5"/><rect x="240" y="190" fill="#ffb6e1"/><rect x="250" y="190" fill="#ffb2de"/><rect x="260" y="190" fill="#ffafda"/><rect x="270" y="190" fill="#ffacd7"/><rect x="280" y="190" fill="#ffa9d4"/><rect x="290" y="190" fill="#ffa6d1"/><rect x="300" y="190" fill="#ffa3cd"/><rect x="310" y="190" fill="#ffa0ca"/><rect x="320" y="190" fill="#ff9dc8"/><rect x="330" y="190" fill="#ff9bc5"/></svg>
<canvas id="xy" class="a" style="left:639px;top:679px;" width="340" height="197"></canvas>
<div class="a" style="left:800.5px;top:769px;width:15px;height:15px;box-sizing:border-box;border:2px solid #000;background:#fff;"></div>
<div class="a" style="left:773px;top:770px;width:9px;height:9px;border-radius:50%;box-sizing:border-box;border:1px solid #222;background:#bbb;"></div>
<div class="a" style="left:778.5px;top:766.5px;width:9px;height:9px;border-radius:50%;box-sizing:border-box;border:1px solid #222;background:#fff;"></div>
<div class="a" style="left:996px;top:662.5px;width:653px;height:1.5px;background:#000;"></div>
<div class="a" style="left:996px;top:662.5px;width:1.2px;height:224.5px;background:#000;"></div>
<div class="a" style="left:1647.8px;top:662.5px;width:1.6px;height:224.5px;background:#000;"></div>
<div class="a" style="left:997px;top:664px;width:634px;height:16.5px;background:#2e2e2e;"></div>
<div class="a" style="left:997px;top:680.3px;width:634px;height:16.5px;background:#151515;"></div>
<div class="a" style="left:1631px;top:664px;width:16.8px;height:33px;background:#333;"></div>
<div class="a" style="left:997px;top:663px;width:634px;height:204px;overflow:hidden;">
<div class="t" style="left:111.10px;top:9.99px;font-size:17.50px;color:#ececec;transform:scaleX(0.9255);">White</div>
<div class="t" style="left:192.20px;top:9.99px;font-size:17.50px;color:#ececec;transform:scaleX(0.7974);">Red</div>
<div class="t" style="left:256.60px;top:9.99px;font-size:17.50px;color:#ececec;transform:scaleX(0.8717);">Green</div>
<div class="t" style="left:335.70px;top:9.99px;font-size:17.50px;color:#ececec;transform:scaleX(0.8736);">Blue</div>
<div class="t" style="left:407.00px;top:9.99px;font-size:17.50px;color:#ececec;transform:scaleX(0.8322);">Cyan</div>
<div class="t" style="left:467.95px;top:9.99px;font-size:17.50px;color:#ececec;transform:scaleX(0.9060);">Magenta</div>
<div class="t" style="left:550.65px;top:9.99px;font-size:17.50px;color:#ececec;transform:scaleX(0.8949);">Yellow</div>
<div class="t" style="left:630.50px;top:9.99px;font-size:17.50px;color:#ececec;">1</div>
<div class="a" style="left:0px;top:34px;width:634px;height:31px;background:#3a3a3a;"></div>
<div class="t" style="left:13.50px;top:41.34px;font-size:18.50px;color:#f0f0f0;font-weight:bold;transform:scaleX(0.8684);">x: CIE31</div>
<div class="t" style="left:97.60px;top:41.76px;font-size:18.00px;color:#f0f0f0;transform:scaleX(0.9055);">0,3083</div>
<div class="t" style="left:175.30px;top:41.76px;font-size:18.00px;color:#f0f0f0;transform:scaleX(0.9055);">0,6488</div>
<div class="t" style="left:243.80px;top:41.76px;font-size:18.00px;color:#f0f0f0;transform:scaleX(0.9055);">0,3028</div>
<div class="t" style="left:321.00px;top:41.76px;font-size:18.00px;color:#f0f0f0;transform:scaleX(0.9055);">0,1572</div>
<div class="t" style="left:390.00px;top:41.76px;font-size:18.00px;color:#f0f0f0;transform:scaleX(0.9055);">0,2246</div>
<div class="t" style="left:467.70px;top:41.76px;font-size:18.00px;color:#f0f0f0;transform:scaleX(0.9055);">0,3131</div>
<div class="t" style="left:539.00px;top:41.76px;font-size:18.00px;color:#f0f0f0;transform:scaleX(0.9055);">0,4178</div>
<div class="t" style="left:616.80px;top:41.76px;font-size:18.00px;color:#f0f0f0;transform:scaleX(0.9042);">0,3</div>
<div class="a" style="left:0px;top:65px;width:634px;height:31px;background:#858585;"></div>
<div class="t" style="left:13.50px;top:72.34px;font-size:18.50px;color:#f0f0f0;font-weight:bold;transform:scaleX(0.8684);">y: CIE31</div>
<div class="t" style="left:97.60px;top:72.76px;font-size:18.00px;color:#f0f0f0;transform:scaleX(0.9055);">0,3293</div>
<div class="t" style="left:175.30px;top:72.76px;font-size:18.00px;color:#f0f0f0;transform:scaleX(0.9055);">0,3380</div>
<div class="t" style="left:243.80px;top:72.76px;font-size:18.00px;color:#f0f0f0;transform:scaleX(0.9055);">0,6030</div>
<div class="t" style="left:321.00px;top:72.76px;font-size:18.00px;color:#f0f0f0;transform:scaleX(0.9055);">0,0644</div>
<div class="t" style="left:390.00px;top:72.76px;font-size:18.00px;color:#f0f0f0;transform:scaleX(0.9055);">0,3248</div>
<div class="t" style="left:467.70px;top:72.76px;font-size:18.00px;color:#f0f0f0;transform:scaleX(0.9055);">0,1532</div>
<div class="t" style="left:539.00px;top:72.76px;font-size:18.00px;color:#f0f0f0;transform:scaleX(0.9055);">0,5107</div>
<div class="t" style="left:616.80px;top:72.76px;font-size:18.00px;color:#f0f0f0;transform:scaleX(0.9042);">0,3</div>
<div class="a" style="left:0px;top:96px;width:634px;height:31px;background:#3a3a3a;"></div>
<div class="t" style="left:13.50px;top:103.34px;font-size:18.50px;color:#f0f0f0;font-weight:bold;transform:scaleX(0.8509);">Y</div>
<div class="t" style="left:97.60px;top:103.76px;font-size:18.00px;color:#f0f0f0;transform:scaleX(0.9057);">268,8183</div>
<div class="t" style="left:175.30px;top:103.76px;font-size:18.00px;color:#f0f0f0;transform:scaleX(0.9056);">56,1606</div>
<div class="t" style="left:243.80px;top:103.76px;font-size:18.00px;color:#f0f0f0;transform:scaleX(0.9222);">193,1193</div>
<div class="t" style="left:321.00px;top:103.76px;font-size:18.00px;color:#f0f0f0;transform:scaleX(0.9056);">21,9227</div>
<div class="t" style="left:390.00px;top:103.76px;font-size:18.00px;color:#f0f0f0;transform:scaleX(0.9057);">215,7732</div>
<div class="t" style="left:467.70px;top:103.76px;font-size:18.00px;color:#f0f0f0;transform:scaleX(0.9056);">78,6537</div>
<div class="t" style="left:539.00px;top:103.76px;font-size:18.00px;color:#f0f0f0;transform:scaleX(0.9222);">249,5113</div>
<div class="t" style="left:616.80px;top:103.76px;font-size:18.00px;color:#f0f0f0;transform:scaleX(0.9065);">50</div>
<div class="a" style="left:0px;top:127px;width:634px;height:31px;background:#858585;"></div>
<div class="t" style="left:13.50px;top:134.34px;font-size:18.50px;color:#f0f0f0;font-weight:bold;transform:scaleX(0.9265);">Target Y</div>
<div class="t" style="left:97.60px;top:134.76px;font-size:18.00px;color:#f0f0f0;transform:scaleX(0.9057);">265,6666</div>
<div class="t" style="left:175.30px;top:134.76px;font-size:18.00px;color:#f0f0f0;transform:scaleX(0.9056);">56,4956</div>
<div class="t" style="left:243.80px;top:134.76px;font-size:18.00px;color:#f0f0f0;transform:scaleX(0.9057);">189,9937</div>
<div class="t" style="left:321.00px;top:134.76px;font-size:18.00px;color:#f0f0f0;transform:scaleX(0.9056);">19,1773</div>
<div class="t" style="left:390.00px;top:134.76px;font-size:18.00px;color:#f0f0f0;transform:scaleX(0.9057);">209,1710</div>
<div class="t" style="left:467.70px;top:134.76px;font-size:18.00px;color:#f0f0f0;transform:scaleX(0.9056);">75,6729</div>
<div class="t" style="left:539.00px;top:134.76px;font-size:18.00px;color:#f0f0f0;transform:scaleX(0.9057);">246,4893</div>
<div class="t" style="left:616.80px;top:134.76px;font-size:18.00px;color:#f0f0f0;transform:scaleX(0.9065);">50</div>
<div class="a" style="left:0px;top:158px;width:634px;height:31px;background:#3a3a3a;"></div>
<div class="t" style="left:13.50px;top:165.34px;font-size:18.50px;color:#f0f0f0;font-weight:bold;transform:scaleX(0.9147);">&Delta;E 2000</div>
<div class="t" style="left:97.60px;top:165.76px;font-size:18.00px;color:#f0f0f0;transform:scaleX(0.9055);">2,9227</div>
<div class="t" style="left:175.30px;top:165.76px;font-size:18.00px;color:#f0f0f0;transform:scaleX(0.9055);">3,6702</div>
<div class="t" style="left:243.80px;top:165.76px;font-size:18.00px;color:#f0f0f0;transform:scaleX(0.9055);">0,6636</div>
<div class="t" style="left:321.00px;top:165.76px;font-size:18.00px;color:#f0f0f0;transform:scaleX(0.9055);">1,3950</div>
<div class="t" style="left:390.00px;top:165.76px;font-size:18.00px;color:#f0f0f0;transform:scaleX(0.9055);">1,1661</div>
<div class="t" style="left:467.70px;top:165.76px;font-size:18.00px;color:#f0f0f0;transform:scaleX(0.9055);">1,1025</div>
<div class="t" style="left:539.00px;top:165.76px;font-size:18.00px;color:#f0f0f0;transform:scaleX(0.9055);">0,9267</div>
<div class="t" style="left:616.80px;top:165.76px;font-size:18.00px;color:#f0f0f0;transform:scaleX(0.9042);">3,8</div>
<div class="a" style="left:0px;top:189px;width:634px;height:31px;background:#858585;"></div>
<div class="t" style="left:13.50px;top:196.34px;font-size:18.50px;color:#f0f0f0;font-weight:bold;transform:scaleX(0.9571);">&Delta;E ITP</div>
<div class="t" style="left:97.60px;top:196.76px;font-size:18.00px;color:#f0f0f0;transform:scaleX(0.9055);">3,2415</div>
<div class="t" style="left:175.30px;top:196.76px;font-size:18.00px;color:#f0f0f0;transform:scaleX(0.9056);">14,6014</div>
<div class="t" style="left:243.80px;top:196.76px;font-size:18.00px;color:#f0f0f0;transform:scaleX(0.9055);">2,7046</div>
<div class="t" style="left:321.00px;top:196.76px;font-size:18.00px;color:#f0f0f0;transform:scaleX(0.9056);">17,6088</div>
<div class="t" style="left:390.00px;top:196.76px;font-size:18.00px;color:#f0f0f0;transform:scaleX(0.9055);">2,7038</div>
<div class="t" style="left:467.70px;top:196.76px;font-size:18.00px;color:#f0f0f0;transform:scaleX(0.9055);">8,5853</div>
<div class="t" style="left:539.00px;top:196.76px;font-size:18.00px;color:#f0f0f0;transform:scaleX(0.9055);">3,3067</div>
<div class="t" style="left:616.80px;top:196.76px;font-size:18.00px;color:#f0f0f0;transform:scaleX(0.9042);">3,6</div>
</div>
<div class="a" style="left:1631px;top:697px;width:16.8px;height:170px;background:linear-gradient(to right,#6c6c6c,#646464);"></div>
<div class="a" style="left:1632.5px;top:699px;width:13.5px;height:16px;box-sizing:border-box;border:1px solid #8a8a8a;background:#6e6e6e;border-radius:3px;"></div>
<div class="a" style="left:1634px;top:704px;width:0;height:0;border-left:5.5px solid transparent;border-right:5.5px solid transparent;border-bottom:5.5px solid #3a3a3a;"></div>
<div class="a" style="left:1633px;top:719px;width:13px;height:107px;background:#4a4a4a;border-radius:6px;"></div>
<div class="a" style="left:1632.5px;top:849px;width:13.5px;height:16px;box-sizing:border-box;border:1px solid #8a8a8a;background:#6e6e6e;border-radius:3px;"></div>
<div class="a" style="left:1634px;top:854px;width:0;height:0;border-left:5.5px solid transparent;border-right:5.5px solid transparent;border-top:5.5px solid #3a3a3a;"></div>
<div class="a" style="left:997px;top:867px;width:634px;height:19.8px;background:linear-gradient(#6c6c6c,#5e5e5e);"></div>
<div class="a" style="left:1017px;top:869px;width:545px;height:16px;background:#454545;border-radius:8px;"></div>
<div class="a" style="left:999px;top:869px;width:14px;height:16px;box-sizing:border-box;border:1px solid #8a8a8a;background:#6e6e6e;border-radius:3px;"></div>
<div class="a" style="left:1003px;top:872px;width:0;height:0;border-top:5.5px solid transparent;border-bottom:5.5px solid transparent;border-right:5.5px solid #3a3a3a;"></div>
<div class="a" style="left:1615px;top:869px;width:14px;height:16px;box-sizing:border-box;border:1px solid #8a8a8a;background:#6e6e6e;border-radius:3px;"></div>
<div class="a" style="left:1619.5px;top:872px;width:0;height:0;border-top:5.5px solid transparent;border-bottom:5.5px solid transparent;border-left:5.5px solid #3a3a3a;"></div>
<div class="a" style="left:1631px;top:867px;width:16.8px;height:20px;background:#333;"></div>
<div class="a" style="left:1662px;top:38px;width:8px;height:965px;background:linear-gradient(to right,rgba(0,0,0,0),rgba(0,0,0,0.45));"></div>
<div class="a" style="left:2.3px;top:931px;width:155px;height:80px;border-radius:5px;background:linear-gradient(#a6a6a6 0%,#8e8e8e 45%,#6c6c6c 100%);"></div>
<div class="a" style="left:8.6px;top:937px;width:143px;height:45px;border-radius:5px;background:#c0c0c0;box-shadow:inset 0 1px 2px rgba(0,0,0,.5);"></div>
<div class="t" style="left:62.63px;top:988.73px;font-size:14.50px;color:#2c2c2c;font-weight:bold;transform:scaleX(0.8700);">White</div>
<div class="a" style="left:160.3px;top:931px;width:155px;height:80px;border-radius:5px;background:linear-gradient(#a6a6a6 0%,#8e8e8e 45%,#6c6c6c 100%);"></div>
<div class="a" style="left:166.6px;top:937px;width:143px;height:45px;border-radius:5px;background:#c00000;box-shadow:inset 0 1px 2px rgba(0,0,0,.5);"></div>
<div class="t" style="left:225.88px;top:988.73px;font-size:14.50px;color:#2c2c2c;font-weight:bold;transform:scaleX(0.8700);">Red</div>
<div class="a" style="left:318.3px;top:931px;width:155px;height:80px;border-radius:5px;background:linear-gradient(#a6a6a6 0%,#8e8e8e 45%,#6c6c6c 100%);"></div>
<div class="a" style="left:324.6px;top:937px;width:143px;height:45px;border-radius:5px;background:#00c000;box-shadow:inset 0 1px 2px rgba(0,0,0,.5);"></div>
<div class="t" style="left:377.57px;top:988.73px;font-size:14.50px;color:#2c2c2c;font-weight:bold;transform:scaleX(0.8700);">Green</div>
<div class="a" style="left:476.3px;top:931px;width:155px;height:80px;border-radius:5px;background:linear-gradient(#a6a6a6 0%,#8e8e8e 45%,#6c6c6c 100%);"></div>
<div class="a" style="left:482.6px;top:937px;width:143px;height:45px;border-radius:5px;background:#0000c0;box-shadow:inset 0 1px 2px rgba(0,0,0,.5);"></div>
<div class="t" style="left:540.13px;top:988.73px;font-size:14.50px;color:#2c2c2c;font-weight:bold;transform:scaleX(0.8700);">Blue</div>
<div class="a" style="left:634.3px;top:931px;width:155px;height:80px;border-radius:5px;background:linear-gradient(#a6a6a6 0%,#8e8e8e 45%,#6c6c6c 100%);"></div>
<div class="a" style="left:640.6px;top:937px;width:143px;height:45px;border-radius:5px;background:#00c0c0;box-shadow:inset 0 1px 2px rgba(0,0,0,.5);"></div>
<div class="t" style="left:696.38px;top:988.73px;font-size:14.50px;color:#2c2c2c;font-weight:bold;transform:scaleX(0.8700);">Cyan</div>
<div class="a" style="left:792.3px;top:931px;width:155px;height:80px;border-radius:5px;background:linear-gradient(#a6a6a6 0%,#8e8e8e 45%,#6c6c6c 100%);"></div>
<div class="a" style="left:798.6px;top:937px;width:143px;height:45px;border-radius:5px;background:#c000c0;box-shadow:inset 0 1px 2px rgba(0,0,0,.5);"></div>
<div class="t" style="left:844.21px;top:988.73px;font-size:14.50px;color:#2c2c2c;font-weight:bold;transform:scaleX(0.8700);">Magenta</div>
<div class="a" style="left:950.3px;top:931px;width:155px;height:80px;border-radius:5px;background:linear-gradient(#a6a6a6 0%,#8e8e8e 45%,#6c6c6c 100%);"></div>
<div class="a" style="left:956.6px;top:937px;width:143px;height:45px;border-radius:5px;background:#c0c000;box-shadow:inset 0 1px 2px rgba(0,0,0,.5);"></div>
<div class="t" style="left:1008.17px;top:988.73px;font-size:14.50px;color:#2c2c2c;font-weight:bold;transform:scaleX(0.8700);">Yellow</div>
<div class="a" style="left:1108px;top:931px;width:155.5px;height:80px;border-radius:5px;background:linear-gradient(#1c1c1c 0%,#262626 8%,#2e2e2e 100%);"></div>
<div class="a" style="left:1114.5px;top:936.5px;width:143px;height:45.5px;border-radius:5px;background:#fff;"></div>
<div class="t" style="left:1168.95px;top:988.73px;font-size:14.50px;color:#ffffff;font-weight:bold;transform:scaleX(0.9000);">100W</div>
<div class="a" style="left:1267px;top:930.5px;width:60px;height:23px;border-radius:5px 5px 0 0;background:linear-gradient(#a8a8a8,#7c7c7c);"></div>
<div class="a" style="left:1288px;top:933px;width:19px;height:19px;border-radius:50%;background:linear-gradient(#7c7c7c,#a4a4a4);"></div>
<div class="a" style="left:1292px;top:938px;width:0;height:0;border-left:5.5px solid transparent;border-right:5.5px solid transparent;border-bottom:6px solid #2e2e2e;"></div>
<div class="a" style="left:1267px;top:953px;width:60px;height:1.5px;background:#3a3a3a;"></div>
<div class="a" style="left:1267px;top:954.5px;width:60px;height:50px;background:linear-gradient(#8a8a8a,#6a6a6a);"></div>
<div class="a" style="left:1277px;top:961px;width:39.5px;height:38px;border-radius:5px;box-sizing:border-box;border:2.5px solid #1e1e1e;background:linear-gradient(#a8a8a8 0%,#a0a0a0 50%,#8c8c8c 50%,#909090 100%);"></div>
<div class="a" style="left:1289px;top:972px;width:17.5px;height:17.5px;background:linear-gradient(#1c1c1c 0%,#1c1c1c 50%,#000 50%,#000 100%);"></div>
<div class="a" style="left:1328px;top:930px;width:57px;height:38px;border-radius:5px 0 0 0;background:linear-gradient(#b0b0b0 0%,#9a9a9a 40%,#747474 100%);"></div>
<div class="a" style="left:1385px;top:930px;width:1px;height:38px;background:#3c3c3c;"></div>
<div class="a" style="left:1344.5px;top:935px;width:26px;height:26px;border-radius:50%;background:linear-gradient(#7a7a7a,#a8a8a8);"></div>
<div class="a" style="left:1386px;top:930px;width:55.3px;height:38px;border-radius:0;background:linear-gradient(#b0b0b0 0%,#9a9a9a 40%,#747474 100%);"></div>
<div class="a" style="left:1441.3px;top:930px;width:1px;height:38px;background:#3c3c3c;"></div>
<div class="a" style="left:1401.65px;top:935px;width:26px;height:26px;border-radius:50%;background:linear-gradient(#7a7a7a,#a8a8a8);"></div>
<div class="a" style="left:1442.3px;top:930px;width:55.3px;height:38px;border-radius:0;background:linear-gradient(#b0b0b0 0%,#9a9a9a 40%,#747474 100%);"></div>
<div class="a" style="left:1497.6px;top:930px;width:1px;height:38px;background:#3c3c3c;"></div>
<div class="a" style="left:1457.95px;top:935px;width:26px;height:26px;border-radius:50%;background:linear-gradient(#7a7a7a,#a8a8a8);"></div>
<div class="a" style="left:1498.6px;top:930px;width:55.6px;height:38px;border-radius:0;background:linear-gradient(#b0b0b0 0%,#9a9a9a 40%,#747474 100%);"></div>
<div class="a" style="left:1554.2px;top:930px;width:1px;height:38px;background:#3c3c3c;"></div>
<div class="a" style="left:1514.4px;top:935px;width:26px;height:26px;border-radius:50%;background:linear-gradient(#7a7a7a,#a8a8a8);"></div>
<div class="a" style="left:1555.2px;top:930px;width:54.8px;height:38px;border-radius:0;background:linear-gradient(#b0b0b0 0%,#9a9a9a 40%,#747474 100%);"></div>
<div class="a" style="left:1610px;top:930px;width:1px;height:38px;background:#3c3c3c;"></div>
<div class="a" style="left:1570.6px;top:935px;width:26px;height:26px;border-radius:50%;background:linear-gradient(#7a7a7a,#a8a8a8);"></div>
<div class="a" style="left:1352px;top:944px;width:10.5px;height:10.5px;background:#2e2e2e;"></div>
<div class="a" style="left:1411px;top:944.5px;width:0;height:0;border-top:5.5px solid transparent;border-bottom:5.5px solid transparent;border-left:11px solid #2e2e2e;"></div>
<svg class="a" style="left:1463px;top:942px;" width="16" height="14" viewBox="0 0 16 14"><g fill="none" stroke="#2e2e2e" stroke-width="2.2"><path d="M4 1.1 H1.1 V12.9 H4 M12 1.1 H14.9 V12.9 H12"/></g><g fill="#2e2e2e"><rect x="5" y="6" width="1.6" height="1.8"/><rect x="7.2" y="6" width="1.6" height="1.8"/><rect x="9.4" y="6" width="1.6" height="1.8"/></g></svg>
<svg class="a" style="left:1518px;top:944px;" width="19" height="10" viewBox="0 0 19 10"><path d="M9.5 5 C7 1.5 2 1.5 2 5 C2 8.5 7 8.5 9.5 5 C12 1.5 17 1.5 17 5 C17 8.5 12 8.5 9.5 5 Z" fill="none" stroke="#2e2e2e" stroke-width="2.3"/></svg>
<svg class="a" style="left:1576px;top:941px;" width="16" height="16" viewBox="0 0 16 16"><g fill="none" stroke="#2e2e2e" stroke-width="2.3"><path d="M3 7.5 A5 5 0 0 1 12 4.5"/><path d="M13 8.5 A5 5 0 0 1 4 11.5"/></g><g fill="#2e2e2e"><path d="M9.5 1.5 L14.5 1.5 L14 7 Z"/><path d="M6.5 14.5 L1.5 14.5 L2 9 Z"/></g></svg>
<svg class="a" style="left:1619px;top:928px;" width="40" height="40" viewBox="-20 -20 40 40"><g stroke="#5a1010" stroke-width="8.5" opacity="0.35" transform="translate(1.2,1.2)"><line x1="0" y1="0" x2="0" y2="-17" transform="rotate(0)"/><line x1="0" y1="0" x2="0" y2="-17" transform="rotate(72)"/><line x1="0" y1="0" x2="0" y2="-17" transform="rotate(144)"/><line x1="0" y1="0" x2="0" y2="-17" transform="rotate(216)"/><line x1="0" y1="0" x2="0" y2="-17" transform="rotate(288)"/></g><g stroke="#e81010" stroke-width="8.5"><line x1="0" y1="0" x2="0" y2="-17" transform="rotate(0)"/><line x1="0" y1="0" x2="0" y2="-17" transform="rotate(72)"/><line x1="0" y1="0" x2="0" y2="-17" transform="rotate(144)"/><line x1="0" y1="0" x2="0" y2="-17" transform="rotate(216)"/><line x1="0" y1="0" x2="0" y2="-17" transform="rotate(288)"/></g></svg>
<div class="a" style="left:1328px;top:969.5px;width:169.5px;height:40.5px;border-radius:5px 0 0 0;background:linear-gradient(#b0b0b0 0%,#9a9a9a 40%,#747474 100%);"></div>
<div class="a" style="left:1497.5px;top:969.5px;width:1.5px;height:40px;background:#3c3c3c;"></div>
<div class="a" style="left:1499px;top:969.5px;width:181px;height:40.5px;border-radius:5px 0 0 0;background:linear-gradient(#b0b0b0 0%,#9a9a9a 40%,#747474 100%);"></div>
<div class="a" style="left:1328px;top:968px;width:342px;height:1.5px;background:#3c3c3c;"></div>
<div class="a" style="left:1354px;top:975px;width:26px;height:26px;border-radius:50%;background:linear-gradient(#8a8a8a,#a6a6a6);"></div>
<div class="a" style="left:1620px;top:975px;width:26px;height:26px;border-radius:50%;background:linear-gradient(#8a8a8a,#a6a6a6);"></div>
<svg class="a" style="left:1361px;top:981.5px;" width="12" height="13" viewBox="0 0 12 13"><g fill="none" stroke="#2e2e2e" stroke-width="1.8"><path d="M6 1 L1.5 6.5 L6 12 M11 1 L6.5 6.5 L11 12"/></g></svg>
<svg class="a" style="left:1628px;top:981.5px;" width="12" height="13" viewBox="0 0 12 13"><g fill="none" stroke="#2e2e2e" stroke-width="1.8"><path d="M1 1 L5.5 6.5 L1 12 M6 1 L10.5 6.5 L6 12"/></g></svg>
<div class="t" style="left:1400.50px;top:978.14px;font-size:27.00px;color:#333;font-weight:bold;transform:scaleX(0.9760);">Back</div>
<div class="t" style="left:1534.00px;top:978.14px;font-size:27.00px;color:#333;font-weight:bold;transform:scaleX(1.1106);">Next</div>
<script>
(function(){
var L=[[0.1741,0.0050],[0.1738,0.0049],[0.1733,0.0048],[0.1726,0.0048],[0.1714,0.0051],[0.1703,0.0058],[0.1689,0.0069],[0.1669,0.0086],[0.1644,0.0109],[0.1611,0.0138],[0.1566,0.0177],[0.1510,0.0227],[0.1440,0.0297],[0.1355,0.0399],[0.1241,0.0578],[0.1096,0.0868],[0.0913,0.1327],[0.0687,0.2007],[0.0454,0.2950],[0.0235,0.4127],[0.0082,0.5384],[0.0039,0.6548],[0.0139,0.7502],[0.0389,0.8120],[0.0743,0.8338],[0.1142,0.8262],[0.1547,0.8059],[0.1929,0.7816],[0.2296,0.7543],[0.2658,0.7243],[0.3016,0.6923],[0.3373,0.6589],[0.3731,0.6245],[0.4087,0.5896],[0.4441,0.5547],[0.4788,0.5202],[0.5125,0.4866],[0.5448,0.4544],[0.5752,0.4242],[0.6029,0.3965],[0.6270,0.3725],[0.6482,0.3514],[0.6658,0.3340],[0.6801,0.3197],[0.6915,0.3083],[0.7006,0.2993],[0.7079,0.2920],[0.7140,0.2859],[0.7190,0.2809],[0.7230,0.2770],[0.7260,0.2740],[0.7300,0.2700],[0.7347,0.2653]];
function uv(x,y){var d=-2*x+12*y+3;return [4*x/d,9*y/d];}
function col(x,y,gam){
  var X=x/y,Z=(1-x-y)/y;
  var r=3.2406*X-1.5372-0.4986*Z,g=-0.9689*X+1.8758+0.0415*Z,b=0.0557*X-0.2040+1.0570*Z;
  if(r<0)r=0;if(g<0)g=0;if(b<0)b=0;
  var m=Math.max(r,g,b);r/=m;g/=m;b/=m;
  if(gam){r=Math.pow(r,gam);g=Math.pow(g,gam);b=Math.pow(b,gam);}
  return [r,g,b];
}
var c=document.getElementById('cie');
if(c&&c.getContext){
var ctx=c.getContext('2d'),W=c.width,H=c.height;
var ox=0.6,oy=493.4,su=1064.3,sv=820.75;
function P(u,v){return [ox+u*su,oy-v*sv];}
var R=uv(0.64,0.33),G=uv(0.30,0.60),B=uv(0.15,0.06);
function side(p,a,b){return (b[0]-a[0])*(p[1]-a[1])-(b[1]-a[1])*(p[0]-a[0]);}
var off=document.createElement('canvas');off.width=W;off.height=H;
var oc=off.getContext('2d');var img=oc.createImageData(W,H);var d=img.data;
var s0=side(B,R,G);
for(var py=0;py<H;py++){for(var px=0;px<W;px++){
  var u=(px+0.5-ox)/su,v=(oy-(py+0.5))/sv;if(v<=0.001||u<0)continue;
  var den=6*u-16*v+12,x=9*u/den,y=4*v/den;
  var p=[u,v];
  var inside=(side(p,R,G)*s0>=0)&&(side(p,G,B)*side(R,G,B)>=0)&&(side(p,B,R)*side(G,B,R)>=0);
  var k=(py*W+px)*4;var cc;
  if(inside){cc=col(x,y,1);d[k]=cc[0]*255;d[k+1]=cc[1]*255;d[k+2]=cc[2]*255;}
  else{cc=col(x,y,1);d[k]=cc[0]*255*0.6;d[k+1]=cc[1]*255*0.6;d[k+2]=cc[2]*255*0.6;}
  d[k+3]=255;
}}
oc.putImageData(img,0,0);
ctx.save();ctx.beginPath();
var Q=[];for(var i=0;i<L.length;i++){var q=uv(L[i][0],L[i][1]);Q.push(P(q[0],q[1]));}
var n=Q.length;ctx.moveTo(Q[0][0],Q[0][1]);
for(var i=0;i<n-1;i++){var p0=Q[Math.max(i-1,0)],p1=Q[i],p2=Q[i+1],p3=Q[Math.min(i+2,n-1)];
  for(var t=1;t<=10;t++){var tt=t/10,t2=tt*tt,t3=t2*tt;
    var xx=0.5*((2*p1[0])+(-p0[0]+p2[0])*tt+(2*p0[0]-5*p1[0]+4*p2[0]-p3[0])*t2+(-p0[0]+3*p1[0]-3*p2[0]+p3[0])*t3);
    var yy=0.5*((2*p1[1])+(-p0[1]+p2[1])*tt+(2*p0[1]-5*p1[1]+4*p2[1]-p3[1])*t2+(-p0[1]+3*p1[1]-3*p2[1]+p3[1])*t3);
    ctx.lineTo(xx,yy);}}
ctx.closePath();ctx.clip();ctx.drawImage(off,0,0);ctx.restore();
}
var c2=document.getElementById('xy');
if(c2&&c2.getContext){
var ctx2=c2.getContext('2d'),W2=c2.width,H2=c2.height;
var img2=ctx2.createImageData(W2,H2),d2=img2.data;
var cx=168.8,cy=97.4,sc=0.00033;
for(var py=0;py<H2;py++){for(var px=0;px<W2;px++){
  var x=0.3127+(px+0.5-cx)*sc,y=0.3290-(py+0.5-cy)*sc*1.35;
  var cc=col(x,y,0.4545);var k=(py*W2+px)*4;
  d2[k]=cc[0]*255;d2[k+1]=cc[1]*255;d2[k+2]=cc[2]*255;d2[k+3]=255;
}}
ctx2.putImageData(img2,0,0);
}
})();

</script>
</body></html>
